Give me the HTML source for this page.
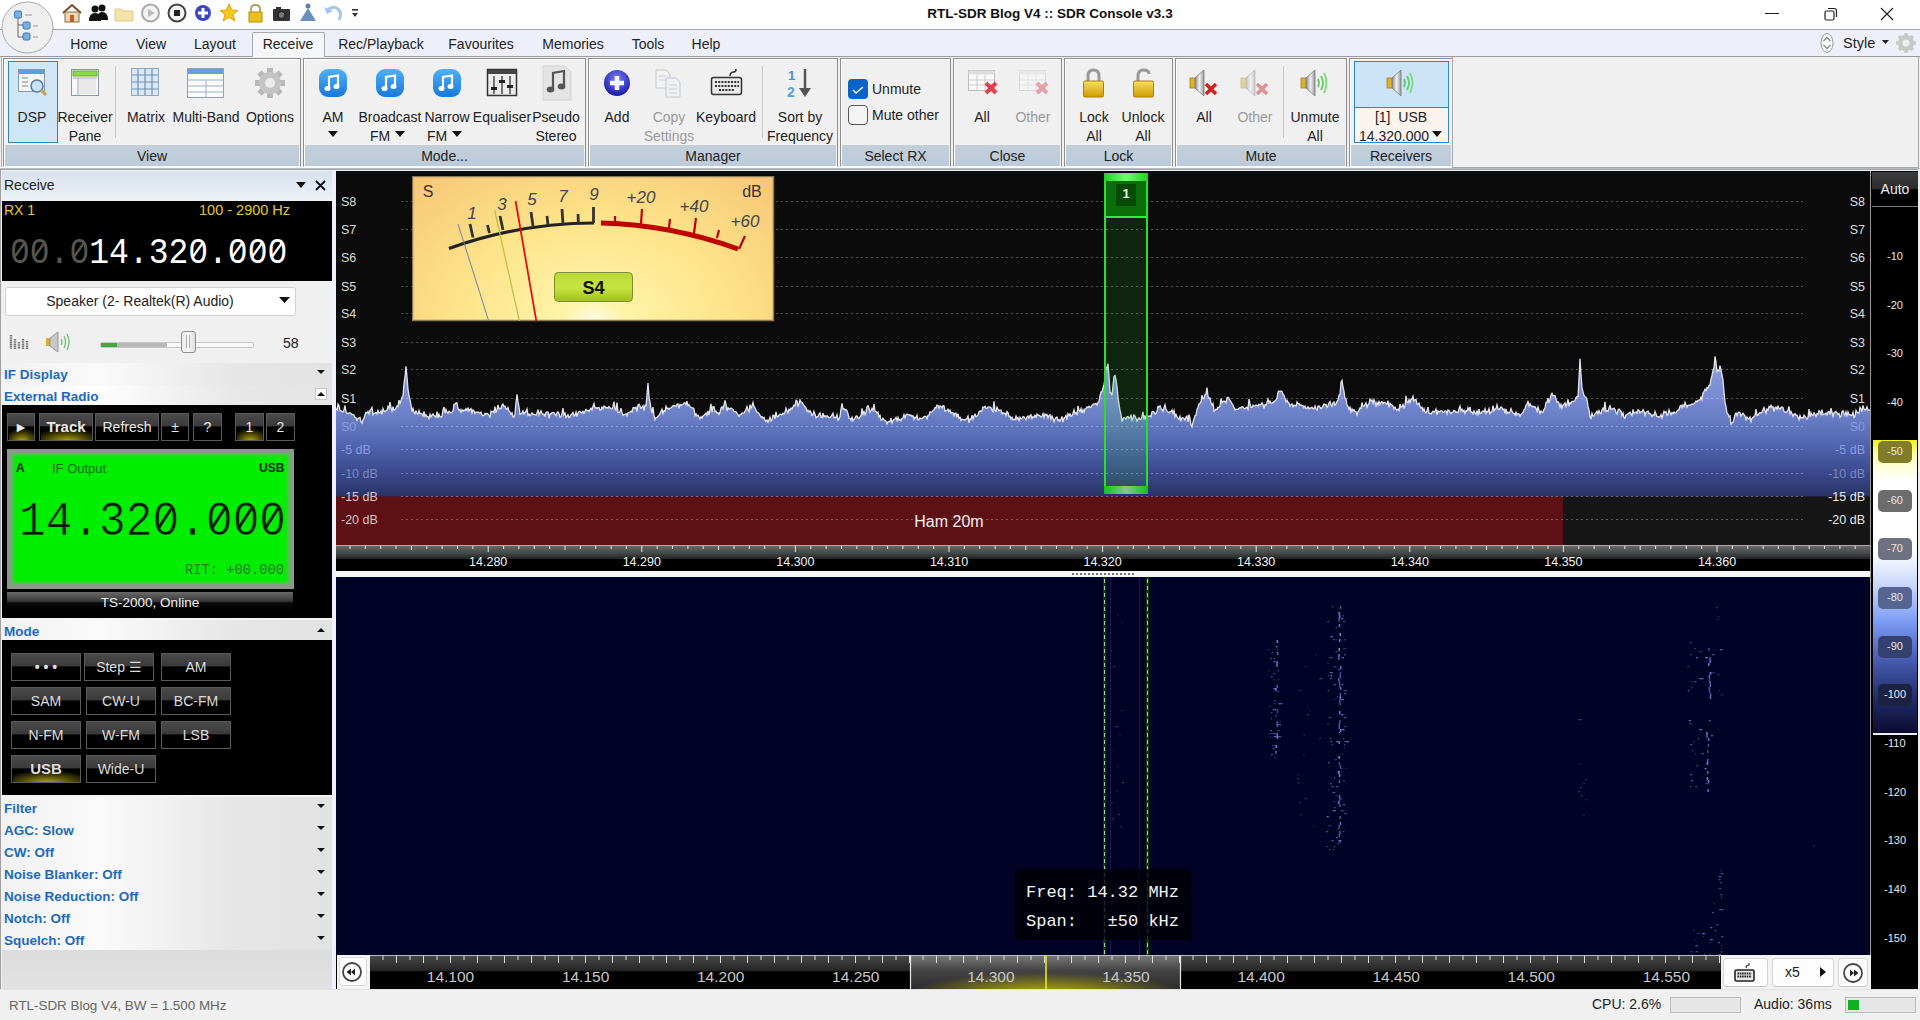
<!DOCTYPE html>
<html><head><meta charset="utf-8"><title>SDR Console</title><style>*{margin:0;padding:0}
html,body{width:1920px;height:1020px;overflow:hidden;background:#f0f0f0}
body{position:relative;font-family:"Liberation Sans",sans-serif}
.abs{position:absolute}
.t{white-space:nowrap;line-height:1.15}
.mono{font-family:"Liberation Mono",monospace;white-space:nowrap;line-height:1.15}
</style></head><body>
<div class="abs" style="left:0;top:0;width:1920px;height:29px;background:#fff"></div>
<div class="abs" style="left:0;top:29px;width:1920px;height:1px;background:#a9a9b0"></div>
<div class="abs" style="left:0;top:30px;width:1920px;height:26px;background:#edf0f9"></div>
<div class="abs" style="left:0;top:56px;width:1920px;height:1px;background:#9a9aa0"></div>
<svg class="abs" style="left:0;top:0" width="60" height="60" viewBox="0 0 60 60">
<circle cx="27.5" cy="27.5" r="25.5" fill="#efefef" stroke="#a8a8a8" stroke-width="1"/>
<path d="M18 14 V37 M18 25 H24 M18 37 H24" stroke="#666" stroke-width="1" fill="none"/>
<rect x="14.5" y="11" width="7" height="7" rx="1.5" fill="#7ab0e0" stroke="#3a78b5"/>
<rect x="23" y="22" width="7" height="7" rx="1.5" fill="#7ab0e0" stroke="#3a78b5"/>
<rect x="23" y="33" width="7" height="7" rx="1.5" fill="#7ab0e0" stroke="#3a78b5"/>
<path d="M25 15 H32 M33 26 H38 M33 37 H38" stroke="#999" stroke-width="1.2"/>
</svg>
<svg class="abs" style="left:60px;top:2px" width="310" height="24" viewBox="60 2 310 24">
<!-- home -->
<path d="M63 13 L72 5 L81 13" stroke="#7a4a20" stroke-width="2" fill="none"/>
<rect x="65" y="12" width="14" height="10" fill="#e8d8b8" stroke="#8a6a40"/>
<rect x="70" y="15" width="4" height="7" fill="#c06020"/>
<!-- people -->
<circle cx="95" cy="9" r="3.5" fill="#111"/><circle cx="102" cy="8" r="3.5" fill="#111"/>
<path d="M89 21 Q89 13 95 13 Q101 13 101 21 Z" fill="#111"/><path d="M97 20 Q97 12 102 12 Q108 12 108 20 Z" fill="#111"/>
<!-- folder -->
<path d="M115 9 H121 L123 11 H133 V21 H115 Z" fill="#f6e3a8" stroke="#e0c880" stroke-width="1"/>
<!-- play -->
<circle cx="150.5" cy="13" r="8.5" fill="#f4f4f4" stroke="#aaa" stroke-width="2"/>
<path d="M148 9 L155 13 L148 17 Z" fill="#bbb"/>
<!-- stop -->
<circle cx="177" cy="13" r="8.5" fill="#f4f4f4" stroke="#444" stroke-width="2"/>
<rect x="174" y="10" width="6" height="6" fill="#222"/>
<!-- plus -->
<circle cx="203" cy="13" r="8" fill="#3b45c8"/>
<path d="M203 8 V18 M198 13 H208" stroke="#fff" stroke-width="3"/>
<!-- star -->
<path d="M229 4 L231.6 10 L238 10.5 L233 14.5 L234.8 21 L229 17.3 L223.2 21 L225 14.5 L220 10.5 L226.4 10 Z" fill="#f8c820" stroke="#e0a000" stroke-width="1"/>
<!-- lock -->
<path d="M251 12 V9 Q251 5 255.5 5 Q260 5 260 9 V12" stroke="#b0a060" stroke-width="1.8" fill="none"/>
<rect x="249" y="12" width="13" height="10" fill="#e8c020" stroke="#c09000"/>
<!-- camera -->
<rect x="273" y="9" width="17" height="12" rx="1" fill="#333"/><rect x="276" y="7" width="5" height="3" fill="#333"/>
<circle cx="281.5" cy="15" r="3.5" fill="#777" stroke="#111"/>
<!-- pawn -->
<circle cx="308" cy="6" r="2.5" fill="#5a80b0"/>
<path d="M308 8 L300 21 H316 Z" fill="#6a90c0"/>
<!-- undo -->
<path d="M327 11 Q333 4 339 10 Q342 14 339 20" stroke="#a8c4ea" stroke-width="3" fill="none"/>
<path d="M324 7 L327 14 L333 11 Z" fill="#a8c4ea"/>
<!-- dropdown -->
<rect x="352" y="9" width="6" height="1.6" fill="#333"/><path d="M352 13 H358 L355 17 Z" fill="#333"/>
</svg>
<div class="abs t" style="left:0;top:5.5px;width:2100px;text-align:center;font-weight:bold;font-size:13.5px;color:#111">RTL-SDR Blog V4 :: SDR Console v3.3</div>
<svg class="abs" style="left:1750px;top:0" width="170" height="29">
<path d="M15 13.5 H29" stroke="#222" stroke-width="1"/>
<rect x="75" y="11" width="9" height="9" fill="none" stroke="#222" stroke-width="1.2" rx="1.5"/>
<path d="M78 8.5 H84 Q86.5 8.5 86.5 11 V17" fill="none" stroke="#222" stroke-width="1.2"/>
<path d="M131 8 L143 20 M143 8 L131 20" stroke="#222" stroke-width="1.2"/>
</svg>
<div class="abs" style="left:252px;top:32px;width:71px;height:25px;background:#f5f6fa;border:1px solid #a8a8b0;border-bottom:none;border-radius:2px 2px 0 0"></div>
<div class="abs t" style="left:29px;top:36px;width:120px;text-align:center;font-size:14px;color:#222">Home</div>
<div class="abs t" style="left:91px;top:36px;width:120px;text-align:center;font-size:14px;color:#222">View</div>
<div class="abs t" style="left:155px;top:36px;width:120px;text-align:center;font-size:14px;color:#222">Layout</div>
<div class="abs t" style="left:228px;top:36px;width:120px;text-align:center;font-size:14px;color:#222">Receive</div>
<div class="abs t" style="left:321px;top:36px;width:120px;text-align:center;font-size:14px;color:#222">Rec/Playback</div>
<div class="abs t" style="left:421px;top:36px;width:120px;text-align:center;font-size:14px;color:#222">Favourites</div>
<div class="abs t" style="left:513px;top:36px;width:120px;text-align:center;font-size:14px;color:#222">Memories</div>
<div class="abs t" style="left:588px;top:36px;width:120px;text-align:center;font-size:14px;color:#222">Tools</div>
<div class="abs t" style="left:646px;top:36px;width:120px;text-align:center;font-size:14px;color:#222">Help</div>
<svg class="abs" style="left:1815px;top:30px" width="105" height="26">
<ellipse cx="12" cy="13" rx="6" ry="9.5" fill="#fafafa" stroke="#999" stroke-width="1"/>
<path d="M8.5 11 L12 7.5 L15.5 11 M8.5 15 L12 18.5 L15.5 15" stroke="#888" stroke-width="1.3" fill="none"/>
<path d="M67 10 H74 L70.5 14 Z" fill="#222"/>
<g transform="translate(91,13)"><circle r="8" fill="#c8c8c8"/><circle r="3.5" fill="#eee"/>
<path d="M0 -10 V10 M-10 0 H10 M-7 -7 L7 7 M7 -7 L-7 7" stroke="#c8c8c8" stroke-width="3.5"/><circle r="3.5" fill="#eee"/></g>
</svg>
<div class="abs t" style="left:1843px;top:35px;font-size:14.5px;color:#222">Style</div>
<div class="abs" style="left:0;top:57px;width:1920px;height:112px;background:#f0f0f0"></div>
<div class="abs" style="left:1px;top:57px;width:1px;height:112px;background:#b0b0b0"></div>
<div class="abs" style="left:0;top:167px;width:1920px;height:1px;background:#fafbfc"></div><div class="abs" style="left:0;top:168px;width:1920px;height:1px;background:#b8bcc0"></div><div class="abs" style="left:0;top:169px;width:1920px;height:1px;background:#a0a4a8"></div>
<div class="abs" style="left:3px;top:58px;width:296px;height:107px;border:1px solid #8e8e8e;border-bottom-color:#fbfcff;box-shadow:inset 1px 1px 0 #fff"></div>
<div class="abs" style="left:5px;top:145px;width:294px;height:21px;background:linear-gradient(#c3ced8,#bccbdb)"></div>
<div class="abs t" style="left:3px;top:148px;width:298px;text-align:center;font-size:14px;color:#222">View</div>
<div class="abs" style="left:303px;top:58px;width:281px;height:107px;border:1px solid #8e8e8e;border-bottom-color:#fbfcff;box-shadow:inset 1px 1px 0 #fff"></div>
<div class="abs" style="left:305px;top:145px;width:279px;height:21px;background:linear-gradient(#c3ced8,#bccbdb)"></div>
<div class="abs t" style="left:303px;top:148px;width:283px;text-align:center;font-size:14px;color:#222">Mode...</div>
<div class="abs" style="left:588px;top:58px;width:248px;height:107px;border:1px solid #8e8e8e;border-bottom-color:#fbfcff;box-shadow:inset 1px 1px 0 #fff"></div>
<div class="abs" style="left:590px;top:145px;width:246px;height:21px;background:linear-gradient(#c3ced8,#bccbdb)"></div>
<div class="abs t" style="left:588px;top:148px;width:250px;text-align:center;font-size:14px;color:#222">Manager</div>
<div class="abs" style="left:840px;top:58px;width:109px;height:107px;border:1px solid #8e8e8e;border-bottom-color:#fbfcff;box-shadow:inset 1px 1px 0 #fff"></div>
<div class="abs" style="left:842px;top:145px;width:107px;height:21px;background:linear-gradient(#c3ced8,#bccbdb)"></div>
<div class="abs t" style="left:840px;top:148px;width:111px;text-align:center;font-size:14px;color:#222">Select RX</div>
<div class="abs" style="left:953px;top:58px;width:107px;height:107px;border:1px solid #8e8e8e;border-bottom-color:#fbfcff;box-shadow:inset 1px 1px 0 #fff"></div>
<div class="abs" style="left:955px;top:145px;width:105px;height:21px;background:linear-gradient(#c3ced8,#bccbdb)"></div>
<div class="abs t" style="left:953px;top:148px;width:109px;text-align:center;font-size:14px;color:#222">Close</div>
<div class="abs" style="left:1064px;top:58px;width:107px;height:107px;border:1px solid #8e8e8e;border-bottom-color:#fbfcff;box-shadow:inset 1px 1px 0 #fff"></div>
<div class="abs" style="left:1066px;top:145px;width:105px;height:21px;background:linear-gradient(#c3ced8,#bccbdb)"></div>
<div class="abs t" style="left:1064px;top:148px;width:109px;text-align:center;font-size:14px;color:#222">Lock</div>
<div class="abs" style="left:1175px;top:58px;width:170px;height:107px;border:1px solid #8e8e8e;border-bottom-color:#fbfcff;box-shadow:inset 1px 1px 0 #fff"></div>
<div class="abs" style="left:1177px;top:145px;width:168px;height:21px;background:linear-gradient(#c3ced8,#bccbdb)"></div>
<div class="abs t" style="left:1175px;top:148px;width:172px;text-align:center;font-size:14px;color:#222">Mute</div>
<div class="abs" style="left:1349px;top:58px;width:102px;height:107px;border:1px solid #8e8e8e;border-bottom-color:#fbfcff;box-shadow:inset 1px 1px 0 #fff"></div>
<div class="abs" style="left:1351px;top:145px;width:100px;height:21px;background:linear-gradient(#c3ced8,#bccbdb)"></div>
<div class="abs t" style="left:1349px;top:148px;width:104px;text-align:center;font-size:14px;color:#222">Receivers</div>
<div class="abs" style="left:1452px;top:57px;width:465px;height:110px;border:1px solid #a8a8a8;border-top:none"></div>
<div class="abs" style="left:8px;top:61px;width:48px;height:80px;background:#cfe6f8;border:1px solid #3c7fb1"></div>
<div class="abs" style="left:1354px;top:61px;width:93px;height:80px;background:#fbf3ee;border:1px solid #2f84d0"></div>
<div class="abs" style="left:1355px;top:62px;width:93px;height:45px;background:#cce4f7;border-bottom:1px solid #2f84d0"></div>
<div class="abs" style="left:115px;top:66px;width:1px;height:72px;background:#c8c8c8"></div>
<div class="abs" style="left:762px;top:66px;width:1px;height:72px;background:#c8c8c8"></div>
<div class="abs" style="left:1283px;top:66px;width:1px;height:72px;background:#c8c8c8"></div>
<div class="abs t" style="left:-18px;top:109px;width:100px;text-align:center;font-size:14px;color:#222">DSP</div>
<div class="abs t" style="left:35px;top:109px;width:100px;text-align:center;font-size:14px;color:#222">Receiver</div>
<div class="abs t" style="left:35px;top:128px;width:100px;text-align:center;font-size:14px;color:#222">Pane</div>
<div class="abs t" style="left:96px;top:109px;width:100px;text-align:center;font-size:14px;color:#222">Matrix</div>
<div class="abs t" style="left:156px;top:109px;width:100px;text-align:center;font-size:14px;color:#222">Multi-Band</div>
<div class="abs t" style="left:220px;top:109px;width:100px;text-align:center;font-size:14px;color:#222">Options</div>
<div class="abs t" style="left:283px;top:109px;width:100px;text-align:center;font-size:14px;color:#222">AM</div>
<div class="abs t" style="left:340px;top:109px;width:100px;text-align:center;font-size:14px;color:#222">Broadcast</div>
<div class="abs t" style="left:397px;top:109px;width:100px;text-align:center;font-size:14px;color:#222">Narrow</div>
<div class="abs t" style="left:452px;top:109px;width:100px;text-align:center;font-size:14px;color:#222">Equaliser</div>
<div class="abs t" style="left:506px;top:109px;width:100px;text-align:center;font-size:14px;color:#222">Pseudo</div>
<div class="abs t" style="left:506px;top:128px;width:100px;text-align:center;font-size:14px;color:#222">Stereo</div>
<div class="abs t" style="left:567px;top:109px;width:100px;text-align:center;font-size:14px;color:#222">Add</div>
<div class="abs t" style="left:619px;top:109px;width:100px;text-align:center;font-size:14px;color:#9a9a9a">Copy</div>
<div class="abs t" style="left:619px;top:128px;width:100px;text-align:center;font-size:14px;color:#9a9a9a">Settings</div>
<div class="abs t" style="left:676px;top:109px;width:100px;text-align:center;font-size:14px;color:#222">Keyboard</div>
<div class="abs t" style="left:750px;top:109px;width:100px;text-align:center;font-size:14px;color:#222">Sort by</div>
<div class="abs t" style="left:750px;top:128px;width:100px;text-align:center;font-size:14px;color:#222">Frequency</div>
<div class="abs t" style="left:932px;top:109px;width:100px;text-align:center;font-size:14px;color:#222">All</div>
<div class="abs t" style="left:983px;top:109px;width:100px;text-align:center;font-size:14px;color:#9a9a9a">Other</div>
<div class="abs t" style="left:1044px;top:109px;width:100px;text-align:center;font-size:14px;color:#222">Lock</div>
<div class="abs t" style="left:1044px;top:128px;width:100px;text-align:center;font-size:14px;color:#222">All</div>
<div class="abs t" style="left:1093px;top:109px;width:100px;text-align:center;font-size:14px;color:#222">Unlock</div>
<div class="abs t" style="left:1093px;top:128px;width:100px;text-align:center;font-size:14px;color:#222">All</div>
<div class="abs t" style="left:1154px;top:109px;width:100px;text-align:center;font-size:14px;color:#222">All</div>
<div class="abs t" style="left:1205px;top:109px;width:100px;text-align:center;font-size:14px;color:#9a9a9a">Other</div>
<div class="abs t" style="left:1265px;top:109px;width:100px;text-align:center;font-size:14px;color:#222">Unmute</div>
<div class="abs t" style="left:1265px;top:128px;width:100px;text-align:center;font-size:14px;color:#222">All</div>
<div class="abs t" style="left:1351px;top:109px;width:100px;text-align:center;font-size:14px;color:#222">[1]&nbsp;&nbsp;USB</div>
<div class="abs t" style="left:370px;top:128px;font-size:14px;color:#222">FM</div>
<svg class="abs" style="left:395px;top:131px" width="12" height="8"><path d="M0 0 H10 L5 6 Z" fill="#111"/></svg>
<div class="abs t" style="left:427px;top:128px;font-size:14px;color:#222">FM</div>
<svg class="abs" style="left:452px;top:131px" width="12" height="8"><path d="M0 0 H10 L5 6 Z" fill="#111"/></svg>
<svg class="abs" style="left:328px;top:131px" width="12" height="8"><path d="M0 0 H10 L5 6 Z" fill="#111"/></svg>
<div class="abs t" style="left:1359px;top:128px;font-size:14px;color:#222">14.320.000</div>
<svg class="abs" style="left:1432px;top:131px" width="12" height="8"><path d="M0 0 H10 L5 6 Z" fill="#111"/></svg>
<div class="abs" style="left:848px;top:79px;width:20px;height:20px;background:#0a64c8;border-radius:4px"></div>
<svg class="abs" style="left:848px;top:79px" width="20" height="20"><path d="M5 11 L8 14 L15 8" stroke="#e8f4ff" stroke-width="1.6" fill="none"/></svg>
<div class="abs" style="left:848px;top:105px;width:20px;height:20px;border:1px solid #555;border-radius:4px;box-sizing:border-box;background:#f4f4f4"></div>
<div class="abs t" style="left:872px;top:81px;font-size:14px;color:#222">Unmute</div>
<div class="abs t" style="left:872px;top:107px;font-size:14px;color:#222">Mute other</div>
<svg class="abs" style="left:16px;top:66px" width="34" height="34" viewBox="0 0 34 34">
<rect x="2.5" y="3.5" width="26" height="22" fill="#f4f4f4" stroke="#8898a8"/>
<rect x="3" y="4" width="25" height="4" fill="#5aa0e0"/>
<path d="M6 12 H12 M6 16 H12 M6 20 H12" stroke="#aaa" stroke-width="1.5"/>
<circle cx="21" cy="20" r="6" fill="#c8e4f8" stroke="#5878a0" stroke-width="1.5"/>
<path d="M25 24 L30 29" stroke="#d0a040" stroke-width="3"/>
</svg>
<svg class="abs" style="left:69px;top:67px" width="32" height="32" viewBox="0 0 32 32">
<rect x="2.5" y="2.5" width="27" height="26" fill="#f8f8f8" stroke="#8898a8"/>
<rect x="4" y="4" width="24" height="5" fill="#8ad848" stroke="#6ab030"/>
<path d="M4 11 H28 M9 11 V28" stroke="#aaa"/>
<rect x="10" y="12" width="17" height="15" fill="#e8e8e8"/>
</svg>
<svg class="abs" style="left:130px;top:67px" width="32" height="30" viewBox="0 0 32 30">
<rect x="1.5" y="1.5" width="27" height="27" fill="#d8e8f4" stroke="#90a8c0"/>
<path d="M8 2 V28 M15 2 V28 M22 2 V28 M2 8 H28 M2 15 H28 M2 22 H28" stroke="#7090b0" stroke-width="1.2"/>
</svg>
<svg class="abs" style="left:186px;top:66px" width="40" height="34" viewBox="0 0 40 34">
<rect x="1.5" y="2.5" width="36" height="29" fill="#fafafa" stroke="#90a0b8"/>
<rect x="2" y="3" width="35" height="5" fill="#6a9ee0"/>
<path d="M2 14 H37 M2 20 H37 M2 26 H37 M20 14 V31" stroke="#a0b0c8"/>
</svg>
<svg class="abs" style="left:253px;top:67px" width="34" height="34" viewBox="0 0 34 34">
<g transform="translate(17,16)"><path d="M0 -15 V15 M-15 0 H15 M-10.6 -10.6 L10.6 10.6 M10.6 -10.6 L-10.6 10.6" stroke="#b8b8b8" stroke-width="6"/>
<circle r="11" fill="#c4c4c4"/><circle r="5" fill="#ececec"/></g>
</svg>
<svg class="abs" style="left:318px;top:68px" width="30" height="30" viewBox="0 0 30 30">
<defs><linearGradient id="bg318" x1="0" y1="0" x2="0" y2="1"><stop offset="0" stop-color="#4fb0f8"/><stop offset="1" stop-color="#1a78d8"/></linearGradient></defs>
<rect x="1" y="1" width="28" height="28" rx="9" fill="url(#bg318)"/>
<path d="M11 20 V9 L20 7.5 V18" stroke="#fff" stroke-width="2.2" fill="none"/>
<ellipse cx="9.5" cy="20.5" rx="3" ry="2.5" fill="#fff"/><ellipse cx="18.5" cy="18.5" rx="3" ry="2.5" fill="#fff"/>
</svg>
<svg class="abs" style="left:375px;top:68px" width="30" height="30" viewBox="0 0 30 30">
<defs><linearGradient id="bg375" x1="0" y1="0" x2="0" y2="1"><stop offset="0" stop-color="#4fb0f8"/><stop offset="1" stop-color="#1a78d8"/></linearGradient></defs>
<rect x="1" y="1" width="28" height="28" rx="9" fill="url(#bg375)"/>
<path d="M11 20 V9 L20 7.5 V18" stroke="#fff" stroke-width="2.2" fill="none"/>
<ellipse cx="9.5" cy="20.5" rx="3" ry="2.5" fill="#fff"/><ellipse cx="18.5" cy="18.5" rx="3" ry="2.5" fill="#fff"/>
</svg>
<svg class="abs" style="left:432px;top:68px" width="30" height="30" viewBox="0 0 30 30">
<defs><linearGradient id="bg432" x1="0" y1="0" x2="0" y2="1"><stop offset="0" stop-color="#4fb0f8"/><stop offset="1" stop-color="#1a78d8"/></linearGradient></defs>
<rect x="1" y="1" width="28" height="28" rx="9" fill="url(#bg432)"/>
<path d="M11 20 V9 L20 7.5 V18" stroke="#fff" stroke-width="2.2" fill="none"/>
<ellipse cx="9.5" cy="20.5" rx="3" ry="2.5" fill="#fff"/><ellipse cx="18.5" cy="18.5" rx="3" ry="2.5" fill="#fff"/>
</svg>
<svg class="abs" style="left:486px;top:68px" width="32" height="30" viewBox="0 0 32 30">
<rect x="1.5" y="1.5" width="29" height="26" fill="#ececec" stroke="#333" stroke-width="1.5"/>
<rect x="2" y="2" width="28" height="4" fill="#444"/>
<path d="M8 8 V26 M16 8 V26 M24 8 V26" stroke="#333" stroke-width="1.3"/>
<rect x="5" y="19" width="6" height="3" fill="#222"/><rect x="13" y="12" width="6" height="3" fill="#222"/><rect x="21" y="17" width="6" height="3" fill="#222"/>
</svg>
<svg class="abs" style="left:541px;top:65px" width="32" height="36" viewBox="0 0 32 36">
<path d="M2 1 H24 L30 7 V35 H2 Z" fill="#e4e4e4" stroke="#d0d0d0"/>
<path d="M12 24 V8 L23 6 V21" stroke="#555" stroke-width="2.2" fill="none"/>
<ellipse cx="9.5" cy="24.5" rx="3.8" ry="3" fill="#555"/><ellipse cx="20.5" cy="21.5" rx="3.8" ry="3" fill="#555"/>
</svg>
<svg class="abs" style="left:603px;top:69px" width="30" height="30" viewBox="0 0 30 30">
<defs><radialGradient id="addg" cx="0.5" cy="0.35" r="0.6"><stop offset="0" stop-color="#8080ff"/><stop offset="1" stop-color="#2020a8"/></radialGradient></defs>
<circle cx="14" cy="14" r="13" fill="url(#addg)"/>
<path d="M14 7 V21 M7 14 H21" stroke="#f4f8ff" stroke-width="4.5"/>
</svg>
<svg class="abs" style="left:653px;top:68px" width="32" height="32" viewBox="0 0 32 32">
<path d="M3 2 H13 L17 6 V20 H3 Z" fill="#f2f2f2" stroke="#c8c8c8"/>
<path d="M13 10 H23 L27 14 V29 H13 Z" fill="#eef2f6" stroke="#c0c8d0"/>
<path d="M16 17 H24 M16 21 H24 M16 25 H24 M6 8 H13 M6 12 H13" stroke="#ccc"/>
</svg>
<svg class="abs" style="left:710px;top:68px" width="34" height="30" viewBox="0 0 34 30">
<path d="M20 8 Q20 4 24 4 Q26 4 26 1" stroke="#333" stroke-width="1.5" fill="none"/>
<rect x="1.5" y="9.5" width="30" height="17" rx="2" fill="#e8e8e8" stroke="#333" stroke-width="1.5"/>
<path d="M5 14 H29 M5 18 H29 M9 22 H25" stroke="#333" stroke-width="2" stroke-dasharray="2 1.2"/>
</svg>
<svg class="abs" style="left:784px;top:66px" width="34" height="34" viewBox="0 0 34 34">
<text x="4" y="14" font-family="Liberation Sans" font-weight="bold" font-size="13" fill="#4a90d0">1</text>
<text x="3" y="31" font-family="Liberation Sans" font-weight="bold" font-size="14" fill="#5aa0e0">2</text>
<path d="M21 3 V28" stroke="#555" stroke-width="2.5"/>
<path d="M15 22 L21 31 L27 22 Z" fill="#555"/>
</svg>
<svg class="abs" style="left:967px;top:68px;opacity:1" width="32" height="28" viewBox="0 0 32 28">
<rect x="1.5" y="2.5" width="26" height="20" fill="#fafafa" stroke="#bbb"/>
<rect x="1.5" y="2.5" width="26" height="4" fill="#ddd"/>
<path d="M2 12 H27 M2 17 H27 M10 7 V22 M18 7 V22" stroke="#ccc" stroke-width="1"/>
<path d="M19 15 L29 25 M29 15 L19 25" stroke="#e04050" stroke-width="4"/>
</svg>
<svg class="abs" style="left:1018px;top:68px;opacity:0.45" width="32" height="28" viewBox="0 0 32 28">
<rect x="1.5" y="2.5" width="26" height="20" fill="#fafafa" stroke="#bbb"/>
<rect x="1.5" y="2.5" width="26" height="4" fill="#ddd"/>
<path d="M2 12 H27 M2 17 H27 M10 7 V22 M18 7 V22" stroke="#ccc" stroke-width="1"/>
<path d="M19 15 L29 25 M29 15 L19 25" stroke="#e04050" stroke-width="4"/>
</svg>
<svg class="abs" style="left:1082px;top:67px" width="24" height="32" viewBox="0 0 24 32">
<defs><linearGradient id="lk1082" x1="0" y1="0" x2="0" y2="1"><stop offset="0" stop-color="#f8e060"/><stop offset="1" stop-color="#d09a00"/></linearGradient></defs>
<path d="M6 14 V9 Q6 3 11.5 3 Q17 3 17 9 V14" stroke="#999" stroke-width="3" fill="none"/>
<rect x="1.5" y="14" width="20" height="16" rx="1.5" fill="url(#lk1082)" stroke="#b08000"/>
</svg>
<svg class="abs" style="left:1132px;top:67px" width="24" height="32" viewBox="0 0 24 32">
<defs><linearGradient id="lk1132" x1="0" y1="0" x2="0" y2="1"><stop offset="0" stop-color="#f8e060"/><stop offset="1" stop-color="#d09a00"/></linearGradient></defs>
<path d="M6 14 V9 Q6 3 11.5 3 Q17 3 17 7" stroke="#999" stroke-width="3" fill="none"/>
<rect x="1.5" y="14" width="20" height="16" rx="1.5" fill="url(#lk1132)" stroke="#b08000"/>
</svg>
<svg class="abs" style="left:1187px;top:67px;opacity:1" width="34" height="32" viewBox="0 0 34 32">
<defs><linearGradient id="sp1187" x1="0" y1="0" x2="1" y2="0"><stop offset="0" stop-color="#888"/><stop offset="0.5" stop-color="#f0f0f0"/><stop offset="1" stop-color="#999"/></linearGradient></defs>
<rect x="3" y="11" width="6" height="10" fill="#e0b020" stroke="#a08020" stroke-width="0.8"/>
<path d="M8 11 L17 3 V29 L8 21 Z" fill="url(#sp1187)" stroke="#777" stroke-width="0.8"/><path d="M19 17 L29 27 M29 17 L19 27" stroke="#d02020" stroke-width="3.5"/></svg>
<svg class="abs" style="left:1238px;top:67px;opacity:0.45" width="34" height="32" viewBox="0 0 34 32">
<defs><linearGradient id="sp1238" x1="0" y1="0" x2="1" y2="0"><stop offset="0" stop-color="#888"/><stop offset="0.5" stop-color="#f0f0f0"/><stop offset="1" stop-color="#999"/></linearGradient></defs>
<rect x="3" y="11" width="6" height="10" fill="#e0b020" stroke="#a08020" stroke-width="0.8"/>
<path d="M8 11 L17 3 V29 L8 21 Z" fill="url(#sp1238)" stroke="#777" stroke-width="0.8"/><path d="M19 17 L29 27 M29 17 L19 27" stroke="#d02020" stroke-width="3.5"/></svg>
<svg class="abs" style="left:1298px;top:67px;opacity:1" width="34" height="32" viewBox="0 0 34 32">
<defs><linearGradient id="sp1298" x1="0" y1="0" x2="1" y2="0"><stop offset="0" stop-color="#888"/><stop offset="0.5" stop-color="#f0f0f0"/><stop offset="1" stop-color="#999"/></linearGradient></defs>
<rect x="3" y="11" width="6" height="10" fill="#e0b020" stroke="#a08020" stroke-width="0.8"/>
<path d="M8 11 L17 3 V29 L8 21 Z" fill="url(#sp1298)" stroke="#777" stroke-width="0.8"/><path d="M20 12 Q22 16 20 20" stroke="#6c6" stroke-width="1.8" fill="none"/>
<path d="M23 9 Q27 16 23 23" stroke="#6c6" stroke-width="1.8" fill="none"/>
<path d="M26 6 Q31 16 26 26" stroke="#7d7" stroke-width="1.8" fill="none"/></svg>
<svg class="abs" style="left:1384px;top:67px;opacity:1" width="34" height="32" viewBox="0 0 34 32">
<defs><linearGradient id="sp1384" x1="0" y1="0" x2="1" y2="0"><stop offset="0" stop-color="#888"/><stop offset="0.5" stop-color="#f0f0f0"/><stop offset="1" stop-color="#999"/></linearGradient></defs>
<rect x="3" y="11" width="6" height="10" fill="#e0b020" stroke="#a08020" stroke-width="0.8"/>
<path d="M8 11 L17 3 V29 L8 21 Z" fill="url(#sp1384)" stroke="#777" stroke-width="0.8"/><path d="M20 12 Q22 16 20 20" stroke="#6c6" stroke-width="1.8" fill="none"/>
<path d="M23 9 Q27 16 23 23" stroke="#6c6" stroke-width="1.8" fill="none"/>
<path d="M26 6 Q31 16 26 26" stroke="#7d7" stroke-width="1.8" fill="none"/></svg>
<div class="abs" style="left:0;top:170px;width:336px;height:820px;background:#f0f0f0"></div><div class="abs" style="left:0;top:170px;width:336px;height:1px;background:#eef0f8"></div>
<div class="abs" style="left:0;top:170px;width:1px;height:820px;background:#a0a0a0"></div>
<div class="abs" style="left:2px;top:171px;width:330px;height:30px;background:linear-gradient(#d8e2ec,#e4ebf3 60%,#eef2f7)"></div>
<div class="abs t" style="left:4px;top:177px;font-size:14px;color:#222">Receive</div>
<svg class="abs" style="left:294px;top:180px" width="40" height="12"><path d="M2 2 H12 L7 8 Z" fill="#111"/><path d="M22 1 L31 10 M31 1 L22 10" stroke="#111" stroke-width="1.8"/></svg>
<div class="abs" style="left:2px;top:201px;width:330px;height:80px;background:#000"></div>
<div class="abs t" style="left:4px;top:202px;font-size:14px;color:#e8c830">RX 1</div>
<div class="abs t" style="left:199px;top:202px;font-size:14.5px;color:#e8c830">100 - 2900 Hz</div>
<div class="abs mono" style="left:10px;top:232.5px;font-size:33px;color:#56564f;letter-spacing:0;transform:scaleY(1.12);transform-origin:0 0">00.0<span style="color:#fff">14.320.000</span></div>
<svg class="abs" style="left:0;top:200px" width="332" height="82" viewBox="0 200 332 82"><rect x="16.1" y="246.5" width="6.4" height="7.5" fill="#000"/><line x1="14.1" y1="257.5" x2="24.5" y2="243" stroke="#56564f" stroke-width="2.3"/><rect x="35.9" y="246.5" width="6.4" height="7.5" fill="#000"/><line x1="33.9" y1="257.5" x2="44.3" y2="243" stroke="#56564f" stroke-width="2.3"/><rect x="75.5" y="246.5" width="6.4" height="7.5" fill="#000"/><line x1="73.5" y1="257.5" x2="83.9" y2="243" stroke="#56564f" stroke-width="2.3"/><rect x="194.3" y="246.5" width="6.4" height="7.5" fill="#000"/><line x1="192.3" y1="257.5" x2="202.7" y2="243" stroke="#fff" stroke-width="2.3"/><rect x="233.9" y="246.5" width="6.4" height="7.5" fill="#000"/><line x1="231.9" y1="257.5" x2="242.3" y2="243" stroke="#fff" stroke-width="2.3"/><rect x="253.7" y="246.5" width="6.4" height="7.5" fill="#000"/><line x1="251.7" y1="257.5" x2="262.1" y2="243" stroke="#fff" stroke-width="2.3"/><rect x="273.5" y="246.5" width="6.4" height="7.5" fill="#000"/><line x1="271.5" y1="257.5" x2="281.9" y2="243" stroke="#fff" stroke-width="2.3"/></svg>
<div class="abs" style="left:5px;top:287px;width:291px;height:29px;box-sizing:border-box;background:#fff;border:1px solid #d0d0d0;border-radius:3px"></div>
<div class="abs t" style="left:5px;top:293px;width:270px;text-align:center;font-size:14px;color:#222">Speaker (2- Realtek(R) Audio)</div>
<svg class="abs" style="left:279px;top:297px" width="12" height="8"><path d="M0 0 H11 L5.5 6 Z" fill="#111"/></svg>
<svg class="abs" style="left:8px;top:330px" width="70" height="24">
<path d="M3 5 V19 M7 9 V19 M11 12 V19 M15 9 V19 M19 11 V19" stroke="#777" stroke-width="2.4" stroke-dasharray="1.6 0.6"/>
<rect x="38" y="8" width="5" height="8" fill="#d8b030"/>
<path d="M42 8 L50 2 V22 L42 16 Z" fill="#c8c8c8" stroke="#888" stroke-width="0.8"/>
<path d="M53 9 Q55 12 53 15 M56 6 Q59 12 56 18 M59 4 Q63 12 59 20" stroke="#70c070" stroke-width="1.3" fill="none"/>
</svg>
<div class="abs" style="left:100px;top:342px;width:152px;height:4px;background:#f8f8f8;border:1px solid #c8c8c8;border-radius:2px"></div>
<div class="abs" style="left:101px;top:343px;width:66px;height:4px;background:#b8b8b8"></div>
<div class="abs" style="left:101px;top:343px;width:16px;height:4px;background:#40a840"></div>
<div class="abs" style="left:181px;top:331px;width:15px;height:22px;box-sizing:border-box;border:1px solid #909090;border-radius:3px;background:linear-gradient(90deg,#e8e8e8,#f8f8f8,#dcdcdc)"></div>
<div class="abs" style="left:186px;top:335px;width:1px;height:13px;background:#aaa"></div><div class="abs" style="left:189px;top:335px;width:1px;height:13px;background:#aaa"></div>
<div class="abs t" style="left:283px;top:335px;font-size:14px;color:#222">58</div>
<div class="abs" style="left:2px;top:360px;width:330px;height:3px;background:#f0f0f0"></div>
<div class="abs" style="left:2px;top:363px;width:330px;height:22px;background:linear-gradient(90deg,#f2f2f2 0%,#fafafa 30%,#e6e6e6 70%,#e2e2e2 100%)"></div><div class="abs t" style="left:4px;top:367px;font-size:13.5px;font-weight:bold;color:#1c6ac0">IF Display</div><svg class="abs" style="left:316px;top:369px" width="10" height="8"><path d="M1 1 H9 L5 5 Z" fill="#111"/></svg>
<div class="abs" style="left:2px;top:385px;width:330px;height:20px;background:linear-gradient(90deg,#f4f4f4 0%,#fdfdfd 30%,#e8e8e8 70%,#e4e4e4 100%)"></div>
<div class="abs t" style="left:4px;top:389px;font-size:13.5px;font-weight:bold;color:#1c6ac0">External Radio</div>
<div class="abs" style="left:315px;top:388px;width:10px;height:10px;background:#fcfcfc;border:1px solid #c8c8c8"></div>
<svg class="abs" style="left:316px;top:390px" width="10" height="8"><path d="M1 6 H9 L5 2 Z" fill="#111"/></svg>
<div class="abs" style="left:2px;top:405px;width:330px;height:213px;background:#000"></div>
<div class="abs" style="left:7px;top:413px;width:28px;height:28px;box-sizing:border-box;border:1px solid #5a5a5a;background:linear-gradient(#4a4a4a,#3a3a3a 45%,#000 50%,#000);overflow:hidden"><div class="abs" style="left:1px;top:14px;width:26px;height:13px;background:radial-gradient(ellipse 70% 100% at 50% 100%, rgba(190,180,20,0.95), rgba(140,130,10,0.55) 55%, rgba(0,0,0,0) 100%)"></div>
<div class="abs t" style="left:0;top:0;width:26px;height:26px;line-height:26px;text-align:center;font-size:14px;font-weight:normal;color:#e8e8e8">&#9658;</div></div>
<div class="abs" style="left:39px;top:413px;width:54px;height:28px;box-sizing:border-box;border:1px solid #5a5a5a;background:linear-gradient(#4a4a4a,#3a3a3a 45%,#000 50%,#000);overflow:hidden"><div class="abs" style="left:1px;top:14px;width:52px;height:13px;background:radial-gradient(ellipse 70% 100% at 50% 100%, rgba(190,180,20,0.95), rgba(140,130,10,0.55) 55%, rgba(0,0,0,0) 100%)"></div>
<div class="abs t" style="left:0;top:0;width:52px;height:26px;line-height:26px;text-align:center;font-size:15px;font-weight:bold;color:#e8e8e8">Track</div></div>
<div class="abs" style="left:95px;top:413px;width:64px;height:28px;box-sizing:border-box;border:1px solid #5a5a5a;background:linear-gradient(#4a4a4a,#3a3a3a 45%,#000 50%,#000);overflow:hidden">
<div class="abs t" style="left:0;top:0;width:62px;height:26px;line-height:26px;text-align:center;font-size:14px;font-weight:normal;color:#e8e8e8">Refresh</div></div>
<div class="abs" style="left:161px;top:413px;width:28px;height:28px;box-sizing:border-box;border:1px solid #5a5a5a;background:linear-gradient(#4a4a4a,#3a3a3a 45%,#000 50%,#000);overflow:hidden">
<div class="abs t" style="left:0;top:0;width:26px;height:26px;line-height:26px;text-align:center;font-size:14px;font-weight:normal;color:#e8e8e8">&plusmn;</div></div>
<div class="abs" style="left:193px;top:413px;width:29px;height:28px;box-sizing:border-box;border:1px solid #5a5a5a;background:linear-gradient(#4a4a4a,#3a3a3a 45%,#000 50%,#000);overflow:hidden">
<div class="abs t" style="left:0;top:0;width:27px;height:26px;line-height:26px;text-align:center;font-size:14px;font-weight:normal;color:#e8e8e8">?</div></div>
<div class="abs" style="left:235px;top:413px;width:29px;height:28px;box-sizing:border-box;border:1px solid #5a5a5a;background:linear-gradient(#4a4a4a,#3a3a3a 45%,#000 50%,#000);overflow:hidden"><div class="abs" style="left:1px;top:14px;width:27px;height:13px;background:radial-gradient(ellipse 70% 100% at 50% 100%, rgba(190,180,20,0.95), rgba(140,130,10,0.55) 55%, rgba(0,0,0,0) 100%)"></div>
<div class="abs t" style="left:0;top:0;width:27px;height:26px;line-height:26px;text-align:center;font-size:14px;font-weight:normal;color:#e8e8e8">1</div></div>
<div class="abs" style="left:266px;top:413px;width:29px;height:28px;box-sizing:border-box;border:1px solid #5a5a5a;background:linear-gradient(#4a4a4a,#3a3a3a 45%,#000 50%,#000);overflow:hidden">
<div class="abs t" style="left:0;top:0;width:27px;height:26px;line-height:26px;text-align:center;font-size:14px;font-weight:normal;color:#e8e8e8">2</div></div>
<div class="abs" style="left:7px;top:449px;width:287px;height:140px;box-sizing:border-box;background:#00ee00;border:5px solid #8a9a8a;box-shadow:inset 0 0 3px 2px #4ac84a"></div>
<div class="abs t" style="left:16px;top:462px;font-size:12px;font-weight:bold;color:#0a2a0a">A</div>
<div class="abs t" style="left:52px;top:462px;font-size:13px;color:#1a6a1a">IF Output</div>
<div class="abs t" style="left:259px;top:462px;font-size:12px;font-weight:bold;color:#0a2a0a">USB</div>
<div class="abs mono" style="left:19px;top:494px;font-size:44.5px;color:#061806;transform:scaleY(1.1);transform-origin:0 0;-webkit-text-stroke:0.6px #00ee00">14.320.000</div>
<svg class="abs" style="left:12px;top:455px" width="276" height="128" viewBox="12 455 276 128"><rect x="160.5" y="513.5" width="9" height="10" fill="#00ee00"/><line x1="158.0" y1="529" x2="172.0" y2="507.5" stroke="#061806" stroke-width="2.8"/><rect x="213.9" y="513.5" width="9" height="10" fill="#00ee00"/><line x1="211.4" y1="529" x2="225.4" y2="507.5" stroke="#061806" stroke-width="2.8"/><rect x="240.6" y="513.5" width="9" height="10" fill="#00ee00"/><line x1="238.1" y1="529" x2="252.1" y2="507.5" stroke="#061806" stroke-width="2.8"/><rect x="267.3" y="513.5" width="9" height="10" fill="#00ee00"/><line x1="264.8" y1="529" x2="278.8" y2="507.5" stroke="#061806" stroke-width="2.8"/></svg>
<div class="abs mono" style="left:185px;top:563px;font-size:13.75px;color:#2a7a2a">RIT: +00.000</div>
<div class="abs" style="left:7px;top:592px;width:286px;height:20px;background:linear-gradient(#6a6a6a,#3a3a3a 45%,#0a0a0a 55%,#000)"></div>
<div class="abs t" style="left:7px;top:595px;width:286px;text-align:center;font-size:13.5px;color:#f0f0f0">TS-2000, Online</div>
<div class="abs" style="left:2px;top:618px;width:330px;height:2px;background:#f4f4f4"></div>
<div class="abs" style="left:2px;top:620px;width:330px;height:20px;background:linear-gradient(90deg,#f2f2f2 0%,#fafafa 30%,#e6e6e6 70%,#e2e2e2 100%)"></div><div class="abs t" style="left:4px;top:624px;font-size:13.5px;font-weight:bold;color:#1c6ac0">Mode</div><svg class="abs" style="left:316px;top:626px" width="10" height="8"><path d="M1 6 H9 L5 2 Z" fill="#111"/></svg>
<div class="abs" style="left:2px;top:640px;width:330px;height:155px;background:#000"></div>
<div class="abs" style="left:11px;top:653px;width:70px;height:28px;box-sizing:border-box;border:1px solid #5a5a5a;background:linear-gradient(#4a4a4a,#3a3a3a 45%,#000 50%,#000);overflow:hidden">
<div class="abs t" style="left:0;top:0;width:68px;height:26px;line-height:26px;text-align:center;font-size:14px;font-weight:bold;color:#ddd">&bull; &bull; &bull;</div></div>
<div class="abs" style="left:84px;top:653px;width:70px;height:28px;box-sizing:border-box;border:1px solid #5a5a5a;background:linear-gradient(#4a4a4a,#3a3a3a 45%,#000 50%,#000);overflow:hidden">
<div class="abs t" style="left:0;top:0;width:68px;height:26px;line-height:26px;text-align:center;font-size:14px;font-weight:normal;color:#ddd">Step &#9776;</div></div>
<div class="abs" style="left:161px;top:653px;width:70px;height:28px;box-sizing:border-box;border:1px solid #5a5a5a;background:linear-gradient(#4a4a4a,#3a3a3a 45%,#000 50%,#000);overflow:hidden">
<div class="abs t" style="left:0;top:0;width:68px;height:26px;line-height:26px;text-align:center;font-size:14px;font-weight:normal;color:#ddd">AM</div></div>
<div class="abs" style="left:11px;top:687px;width:70px;height:28px;box-sizing:border-box;border:1px solid #5a5a5a;background:linear-gradient(#4a4a4a,#3a3a3a 45%,#000 50%,#000);overflow:hidden">
<div class="abs t" style="left:0;top:0;width:68px;height:26px;line-height:26px;text-align:center;font-size:14px;font-weight:normal;color:#ddd">SAM</div></div>
<div class="abs" style="left:86px;top:687px;width:70px;height:28px;box-sizing:border-box;border:1px solid #5a5a5a;background:linear-gradient(#4a4a4a,#3a3a3a 45%,#000 50%,#000);overflow:hidden">
<div class="abs t" style="left:0;top:0;width:68px;height:26px;line-height:26px;text-align:center;font-size:14px;font-weight:normal;color:#ddd">CW-U</div></div>
<div class="abs" style="left:161px;top:687px;width:70px;height:28px;box-sizing:border-box;border:1px solid #5a5a5a;background:linear-gradient(#4a4a4a,#3a3a3a 45%,#000 50%,#000);overflow:hidden">
<div class="abs t" style="left:0;top:0;width:68px;height:26px;line-height:26px;text-align:center;font-size:14px;font-weight:normal;color:#ddd">BC-FM</div></div>
<div class="abs" style="left:11px;top:721px;width:70px;height:28px;box-sizing:border-box;border:1px solid #5a5a5a;background:linear-gradient(#4a4a4a,#3a3a3a 45%,#000 50%,#000);overflow:hidden">
<div class="abs t" style="left:0;top:0;width:68px;height:26px;line-height:26px;text-align:center;font-size:14px;font-weight:normal;color:#ddd">N-FM</div></div>
<div class="abs" style="left:86px;top:721px;width:70px;height:28px;box-sizing:border-box;border:1px solid #5a5a5a;background:linear-gradient(#4a4a4a,#3a3a3a 45%,#000 50%,#000);overflow:hidden">
<div class="abs t" style="left:0;top:0;width:68px;height:26px;line-height:26px;text-align:center;font-size:14px;font-weight:normal;color:#ddd">W-FM</div></div>
<div class="abs" style="left:161px;top:721px;width:70px;height:28px;box-sizing:border-box;border:1px solid #5a5a5a;background:linear-gradient(#4a4a4a,#3a3a3a 45%,#000 50%,#000);overflow:hidden">
<div class="abs t" style="left:0;top:0;width:68px;height:26px;line-height:26px;text-align:center;font-size:14px;font-weight:normal;color:#ddd">LSB</div></div>
<div class="abs" style="left:11px;top:755px;width:70px;height:28px;box-sizing:border-box;border:1px solid #5a5a5a;background:linear-gradient(#4a4a4a,#3a3a3a 45%,#000 50%,#000);overflow:hidden"><div class="abs" style="left:1px;top:14px;width:68px;height:13px;background:radial-gradient(ellipse 70% 100% at 50% 100%, rgba(190,180,20,0.95), rgba(140,130,10,0.55) 55%, rgba(0,0,0,0) 100%)"></div>
<div class="abs t" style="left:0;top:0;width:68px;height:26px;line-height:26px;text-align:center;font-size:15px;font-weight:bold;color:#ddd">USB</div></div>
<div class="abs" style="left:86px;top:755px;width:70px;height:28px;box-sizing:border-box;border:1px solid #5a5a5a;background:linear-gradient(#4a4a4a,#3a3a3a 45%,#000 50%,#000);overflow:hidden">
<div class="abs t" style="left:0;top:0;width:68px;height:26px;line-height:26px;text-align:center;font-size:14px;font-weight:normal;color:#ddd">Wide-U</div></div>
<div class="abs" style="left:2px;top:795px;width:330px;height:2px;background:#f4f4f4"></div>
<div class="abs" style="left:2px;top:797px;width:330px;height:22px;background:linear-gradient(90deg,#f2f2f2 0%,#fafafa 30%,#e6e6e6 70%,#e2e2e2 100%)"></div><div class="abs t" style="left:4px;top:801px;font-size:13.5px;font-weight:bold;color:#1c6ac0">Filter</div><svg class="abs" style="left:316px;top:803px" width="10" height="8"><path d="M1 1 H9 L5 5 Z" fill="#111"/></svg>
<div class="abs" style="left:2px;top:819px;width:330px;height:22px;background:linear-gradient(90deg,#f2f2f2 0%,#fafafa 30%,#e6e6e6 70%,#e2e2e2 100%)"></div><div class="abs t" style="left:4px;top:823px;font-size:13.5px;font-weight:bold;color:#1c6ac0">AGC: Slow</div><svg class="abs" style="left:316px;top:825px" width="10" height="8"><path d="M1 1 H9 L5 5 Z" fill="#111"/></svg>
<div class="abs" style="left:2px;top:841px;width:330px;height:22px;background:linear-gradient(90deg,#f2f2f2 0%,#fafafa 30%,#e6e6e6 70%,#e2e2e2 100%)"></div><div class="abs t" style="left:4px;top:845px;font-size:13.5px;font-weight:bold;color:#1c6ac0">CW: Off</div><svg class="abs" style="left:316px;top:847px" width="10" height="8"><path d="M1 1 H9 L5 5 Z" fill="#111"/></svg>
<div class="abs" style="left:2px;top:863px;width:330px;height:22px;background:linear-gradient(90deg,#f2f2f2 0%,#fafafa 30%,#e6e6e6 70%,#e2e2e2 100%)"></div><div class="abs t" style="left:4px;top:867px;font-size:13.5px;font-weight:bold;color:#1c6ac0">Noise Blanker: Off</div><svg class="abs" style="left:316px;top:869px" width="10" height="8"><path d="M1 1 H9 L5 5 Z" fill="#111"/></svg>
<div class="abs" style="left:2px;top:885px;width:330px;height:22px;background:linear-gradient(90deg,#f2f2f2 0%,#fafafa 30%,#e6e6e6 70%,#e2e2e2 100%)"></div><div class="abs t" style="left:4px;top:889px;font-size:13.5px;font-weight:bold;color:#1c6ac0">Noise Reduction: Off</div><svg class="abs" style="left:316px;top:891px" width="10" height="8"><path d="M1 1 H9 L5 5 Z" fill="#111"/></svg>
<div class="abs" style="left:2px;top:907px;width:330px;height:22px;background:linear-gradient(90deg,#f2f2f2 0%,#fafafa 30%,#e6e6e6 70%,#e2e2e2 100%)"></div><div class="abs t" style="left:4px;top:911px;font-size:13.5px;font-weight:bold;color:#1c6ac0">Notch: Off</div><svg class="abs" style="left:316px;top:913px" width="10" height="8"><path d="M1 1 H9 L5 5 Z" fill="#111"/></svg>
<div class="abs" style="left:2px;top:929px;width:330px;height:22px;background:linear-gradient(90deg,#f2f2f2 0%,#fafafa 30%,#e6e6e6 70%,#e2e2e2 100%)"></div><div class="abs t" style="left:4px;top:933px;font-size:13.5px;font-weight:bold;color:#1c6ac0">Squelch: Off</div><svg class="abs" style="left:316px;top:935px" width="10" height="8"><path d="M1 1 H9 L5 5 Z" fill="#111"/></svg>
<div class="abs" style="left:2px;top:950px;width:331px;height:40px;background:linear-gradient(#dcdcdc,#e2e2e2)"></div>
<div class="abs" style="left:332px;top:170px;width:4px;height:820px;background:#eef0fa"></div>
<div class="abs" style="left:336px;top:170px;width:1584px;height:1px;background:#eef0f8"></div>
<div class="abs" style="left:336px;top:171px;width:1535px;height:374px;background:#0b0b0b"></div>
<svg class="abs" style="left:336px;top:171px" width="1535" height="400" viewBox="336 171 1535 400">
<defs><linearGradient id="spg" x1="0" y1="360" x2="0" y2="548" gradientUnits="userSpaceOnUse">
<stop offset="0" stop-color="#909ee0"/><stop offset="0.29" stop-color="#6c80c8"/><stop offset="0.43" stop-color="#5468b4"/><stop offset="0.585" stop-color="#3c4c90"/><stop offset="0.72" stop-color="#2a3468"/><stop offset="0.73" stop-color="#5e1115"/><stop offset="1" stop-color="#5e1115"/></linearGradient>
<linearGradient id="spg2" x1="0" y1="360" x2="0" y2="548" gradientUnits="userSpaceOnUse">
<stop offset="0" stop-color="#909ee0"/><stop offset="0.29" stop-color="#6c80c8"/><stop offset="0.43" stop-color="#5468b4"/><stop offset="0.585" stop-color="#3c4c90"/><stop offset="0.72" stop-color="#2a3468"/><stop offset="0.73" stop-color="#161616"/><stop offset="1" stop-color="#161616"/></linearGradient>
<clipPath id="cl1"><rect x="336" y="171" width="1227" height="400"/></clipPath>
<clipPath id="cl2"><rect x="1563" y="171" width="308" height="400"/></clipPath></defs>
<path d="M336,548 L336,408.6 L337,410.1 L338,404.1 L339,405.8 L340,410.8 L341,410.8 L342,411.6 L343,411.9 L344,410.0 L345,405.5 L346,411.8 L347,413.4 L348,413.5 L349,412.8 L350,412.8 L351,413.4 L352,414.7 L353,414.4 L354,415.2 L355,417.5 L356,417.7 L357,420.3 L358,418.6 L359,418.0 L360,417.5 L361,421.8 L362,423.3 L363,419.8 L364,418.5 L365,414.8 L366,412.5 L367,413.0 L368,411.4 L369,414.0 L370,410.4 L371,409.3 L372,407.5 L373,414.6 L374,413.3 L375,413.1 L376,412.6 L377,414.0 L378,410.4 L379,412.8 L380,412.8 L381,410.8 L382,414.5 L383,408.6 L384,411.1 L385,411.9 L386,410.5 L387,410.4 L388,406.4 L389,408.1 L390,402.1 L391,407.6 L392,411.0 L393,406.7 L394,410.3 L395,409.6 L396,408.2 L397,405.9 L398,406.4 L399,400.1 L400,403.3 L401,400.4 L402,397.5 L403,395.6 L404,383.9 L405,376.7 L406,366.3 L407,377.4 L408,389.6 L409,395.6 L410,399.6 L411,404.9 L412,411.6 L413,408.5 L414,412.2 L415,413.6 L416,411.1 L417,413.1 L418,414.2 L419,410.6 L420,413.6 L421,413.5 L422,413.9 L423,415.8 L424,411.4 L425,416.5 L426,414.8 L427,416.6 L428,416.6 L429,418.4 L430,414.2 L431,417.0 L432,415.1 L433,413.8 L434,415.5 L435,416.3 L436,417.2 L437,411.6 L438,417.8 L439,414.2 L440,416.8 L441,417.3 L442,416.3 L443,410.0 L444,407.0 L445,413.1 L446,409.4 L447,412.2 L448,413.1 L449,411.3 L450,412.1 L451,413.0 L452,412.1 L453,411.1 L454,404.3 L455,404.4 L456,403.0 L457,403.0 L458,408.6 L459,410.4 L460,409.5 L461,412.2 L462,409.6 L463,411.2 L464,410.1 L465,410.6 L466,408.7 L467,410.5 L468,408.3 L469,411.0 L470,409.4 L471,408.6 L472,412.8 L473,409.9 L474,410.9 L475,413.3 L476,412.0 L477,412.4 L478,412.0 L479,412.9 L480,413.2 L481,412.2 L482,415.1 L483,415.8 L484,415.0 L485,413.3 L486,414.5 L487,413.4 L488,413.9 L489,415.6 L490,417.0 L491,411.1 L492,411.9 L493,411.1 L494,412.6 L495,406.6 L496,412.6 L497,409.7 L498,405.0 L499,408.9 L500,408.5 L501,408.5 L502,405.2 L503,404.2 L504,406.4 L505,406.2 L506,408.7 L507,409.1 L508,407.6 L509,410.9 L510,411.9 L511,414.3 L512,412.9 L513,417.1 L514,417.1 L515,413.9 L516,402.3 L517,394.4 L518,401.7 L519,407.0 L520,414.3 L521,413.9 L522,413.0 L523,410.9 L524,413.9 L525,412.3 L526,411.5 L527,409.0 L528,415.2 L529,414.0 L530,415.6 L531,414.6 L532,412.9 L533,414.4 L534,414.2 L535,414.8 L536,415.4 L537,413.1 L538,409.5 L539,415.0 L540,412.6 L541,410.7 L542,413.1 L543,414.7 L544,414.2 L545,416.1 L546,412.7 L547,412.0 L548,412.1 L549,418.4 L550,414.0 L551,414.0 L552,412.7 L553,412.7 L554,412.7 L555,414.4 L556,415.7 L557,412.9 L558,411.9 L559,413.8 L560,417.4 L561,416.9 L562,413.3 L563,408.1 L564,415.0 L565,413.1 L566,417.4 L567,416.1 L568,414.7 L569,417.6 L570,416.8 L571,414.7 L572,413.9 L573,412.5 L574,415.8 L575,415.4 L576,412.1 L577,416.5 L578,413.0 L579,411.5 L580,411.5 L581,412.6 L582,413.2 L583,411.3 L584,413.3 L585,411.3 L586,409.4 L587,410.6 L588,410.3 L589,411.4 L590,409.7 L591,408.2 L592,409.9 L593,406.3 L594,403.6 L595,407.9 L596,407.5 L597,408.6 L598,407.7 L599,407.5 L600,410.2 L601,410.0 L602,407.1 L603,408.9 L604,406.1 L605,406.5 L606,407.9 L607,407.4 L608,408.2 L609,406.6 L610,407.6 L611,408.9 L612,408.9 L613,406.4 L614,401.6 L615,408.7 L616,410.0 L617,402.5 L618,412.3 L619,412.8 L620,411.7 L621,408.1 L622,412.4 L623,415.4 L624,414.6 L625,414.4 L626,413.7 L627,415.9 L628,412.7 L629,412.3 L630,412.0 L631,411.1 L632,412.0 L633,407.8 L634,407.5 L635,408.3 L636,407.3 L637,411.6 L638,404.8 L639,404.2 L640,406.0 L641,408.4 L642,407.4 L643,405.8 L644,410.6 L645,405.3 L646,405.7 L647,394.7 L648,383.0 L649,396.8 L650,402.4 L651,408.5 L652,413.2 L653,407.1 L654,415.4 L655,419.6 L656,417.8 L657,417.2 L658,416.2 L659,415.5 L660,413.6 L661,411.3 L662,409.2 L663,413.5 L664,410.7 L665,411.4 L666,406.2 L667,408.6 L668,408.2 L669,409.2 L670,408.1 L671,408.0 L672,406.8 L673,405.9 L674,405.4 L675,406.1 L676,406.2 L677,404.3 L678,403.9 L679,408.4 L680,404.5 L681,405.5 L682,404.5 L683,404.4 L684,403.1 L685,402.8 L686,404.7 L687,401.2 L688,405.6 L689,404.8 L690,406.6 L691,407.3 L692,407.8 L693,407.9 L694,408.8 L695,415.5 L696,413.8 L697,416.0 L698,415.3 L699,417.1 L700,418.9 L701,416.7 L702,418.0 L703,415.9 L704,415.2 L705,414.1 L706,413.1 L707,415.1 L708,411.0 L709,414.8 L710,409.7 L711,403.8 L712,412.4 L713,406.5 L714,406.8 L715,411.6 L716,411.2 L717,413.1 L718,412.8 L719,414.4 L720,412.3 L721,408.1 L722,406.7 L723,408.9 L724,405.0 L725,400.3 L726,404.3 L727,411.0 L728,407.7 L729,409.1 L730,408.7 L731,408.1 L732,408.8 L733,409.5 L734,411.5 L735,411.9 L736,411.8 L737,413.3 L738,414.6 L739,416.5 L740,414.7 L741,414.4 L742,413.0 L743,413.2 L744,413.1 L745,411.4 L746,409.2 L747,406.6 L748,410.3 L749,411.7 L750,404.6 L751,408.2 L752,405.7 L753,402.4 L754,406.6 L755,407.9 L756,410.2 L757,412.2 L758,412.4 L759,413.7 L760,415.3 L761,417.2 L762,416.6 L763,418.2 L764,417.4 L765,420.1 L766,421.4 L767,420.0 L768,422.3 L769,420.1 L770,417.2 L771,421.1 L772,419.8 L773,415.3 L774,415.4 L775,418.9 L776,411.9 L777,416.7 L778,416.6 L779,415.1 L780,414.1 L781,414.5 L782,414.7 L783,413.2 L784,414.0 L785,412.3 L786,408.1 L787,411.2 L788,412.8 L789,409.2 L790,410.3 L791,408.1 L792,408.9 L793,406.7 L794,405.2 L795,405.8 L796,400.4 L797,401.0 L798,406.6 L799,403.5 L800,399.9 L801,402.2 L802,402.4 L803,404.0 L804,405.4 L805,406.8 L806,407.9 L807,411.3 L808,410.3 L809,412.1 L810,410.7 L811,412.6 L812,415.5 L813,414.8 L814,411.4 L815,414.2 L816,417.8 L817,416.7 L818,416.6 L819,414.0 L820,412.8 L821,417.0 L822,417.6 L823,413.1 L824,416.7 L825,415.7 L826,416.9 L827,415.7 L828,416.8 L829,417.7 L830,417.4 L831,416.6 L832,414.9 L833,413.2 L834,417.7 L835,417.5 L836,417.6 L837,414.7 L838,420.1 L839,419.1 L840,416.4 L841,409.3 L842,403.3 L843,409.0 L844,408.7 L845,410.1 L846,409.5 L847,410.8 L848,413.6 L849,418.2 L850,418.3 L851,420.3 L852,417.3 L853,420.8 L854,419.2 L855,418.4 L856,416.1 L857,415.9 L858,418.5 L859,418.3 L860,416.9 L861,415.8 L862,408.4 L863,414.2 L864,411.6 L865,414.6 L866,412.3 L867,406.9 L868,405.8 L869,408.1 L870,412.2 L871,410.8 L872,408.5 L873,410.4 L874,404.2 L875,411.3 L876,411.5 L877,413.0 L878,412.1 L879,416.9 L880,415.4 L881,420.1 L882,420.0 L883,418.2 L884,419.6 L885,420.7 L886,421.2 L887,423.8 L888,421.8 L889,421.5 L890,421.7 L891,418.1 L892,423.0 L893,420.6 L894,419.5 L895,419.0 L896,417.4 L897,420.6 L898,417.3 L899,420.3 L900,419.4 L901,420.7 L902,418.3 L903,418.0 L904,414.7 L905,417.7 L906,414.9 L907,414.3 L908,414.5 L909,414.6 L910,415.5 L911,415.0 L912,416.4 L913,415.7 L914,419.4 L915,417.3 L916,418.0 L917,415.3 L918,419.9 L919,419.6 L920,418.0 L921,418.8 L922,418.7 L923,417.8 L924,416.5 L925,416.3 L926,416.3 L927,418.8 L928,415.5 L929,415.1 L930,411.8 L931,412.2 L932,412.1 L933,410.7 L934,409.9 L935,407.5 L936,407.9 L937,405.1 L938,405.5 L939,408.0 L940,405.8 L941,406.3 L942,407.9 L943,405.8 L944,405.9 L945,411.2 L946,410.8 L947,410.5 L948,409.3 L949,411.5 L950,410.2 L951,413.2 L952,412.4 L953,412.7 L954,415.8 L955,413.1 L956,413.1 L957,417.3 L958,413.6 L959,418.2 L960,417.2 L961,420.6 L962,419.1 L963,419.6 L964,419.6 L965,420.2 L966,419.1 L967,418.7 L968,416.2 L969,422.9 L970,419.0 L971,419.6 L972,415.2 L973,419.1 L974,416.1 L975,414.2 L976,416.5 L977,416.0 L978,414.9 L979,411.8 L980,410.9 L981,411.6 L982,410.6 L983,407.0 L984,407.5 L985,406.4 L986,408.4 L987,408.3 L988,406.9 L989,407.2 L990,407.2 L991,407.7 L992,410.1 L993,411.6 L994,401.4 L995,410.5 L996,411.3 L997,407.2 L998,409.5 L999,410.7 L1000,410.1 L1001,410.1 L1002,413.8 L1003,412.8 L1004,413.6 L1005,413.1 L1006,415.5 L1007,411.5 L1008,412.9 L1009,416.7 L1010,416.3 L1011,418.9 L1012,417.2 L1013,419.9 L1014,419.3 L1015,419.8 L1016,416.2 L1017,419.0 L1018,417.6 L1019,420.6 L1020,417.2 L1021,418.6 L1022,418.8 L1023,416.6 L1024,416.8 L1025,418.3 L1026,419.7 L1027,417.0 L1028,416.1 L1029,418.2 L1030,415.5 L1031,414.8 L1032,418.6 L1033,416.6 L1034,417.3 L1035,415.4 L1036,417.1 L1037,414.0 L1038,415.2 L1039,415.1 L1040,416.0 L1041,417.2 L1042,416.4 L1043,413.6 L1044,417.5 L1045,413.9 L1046,415.3 L1047,414.5 L1048,418.2 L1049,415.6 L1050,414.7 L1051,419.1 L1052,416.1 L1053,418.4 L1054,421.7 L1055,419.1 L1056,417.8 L1057,417.0 L1058,420.6 L1059,419.5 L1060,421.4 L1061,419.3 L1062,416.4 L1063,422.2 L1064,418.2 L1065,417.2 L1066,415.5 L1067,419.5 L1068,413.7 L1069,415.6 L1070,413.9 L1071,416.3 L1072,415.8 L1073,413.2 L1074,409.9 L1075,413.7 L1076,412.8 L1077,414.3 L1078,405.9 L1079,410.2 L1080,411.4 L1081,408.6 L1082,413.1 L1083,409.7 L1084,412.2 L1085,408.8 L1086,408.7 L1087,406.9 L1088,407.5 L1089,406.3 L1090,407.5 L1091,407.2 L1092,405.4 L1093,404.4 L1094,404.0 L1095,404.1 L1096,403.4 L1097,405.1 L1098,402.5 L1099,401.7 L1100,395.8 L1101,391.8 L1102,391.8 L1103,387.9 L1104,384.4 L1105,378.9 L1106,367.4 L1107,367.7 L1108,363.7 L1109,376.4 L1110,392.5 L1111,392.8 L1112,395.2 L1113,385.5 L1114,376.6 L1115,375.5 L1116,379.5 L1117,386.6 L1118,397.1 L1119,404.4 L1120,410.3 L1121,414.4 L1122,421.6 L1123,418.9 L1124,417.7 L1125,418.1 L1126,418.9 L1127,416.7 L1128,416.4 L1129,418.2 L1130,417.4 L1131,415.4 L1132,420.2 L1133,417.7 L1134,415.0 L1135,416.2 L1136,418.6 L1137,421.2 L1138,419.1 L1139,417.8 L1140,419.5 L1141,419.3 L1142,416.5 L1143,411.9 L1144,419.7 L1145,415.3 L1146,419.7 L1147,414.9 L1148,416.1 L1149,416.3 L1150,415.8 L1151,416.8 L1152,411.7 L1153,411.4 L1154,412.1 L1155,414.2 L1156,413.3 L1157,411.6 L1158,406.4 L1159,407.1 L1160,405.9 L1161,408.6 L1162,409.7 L1163,411.3 L1164,407.8 L1165,404.8 L1166,409.5 L1167,410.9 L1168,411.9 L1169,412.8 L1170,411.7 L1171,411.7 L1172,409.9 L1173,413.2 L1174,410.5 L1175,416.7 L1176,414.4 L1177,416.7 L1178,418.4 L1179,419.3 L1180,416.3 L1181,420.6 L1182,417.9 L1183,417.9 L1184,418.4 L1185,420.2 L1186,417.0 L1187,416.0 L1188,421.8 L1189,414.7 L1190,418.4 L1191,425.0 L1192,426.7 L1193,422.1 L1194,419.0 L1195,415.7 L1196,415.2 L1197,409.4 L1198,407.5 L1199,404.0 L1200,403.3 L1201,401.6 L1202,395.2 L1203,398.7 L1204,398.7 L1205,394.3 L1206,394.0 L1207,387.5 L1208,396.2 L1209,398.4 L1210,398.0 L1211,403.0 L1212,405.1 L1213,403.4 L1214,411.2 L1215,410.6 L1216,409.1 L1217,409.3 L1218,407.2 L1219,407.5 L1220,406.2 L1221,398.5 L1222,402.9 L1223,401.4 L1224,401.2 L1225,401.3 L1226,402.8 L1227,398.0 L1228,397.4 L1229,398.3 L1230,400.5 L1231,401.8 L1232,403.6 L1233,405.2 L1234,407.4 L1235,409.9 L1236,409.2 L1237,409.4 L1238,409.3 L1239,408.3 L1240,407.7 L1241,407.8 L1242,406.8 L1243,406.9 L1244,408.5 L1245,408.7 L1246,407.8 L1247,407.2 L1248,409.2 L1249,399.0 L1250,403.9 L1251,407.4 L1252,407.4 L1253,405.1 L1254,406.1 L1255,406.0 L1256,405.0 L1257,405.5 L1258,406.4 L1259,404.2 L1260,405.0 L1261,404.3 L1262,402.8 L1263,404.6 L1264,408.6 L1265,404.8 L1266,405.1 L1267,402.3 L1268,399.1 L1269,402.7 L1270,401.1 L1271,403.1 L1272,403.2 L1273,402.7 L1274,401.7 L1275,400.8 L1276,400.1 L1277,398.1 L1278,392.0 L1279,391.0 L1280,391.5 L1281,390.9 L1282,391.4 L1283,394.2 L1284,395.4 L1285,398.5 L1286,401.9 L1287,400.2 L1288,402.3 L1289,403.1 L1290,406.1 L1291,404.6 L1292,403.9 L1293,406.8 L1294,405.1 L1295,405.5 L1296,406.2 L1297,402.0 L1298,403.7 L1299,403.7 L1300,405.4 L1301,405.0 L1302,405.4 L1303,405.5 L1304,407.8 L1305,406.2 L1306,408.3 L1307,408.3 L1308,406.8 L1309,408.9 L1310,407.9 L1311,408.0 L1312,407.2 L1313,408.8 L1314,408.9 L1315,406.0 L1316,408.8 L1317,410.1 L1318,406.1 L1319,406.0 L1320,407.2 L1321,408.5 L1322,407.8 L1323,406.1 L1324,404.0 L1325,404.8 L1326,404.4 L1327,407.5 L1328,405.8 L1329,403.0 L1330,401.6 L1331,404.8 L1332,406.3 L1333,402.9 L1334,402.0 L1335,405.2 L1336,404.0 L1337,401.3 L1338,400.1 L1339,395.2 L1340,394.7 L1341,382.5 L1342,380.4 L1343,387.0 L1344,391.6 L1345,398.6 L1346,399.2 L1347,405.0 L1348,406.6 L1349,409.3 L1350,407.3 L1351,411.8 L1352,409.0 L1353,411.1 L1354,409.6 L1355,411.3 L1356,411.6 L1357,415.0 L1358,411.9 L1359,410.1 L1360,408.1 L1361,408.3 L1362,402.7 L1363,406.1 L1364,406.1 L1365,404.5 L1366,402.8 L1367,407.5 L1368,404.8 L1369,403.7 L1370,399.1 L1371,400.6 L1372,400.2 L1373,403.2 L1374,399.6 L1375,402.1 L1376,405.7 L1377,402.5 L1378,404.9 L1379,401.6 L1380,404.5 L1381,402.3 L1382,401.6 L1383,403.5 L1384,402.3 L1385,402.3 L1386,403.7 L1387,404.0 L1388,400.6 L1389,407.4 L1390,403.4 L1391,404.6 L1392,405.0 L1393,406.1 L1394,408.9 L1395,407.2 L1396,409.1 L1397,410.2 L1398,409.2 L1399,410.4 L1400,404.1 L1401,407.5 L1402,406.7 L1403,404.5 L1404,407.8 L1405,406.0 L1406,395.9 L1407,402.5 L1408,402.7 L1409,399.6 L1410,402.6 L1411,399.0 L1412,399.4 L1413,396.3 L1414,401.0 L1415,399.7 L1416,399.3 L1417,404.0 L1418,404.7 L1419,403.2 L1420,406.3 L1421,408.0 L1422,407.2 L1423,410.8 L1424,408.6 L1425,412.0 L1426,412.7 L1427,410.7 L1428,407.1 L1429,413.2 L1430,413.4 L1431,414.1 L1432,412.4 L1433,411.3 L1434,412.3 L1435,411.1 L1436,409.1 L1437,414.8 L1438,410.9 L1439,412.0 L1440,411.7 L1441,410.7 L1442,411.0 L1443,412.6 L1444,412.2 L1445,410.9 L1446,411.0 L1447,414.0 L1448,409.9 L1449,410.5 L1450,412.4 L1451,413.7 L1452,412.4 L1453,412.0 L1454,410.4 L1455,411.1 L1456,412.2 L1457,412.1 L1458,412.5 L1459,408.6 L1460,406.1 L1461,411.0 L1462,409.2 L1463,411.5 L1464,410.3 L1465,413.5 L1466,410.8 L1467,411.2 L1468,407.8 L1469,410.2 L1470,407.0 L1471,412.3 L1472,412.2 L1473,413.7 L1474,410.9 L1475,412.8 L1476,414.2 L1477,411.2 L1478,414.3 L1479,409.2 L1480,413.6 L1481,413.3 L1482,411.6 L1483,411.0 L1484,411.7 L1485,408.8 L1486,413.4 L1487,411.4 L1488,411.8 L1489,408.7 L1490,413.8 L1491,412.1 L1492,411.8 L1493,405.6 L1494,410.9 L1495,409.1 L1496,408.7 L1497,404.8 L1498,408.6 L1499,409.8 L1500,408.4 L1501,407.0 L1502,407.8 L1503,409.6 L1504,409.0 L1505,413.4 L1506,409.0 L1507,413.3 L1508,412.2 L1509,413.3 L1510,411.8 L1511,408.7 L1512,411.3 L1513,413.1 L1514,413.3 L1515,415.1 L1516,412.2 L1517,414.9 L1518,413.7 L1519,413.9 L1520,416.2 L1521,414.3 L1522,413.4 L1523,412.2 L1524,409.8 L1525,408.9 L1526,405.4 L1527,404.3 L1528,400.9 L1529,405.9 L1530,403.7 L1531,405.8 L1532,406.5 L1533,406.1 L1534,407.3 L1535,406.7 L1536,408.3 L1537,411.2 L1538,407.0 L1539,410.5 L1540,413.4 L1541,410.9 L1542,412.1 L1543,412.2 L1544,409.6 L1545,408.0 L1546,402.4 L1547,402.2 L1548,398.2 L1549,403.1 L1550,399.2 L1551,395.3 L1552,393.3 L1553,395.9 L1554,395.7 L1555,395.7 L1556,398.9 L1557,402.2 L1558,401.8 L1559,403.3 L1560,407.2 L1561,404.3 L1562,408.2 L1563,405.1 L1564,404.4 L1565,403.0 L1566,406.4 L1567,403.8 L1568,399.4 L1569,406.4 L1570,402.7 L1571,403.2 L1572,401.2 L1573,401.5 L1574,401.4 L1575,400.7 L1576,397.8 L1577,396.5 L1578,396.6 L1579,378.6 L1580,358.9 L1581,374.6 L1582,387.9 L1583,391.8 L1584,395.5 L1585,396.8 L1586,397.4 L1587,399.6 L1588,406.4 L1589,410.0 L1590,416.9 L1591,418.3 L1592,413.2 L1593,416.1 L1594,415.9 L1595,413.6 L1596,412.6 L1597,411.1 L1598,413.9 L1599,410.7 L1600,413.1 L1601,413.8 L1602,409.9 L1603,408.2 L1604,410.2 L1605,401.9 L1606,411.5 L1607,410.8 L1608,411.4 L1609,407.9 L1610,405.8 L1611,409.3 L1612,408.8 L1613,408.8 L1614,408.1 L1615,409.6 L1616,412.7 L1617,413.9 L1618,410.0 L1619,409.0 L1620,410.1 L1621,411.2 L1622,415.7 L1623,413.1 L1624,417.7 L1625,418.3 L1626,414.9 L1627,414.7 L1628,413.7 L1629,413.1 L1630,412.1 L1631,414.2 L1632,415.6 L1633,409.4 L1634,413.4 L1635,412.5 L1636,412.1 L1637,413.2 L1638,409.8 L1639,410.5 L1640,413.0 L1641,411.7 L1642,411.9 L1643,409.7 L1644,411.6 L1645,415.3 L1646,412.2 L1647,411.9 L1648,411.1 L1649,413.6 L1650,413.5 L1651,414.6 L1652,416.4 L1653,414.8 L1654,415.3 L1655,411.5 L1656,414.1 L1657,416.6 L1658,416.7 L1659,417.2 L1660,416.7 L1661,414.6 L1662,418.0 L1663,414.7 L1664,411.2 L1665,412.6 L1666,411.6 L1667,415.4 L1668,414.7 L1669,409.8 L1670,412.5 L1671,414.8 L1672,412.6 L1673,413.6 L1674,411.9 L1675,413.1 L1676,412.8 L1677,411.2 L1678,410.1 L1679,409.7 L1680,406.2 L1681,405.3 L1682,407.7 L1683,405.0 L1684,406.6 L1685,402.4 L1686,405.1 L1687,407.3 L1688,405.1 L1689,405.2 L1690,405.3 L1691,404.5 L1692,403.9 L1693,404.5 L1694,403.7 L1695,402.6 L1696,400.9 L1697,401.8 L1698,400.5 L1699,400.1 L1700,399.7 L1701,397.0 L1702,399.6 L1703,392.9 L1704,391.7 L1705,389.3 L1706,390.5 L1707,387.5 L1708,387.9 L1709,385.4 L1710,384.8 L1711,379.2 L1712,375.4 L1713,370.4 L1714,367.7 L1715,356.3 L1716,362.2 L1717,371.5 L1718,370.4 L1719,370.9 L1720,365.6 L1721,370.1 L1722,375.0 L1723,380.0 L1724,392.0 L1725,402.6 L1726,406.5 L1727,413.2 L1728,413.9 L1729,416.7 L1730,415.9 L1731,424.1 L1732,422.8 L1733,422.5 L1734,418.8 L1735,414.6 L1736,413.1 L1737,415.7 L1738,412.8 L1739,412.1 L1740,412.8 L1741,415.9 L1742,414.1 L1743,413.3 L1744,414.7 L1745,415.8 L1746,419.7 L1747,417.1 L1748,418.4 L1749,418.9 L1750,417.1 L1751,421.5 L1752,418.3 L1753,417.3 L1754,416.6 L1755,415.8 L1756,409.0 L1757,415.4 L1758,415.1 L1759,413.4 L1760,412.5 L1761,413.2 L1762,412.1 L1763,409.8 L1764,407.5 L1765,410.6 L1766,413.2 L1767,409.1 L1768,410.1 L1769,406.4 L1770,407.4 L1771,405.3 L1772,407.6 L1773,406.9 L1774,411.5 L1775,407.7 L1776,407.2 L1777,409.2 L1778,406.2 L1779,408.3 L1780,409.2 L1781,407.6 L1782,406.9 L1783,407.7 L1784,411.5 L1785,411.8 L1786,412.6 L1787,411.6 L1788,410.1 L1789,406.5 L1790,413.7 L1791,411.5 L1792,413.8 L1793,416.4 L1794,414.3 L1795,413.7 L1796,415.2 L1797,415.1 L1798,417.3 L1799,419.6 L1800,415.5 L1801,418.2 L1802,417.7 L1803,418.1 L1804,415.1 L1805,416.5 L1806,417.9 L1807,418.9 L1808,417.6 L1809,409.2 L1810,417.0 L1811,412.7 L1812,415.0 L1813,415.5 L1814,412.8 L1815,414.0 L1816,416.5 L1817,413.7 L1818,414.3 L1819,410.7 L1820,411.7 L1821,414.5 L1822,409.6 L1823,414.6 L1824,414.3 L1825,413.9 L1826,413.1 L1827,414.8 L1828,411.7 L1829,411.5 L1830,414.6 L1831,408.2 L1832,412.5 L1833,416.2 L1834,412.7 L1835,412.2 L1836,411.4 L1837,413.0 L1838,414.4 L1839,413.4 L1840,417.4 L1841,416.2 L1842,411.6 L1843,410.7 L1844,413.3 L1845,415.4 L1846,411.7 L1847,415.6 L1848,412.0 L1849,414.8 L1850,414.6 L1851,415.3 L1852,415.3 L1853,412.3 L1854,417.6 L1855,416.4 L1856,410.3 L1857,412.2 L1858,413.1 L1859,413.0 L1860,407.3 L1861,408.6 L1862,411.7 L1863,405.3 L1864,409.2 L1865,409.9 L1866,409.3 L1867,406.9 L1868,410.3 L1869,409.9 L1870,410.8 L1870,548 Z" fill="url(#spg)" clip-path="url(#cl1)"/>
<path d="M336,548 L336,408.6 L337,410.1 L338,404.1 L339,405.8 L340,410.8 L341,410.8 L342,411.6 L343,411.9 L344,410.0 L345,405.5 L346,411.8 L347,413.4 L348,413.5 L349,412.8 L350,412.8 L351,413.4 L352,414.7 L353,414.4 L354,415.2 L355,417.5 L356,417.7 L357,420.3 L358,418.6 L359,418.0 L360,417.5 L361,421.8 L362,423.3 L363,419.8 L364,418.5 L365,414.8 L366,412.5 L367,413.0 L368,411.4 L369,414.0 L370,410.4 L371,409.3 L372,407.5 L373,414.6 L374,413.3 L375,413.1 L376,412.6 L377,414.0 L378,410.4 L379,412.8 L380,412.8 L381,410.8 L382,414.5 L383,408.6 L384,411.1 L385,411.9 L386,410.5 L387,410.4 L388,406.4 L389,408.1 L390,402.1 L391,407.6 L392,411.0 L393,406.7 L394,410.3 L395,409.6 L396,408.2 L397,405.9 L398,406.4 L399,400.1 L400,403.3 L401,400.4 L402,397.5 L403,395.6 L404,383.9 L405,376.7 L406,366.3 L407,377.4 L408,389.6 L409,395.6 L410,399.6 L411,404.9 L412,411.6 L413,408.5 L414,412.2 L415,413.6 L416,411.1 L417,413.1 L418,414.2 L419,410.6 L420,413.6 L421,413.5 L422,413.9 L423,415.8 L424,411.4 L425,416.5 L426,414.8 L427,416.6 L428,416.6 L429,418.4 L430,414.2 L431,417.0 L432,415.1 L433,413.8 L434,415.5 L435,416.3 L436,417.2 L437,411.6 L438,417.8 L439,414.2 L440,416.8 L441,417.3 L442,416.3 L443,410.0 L444,407.0 L445,413.1 L446,409.4 L447,412.2 L448,413.1 L449,411.3 L450,412.1 L451,413.0 L452,412.1 L453,411.1 L454,404.3 L455,404.4 L456,403.0 L457,403.0 L458,408.6 L459,410.4 L460,409.5 L461,412.2 L462,409.6 L463,411.2 L464,410.1 L465,410.6 L466,408.7 L467,410.5 L468,408.3 L469,411.0 L470,409.4 L471,408.6 L472,412.8 L473,409.9 L474,410.9 L475,413.3 L476,412.0 L477,412.4 L478,412.0 L479,412.9 L480,413.2 L481,412.2 L482,415.1 L483,415.8 L484,415.0 L485,413.3 L486,414.5 L487,413.4 L488,413.9 L489,415.6 L490,417.0 L491,411.1 L492,411.9 L493,411.1 L494,412.6 L495,406.6 L496,412.6 L497,409.7 L498,405.0 L499,408.9 L500,408.5 L501,408.5 L502,405.2 L503,404.2 L504,406.4 L505,406.2 L506,408.7 L507,409.1 L508,407.6 L509,410.9 L510,411.9 L511,414.3 L512,412.9 L513,417.1 L514,417.1 L515,413.9 L516,402.3 L517,394.4 L518,401.7 L519,407.0 L520,414.3 L521,413.9 L522,413.0 L523,410.9 L524,413.9 L525,412.3 L526,411.5 L527,409.0 L528,415.2 L529,414.0 L530,415.6 L531,414.6 L532,412.9 L533,414.4 L534,414.2 L535,414.8 L536,415.4 L537,413.1 L538,409.5 L539,415.0 L540,412.6 L541,410.7 L542,413.1 L543,414.7 L544,414.2 L545,416.1 L546,412.7 L547,412.0 L548,412.1 L549,418.4 L550,414.0 L551,414.0 L552,412.7 L553,412.7 L554,412.7 L555,414.4 L556,415.7 L557,412.9 L558,411.9 L559,413.8 L560,417.4 L561,416.9 L562,413.3 L563,408.1 L564,415.0 L565,413.1 L566,417.4 L567,416.1 L568,414.7 L569,417.6 L570,416.8 L571,414.7 L572,413.9 L573,412.5 L574,415.8 L575,415.4 L576,412.1 L577,416.5 L578,413.0 L579,411.5 L580,411.5 L581,412.6 L582,413.2 L583,411.3 L584,413.3 L585,411.3 L586,409.4 L587,410.6 L588,410.3 L589,411.4 L590,409.7 L591,408.2 L592,409.9 L593,406.3 L594,403.6 L595,407.9 L596,407.5 L597,408.6 L598,407.7 L599,407.5 L600,410.2 L601,410.0 L602,407.1 L603,408.9 L604,406.1 L605,406.5 L606,407.9 L607,407.4 L608,408.2 L609,406.6 L610,407.6 L611,408.9 L612,408.9 L613,406.4 L614,401.6 L615,408.7 L616,410.0 L617,402.5 L618,412.3 L619,412.8 L620,411.7 L621,408.1 L622,412.4 L623,415.4 L624,414.6 L625,414.4 L626,413.7 L627,415.9 L628,412.7 L629,412.3 L630,412.0 L631,411.1 L632,412.0 L633,407.8 L634,407.5 L635,408.3 L636,407.3 L637,411.6 L638,404.8 L639,404.2 L640,406.0 L641,408.4 L642,407.4 L643,405.8 L644,410.6 L645,405.3 L646,405.7 L647,394.7 L648,383.0 L649,396.8 L650,402.4 L651,408.5 L652,413.2 L653,407.1 L654,415.4 L655,419.6 L656,417.8 L657,417.2 L658,416.2 L659,415.5 L660,413.6 L661,411.3 L662,409.2 L663,413.5 L664,410.7 L665,411.4 L666,406.2 L667,408.6 L668,408.2 L669,409.2 L670,408.1 L671,408.0 L672,406.8 L673,405.9 L674,405.4 L675,406.1 L676,406.2 L677,404.3 L678,403.9 L679,408.4 L680,404.5 L681,405.5 L682,404.5 L683,404.4 L684,403.1 L685,402.8 L686,404.7 L687,401.2 L688,405.6 L689,404.8 L690,406.6 L691,407.3 L692,407.8 L693,407.9 L694,408.8 L695,415.5 L696,413.8 L697,416.0 L698,415.3 L699,417.1 L700,418.9 L701,416.7 L702,418.0 L703,415.9 L704,415.2 L705,414.1 L706,413.1 L707,415.1 L708,411.0 L709,414.8 L710,409.7 L711,403.8 L712,412.4 L713,406.5 L714,406.8 L715,411.6 L716,411.2 L717,413.1 L718,412.8 L719,414.4 L720,412.3 L721,408.1 L722,406.7 L723,408.9 L724,405.0 L725,400.3 L726,404.3 L727,411.0 L728,407.7 L729,409.1 L730,408.7 L731,408.1 L732,408.8 L733,409.5 L734,411.5 L735,411.9 L736,411.8 L737,413.3 L738,414.6 L739,416.5 L740,414.7 L741,414.4 L742,413.0 L743,413.2 L744,413.1 L745,411.4 L746,409.2 L747,406.6 L748,410.3 L749,411.7 L750,404.6 L751,408.2 L752,405.7 L753,402.4 L754,406.6 L755,407.9 L756,410.2 L757,412.2 L758,412.4 L759,413.7 L760,415.3 L761,417.2 L762,416.6 L763,418.2 L764,417.4 L765,420.1 L766,421.4 L767,420.0 L768,422.3 L769,420.1 L770,417.2 L771,421.1 L772,419.8 L773,415.3 L774,415.4 L775,418.9 L776,411.9 L777,416.7 L778,416.6 L779,415.1 L780,414.1 L781,414.5 L782,414.7 L783,413.2 L784,414.0 L785,412.3 L786,408.1 L787,411.2 L788,412.8 L789,409.2 L790,410.3 L791,408.1 L792,408.9 L793,406.7 L794,405.2 L795,405.8 L796,400.4 L797,401.0 L798,406.6 L799,403.5 L800,399.9 L801,402.2 L802,402.4 L803,404.0 L804,405.4 L805,406.8 L806,407.9 L807,411.3 L808,410.3 L809,412.1 L810,410.7 L811,412.6 L812,415.5 L813,414.8 L814,411.4 L815,414.2 L816,417.8 L817,416.7 L818,416.6 L819,414.0 L820,412.8 L821,417.0 L822,417.6 L823,413.1 L824,416.7 L825,415.7 L826,416.9 L827,415.7 L828,416.8 L829,417.7 L830,417.4 L831,416.6 L832,414.9 L833,413.2 L834,417.7 L835,417.5 L836,417.6 L837,414.7 L838,420.1 L839,419.1 L840,416.4 L841,409.3 L842,403.3 L843,409.0 L844,408.7 L845,410.1 L846,409.5 L847,410.8 L848,413.6 L849,418.2 L850,418.3 L851,420.3 L852,417.3 L853,420.8 L854,419.2 L855,418.4 L856,416.1 L857,415.9 L858,418.5 L859,418.3 L860,416.9 L861,415.8 L862,408.4 L863,414.2 L864,411.6 L865,414.6 L866,412.3 L867,406.9 L868,405.8 L869,408.1 L870,412.2 L871,410.8 L872,408.5 L873,410.4 L874,404.2 L875,411.3 L876,411.5 L877,413.0 L878,412.1 L879,416.9 L880,415.4 L881,420.1 L882,420.0 L883,418.2 L884,419.6 L885,420.7 L886,421.2 L887,423.8 L888,421.8 L889,421.5 L890,421.7 L891,418.1 L892,423.0 L893,420.6 L894,419.5 L895,419.0 L896,417.4 L897,420.6 L898,417.3 L899,420.3 L900,419.4 L901,420.7 L902,418.3 L903,418.0 L904,414.7 L905,417.7 L906,414.9 L907,414.3 L908,414.5 L909,414.6 L910,415.5 L911,415.0 L912,416.4 L913,415.7 L914,419.4 L915,417.3 L916,418.0 L917,415.3 L918,419.9 L919,419.6 L920,418.0 L921,418.8 L922,418.7 L923,417.8 L924,416.5 L925,416.3 L926,416.3 L927,418.8 L928,415.5 L929,415.1 L930,411.8 L931,412.2 L932,412.1 L933,410.7 L934,409.9 L935,407.5 L936,407.9 L937,405.1 L938,405.5 L939,408.0 L940,405.8 L941,406.3 L942,407.9 L943,405.8 L944,405.9 L945,411.2 L946,410.8 L947,410.5 L948,409.3 L949,411.5 L950,410.2 L951,413.2 L952,412.4 L953,412.7 L954,415.8 L955,413.1 L956,413.1 L957,417.3 L958,413.6 L959,418.2 L960,417.2 L961,420.6 L962,419.1 L963,419.6 L964,419.6 L965,420.2 L966,419.1 L967,418.7 L968,416.2 L969,422.9 L970,419.0 L971,419.6 L972,415.2 L973,419.1 L974,416.1 L975,414.2 L976,416.5 L977,416.0 L978,414.9 L979,411.8 L980,410.9 L981,411.6 L982,410.6 L983,407.0 L984,407.5 L985,406.4 L986,408.4 L987,408.3 L988,406.9 L989,407.2 L990,407.2 L991,407.7 L992,410.1 L993,411.6 L994,401.4 L995,410.5 L996,411.3 L997,407.2 L998,409.5 L999,410.7 L1000,410.1 L1001,410.1 L1002,413.8 L1003,412.8 L1004,413.6 L1005,413.1 L1006,415.5 L1007,411.5 L1008,412.9 L1009,416.7 L1010,416.3 L1011,418.9 L1012,417.2 L1013,419.9 L1014,419.3 L1015,419.8 L1016,416.2 L1017,419.0 L1018,417.6 L1019,420.6 L1020,417.2 L1021,418.6 L1022,418.8 L1023,416.6 L1024,416.8 L1025,418.3 L1026,419.7 L1027,417.0 L1028,416.1 L1029,418.2 L1030,415.5 L1031,414.8 L1032,418.6 L1033,416.6 L1034,417.3 L1035,415.4 L1036,417.1 L1037,414.0 L1038,415.2 L1039,415.1 L1040,416.0 L1041,417.2 L1042,416.4 L1043,413.6 L1044,417.5 L1045,413.9 L1046,415.3 L1047,414.5 L1048,418.2 L1049,415.6 L1050,414.7 L1051,419.1 L1052,416.1 L1053,418.4 L1054,421.7 L1055,419.1 L1056,417.8 L1057,417.0 L1058,420.6 L1059,419.5 L1060,421.4 L1061,419.3 L1062,416.4 L1063,422.2 L1064,418.2 L1065,417.2 L1066,415.5 L1067,419.5 L1068,413.7 L1069,415.6 L1070,413.9 L1071,416.3 L1072,415.8 L1073,413.2 L1074,409.9 L1075,413.7 L1076,412.8 L1077,414.3 L1078,405.9 L1079,410.2 L1080,411.4 L1081,408.6 L1082,413.1 L1083,409.7 L1084,412.2 L1085,408.8 L1086,408.7 L1087,406.9 L1088,407.5 L1089,406.3 L1090,407.5 L1091,407.2 L1092,405.4 L1093,404.4 L1094,404.0 L1095,404.1 L1096,403.4 L1097,405.1 L1098,402.5 L1099,401.7 L1100,395.8 L1101,391.8 L1102,391.8 L1103,387.9 L1104,384.4 L1105,378.9 L1106,367.4 L1107,367.7 L1108,363.7 L1109,376.4 L1110,392.5 L1111,392.8 L1112,395.2 L1113,385.5 L1114,376.6 L1115,375.5 L1116,379.5 L1117,386.6 L1118,397.1 L1119,404.4 L1120,410.3 L1121,414.4 L1122,421.6 L1123,418.9 L1124,417.7 L1125,418.1 L1126,418.9 L1127,416.7 L1128,416.4 L1129,418.2 L1130,417.4 L1131,415.4 L1132,420.2 L1133,417.7 L1134,415.0 L1135,416.2 L1136,418.6 L1137,421.2 L1138,419.1 L1139,417.8 L1140,419.5 L1141,419.3 L1142,416.5 L1143,411.9 L1144,419.7 L1145,415.3 L1146,419.7 L1147,414.9 L1148,416.1 L1149,416.3 L1150,415.8 L1151,416.8 L1152,411.7 L1153,411.4 L1154,412.1 L1155,414.2 L1156,413.3 L1157,411.6 L1158,406.4 L1159,407.1 L1160,405.9 L1161,408.6 L1162,409.7 L1163,411.3 L1164,407.8 L1165,404.8 L1166,409.5 L1167,410.9 L1168,411.9 L1169,412.8 L1170,411.7 L1171,411.7 L1172,409.9 L1173,413.2 L1174,410.5 L1175,416.7 L1176,414.4 L1177,416.7 L1178,418.4 L1179,419.3 L1180,416.3 L1181,420.6 L1182,417.9 L1183,417.9 L1184,418.4 L1185,420.2 L1186,417.0 L1187,416.0 L1188,421.8 L1189,414.7 L1190,418.4 L1191,425.0 L1192,426.7 L1193,422.1 L1194,419.0 L1195,415.7 L1196,415.2 L1197,409.4 L1198,407.5 L1199,404.0 L1200,403.3 L1201,401.6 L1202,395.2 L1203,398.7 L1204,398.7 L1205,394.3 L1206,394.0 L1207,387.5 L1208,396.2 L1209,398.4 L1210,398.0 L1211,403.0 L1212,405.1 L1213,403.4 L1214,411.2 L1215,410.6 L1216,409.1 L1217,409.3 L1218,407.2 L1219,407.5 L1220,406.2 L1221,398.5 L1222,402.9 L1223,401.4 L1224,401.2 L1225,401.3 L1226,402.8 L1227,398.0 L1228,397.4 L1229,398.3 L1230,400.5 L1231,401.8 L1232,403.6 L1233,405.2 L1234,407.4 L1235,409.9 L1236,409.2 L1237,409.4 L1238,409.3 L1239,408.3 L1240,407.7 L1241,407.8 L1242,406.8 L1243,406.9 L1244,408.5 L1245,408.7 L1246,407.8 L1247,407.2 L1248,409.2 L1249,399.0 L1250,403.9 L1251,407.4 L1252,407.4 L1253,405.1 L1254,406.1 L1255,406.0 L1256,405.0 L1257,405.5 L1258,406.4 L1259,404.2 L1260,405.0 L1261,404.3 L1262,402.8 L1263,404.6 L1264,408.6 L1265,404.8 L1266,405.1 L1267,402.3 L1268,399.1 L1269,402.7 L1270,401.1 L1271,403.1 L1272,403.2 L1273,402.7 L1274,401.7 L1275,400.8 L1276,400.1 L1277,398.1 L1278,392.0 L1279,391.0 L1280,391.5 L1281,390.9 L1282,391.4 L1283,394.2 L1284,395.4 L1285,398.5 L1286,401.9 L1287,400.2 L1288,402.3 L1289,403.1 L1290,406.1 L1291,404.6 L1292,403.9 L1293,406.8 L1294,405.1 L1295,405.5 L1296,406.2 L1297,402.0 L1298,403.7 L1299,403.7 L1300,405.4 L1301,405.0 L1302,405.4 L1303,405.5 L1304,407.8 L1305,406.2 L1306,408.3 L1307,408.3 L1308,406.8 L1309,408.9 L1310,407.9 L1311,408.0 L1312,407.2 L1313,408.8 L1314,408.9 L1315,406.0 L1316,408.8 L1317,410.1 L1318,406.1 L1319,406.0 L1320,407.2 L1321,408.5 L1322,407.8 L1323,406.1 L1324,404.0 L1325,404.8 L1326,404.4 L1327,407.5 L1328,405.8 L1329,403.0 L1330,401.6 L1331,404.8 L1332,406.3 L1333,402.9 L1334,402.0 L1335,405.2 L1336,404.0 L1337,401.3 L1338,400.1 L1339,395.2 L1340,394.7 L1341,382.5 L1342,380.4 L1343,387.0 L1344,391.6 L1345,398.6 L1346,399.2 L1347,405.0 L1348,406.6 L1349,409.3 L1350,407.3 L1351,411.8 L1352,409.0 L1353,411.1 L1354,409.6 L1355,411.3 L1356,411.6 L1357,415.0 L1358,411.9 L1359,410.1 L1360,408.1 L1361,408.3 L1362,402.7 L1363,406.1 L1364,406.1 L1365,404.5 L1366,402.8 L1367,407.5 L1368,404.8 L1369,403.7 L1370,399.1 L1371,400.6 L1372,400.2 L1373,403.2 L1374,399.6 L1375,402.1 L1376,405.7 L1377,402.5 L1378,404.9 L1379,401.6 L1380,404.5 L1381,402.3 L1382,401.6 L1383,403.5 L1384,402.3 L1385,402.3 L1386,403.7 L1387,404.0 L1388,400.6 L1389,407.4 L1390,403.4 L1391,404.6 L1392,405.0 L1393,406.1 L1394,408.9 L1395,407.2 L1396,409.1 L1397,410.2 L1398,409.2 L1399,410.4 L1400,404.1 L1401,407.5 L1402,406.7 L1403,404.5 L1404,407.8 L1405,406.0 L1406,395.9 L1407,402.5 L1408,402.7 L1409,399.6 L1410,402.6 L1411,399.0 L1412,399.4 L1413,396.3 L1414,401.0 L1415,399.7 L1416,399.3 L1417,404.0 L1418,404.7 L1419,403.2 L1420,406.3 L1421,408.0 L1422,407.2 L1423,410.8 L1424,408.6 L1425,412.0 L1426,412.7 L1427,410.7 L1428,407.1 L1429,413.2 L1430,413.4 L1431,414.1 L1432,412.4 L1433,411.3 L1434,412.3 L1435,411.1 L1436,409.1 L1437,414.8 L1438,410.9 L1439,412.0 L1440,411.7 L1441,410.7 L1442,411.0 L1443,412.6 L1444,412.2 L1445,410.9 L1446,411.0 L1447,414.0 L1448,409.9 L1449,410.5 L1450,412.4 L1451,413.7 L1452,412.4 L1453,412.0 L1454,410.4 L1455,411.1 L1456,412.2 L1457,412.1 L1458,412.5 L1459,408.6 L1460,406.1 L1461,411.0 L1462,409.2 L1463,411.5 L1464,410.3 L1465,413.5 L1466,410.8 L1467,411.2 L1468,407.8 L1469,410.2 L1470,407.0 L1471,412.3 L1472,412.2 L1473,413.7 L1474,410.9 L1475,412.8 L1476,414.2 L1477,411.2 L1478,414.3 L1479,409.2 L1480,413.6 L1481,413.3 L1482,411.6 L1483,411.0 L1484,411.7 L1485,408.8 L1486,413.4 L1487,411.4 L1488,411.8 L1489,408.7 L1490,413.8 L1491,412.1 L1492,411.8 L1493,405.6 L1494,410.9 L1495,409.1 L1496,408.7 L1497,404.8 L1498,408.6 L1499,409.8 L1500,408.4 L1501,407.0 L1502,407.8 L1503,409.6 L1504,409.0 L1505,413.4 L1506,409.0 L1507,413.3 L1508,412.2 L1509,413.3 L1510,411.8 L1511,408.7 L1512,411.3 L1513,413.1 L1514,413.3 L1515,415.1 L1516,412.2 L1517,414.9 L1518,413.7 L1519,413.9 L1520,416.2 L1521,414.3 L1522,413.4 L1523,412.2 L1524,409.8 L1525,408.9 L1526,405.4 L1527,404.3 L1528,400.9 L1529,405.9 L1530,403.7 L1531,405.8 L1532,406.5 L1533,406.1 L1534,407.3 L1535,406.7 L1536,408.3 L1537,411.2 L1538,407.0 L1539,410.5 L1540,413.4 L1541,410.9 L1542,412.1 L1543,412.2 L1544,409.6 L1545,408.0 L1546,402.4 L1547,402.2 L1548,398.2 L1549,403.1 L1550,399.2 L1551,395.3 L1552,393.3 L1553,395.9 L1554,395.7 L1555,395.7 L1556,398.9 L1557,402.2 L1558,401.8 L1559,403.3 L1560,407.2 L1561,404.3 L1562,408.2 L1563,405.1 L1564,404.4 L1565,403.0 L1566,406.4 L1567,403.8 L1568,399.4 L1569,406.4 L1570,402.7 L1571,403.2 L1572,401.2 L1573,401.5 L1574,401.4 L1575,400.7 L1576,397.8 L1577,396.5 L1578,396.6 L1579,378.6 L1580,358.9 L1581,374.6 L1582,387.9 L1583,391.8 L1584,395.5 L1585,396.8 L1586,397.4 L1587,399.6 L1588,406.4 L1589,410.0 L1590,416.9 L1591,418.3 L1592,413.2 L1593,416.1 L1594,415.9 L1595,413.6 L1596,412.6 L1597,411.1 L1598,413.9 L1599,410.7 L1600,413.1 L1601,413.8 L1602,409.9 L1603,408.2 L1604,410.2 L1605,401.9 L1606,411.5 L1607,410.8 L1608,411.4 L1609,407.9 L1610,405.8 L1611,409.3 L1612,408.8 L1613,408.8 L1614,408.1 L1615,409.6 L1616,412.7 L1617,413.9 L1618,410.0 L1619,409.0 L1620,410.1 L1621,411.2 L1622,415.7 L1623,413.1 L1624,417.7 L1625,418.3 L1626,414.9 L1627,414.7 L1628,413.7 L1629,413.1 L1630,412.1 L1631,414.2 L1632,415.6 L1633,409.4 L1634,413.4 L1635,412.5 L1636,412.1 L1637,413.2 L1638,409.8 L1639,410.5 L1640,413.0 L1641,411.7 L1642,411.9 L1643,409.7 L1644,411.6 L1645,415.3 L1646,412.2 L1647,411.9 L1648,411.1 L1649,413.6 L1650,413.5 L1651,414.6 L1652,416.4 L1653,414.8 L1654,415.3 L1655,411.5 L1656,414.1 L1657,416.6 L1658,416.7 L1659,417.2 L1660,416.7 L1661,414.6 L1662,418.0 L1663,414.7 L1664,411.2 L1665,412.6 L1666,411.6 L1667,415.4 L1668,414.7 L1669,409.8 L1670,412.5 L1671,414.8 L1672,412.6 L1673,413.6 L1674,411.9 L1675,413.1 L1676,412.8 L1677,411.2 L1678,410.1 L1679,409.7 L1680,406.2 L1681,405.3 L1682,407.7 L1683,405.0 L1684,406.6 L1685,402.4 L1686,405.1 L1687,407.3 L1688,405.1 L1689,405.2 L1690,405.3 L1691,404.5 L1692,403.9 L1693,404.5 L1694,403.7 L1695,402.6 L1696,400.9 L1697,401.8 L1698,400.5 L1699,400.1 L1700,399.7 L1701,397.0 L1702,399.6 L1703,392.9 L1704,391.7 L1705,389.3 L1706,390.5 L1707,387.5 L1708,387.9 L1709,385.4 L1710,384.8 L1711,379.2 L1712,375.4 L1713,370.4 L1714,367.7 L1715,356.3 L1716,362.2 L1717,371.5 L1718,370.4 L1719,370.9 L1720,365.6 L1721,370.1 L1722,375.0 L1723,380.0 L1724,392.0 L1725,402.6 L1726,406.5 L1727,413.2 L1728,413.9 L1729,416.7 L1730,415.9 L1731,424.1 L1732,422.8 L1733,422.5 L1734,418.8 L1735,414.6 L1736,413.1 L1737,415.7 L1738,412.8 L1739,412.1 L1740,412.8 L1741,415.9 L1742,414.1 L1743,413.3 L1744,414.7 L1745,415.8 L1746,419.7 L1747,417.1 L1748,418.4 L1749,418.9 L1750,417.1 L1751,421.5 L1752,418.3 L1753,417.3 L1754,416.6 L1755,415.8 L1756,409.0 L1757,415.4 L1758,415.1 L1759,413.4 L1760,412.5 L1761,413.2 L1762,412.1 L1763,409.8 L1764,407.5 L1765,410.6 L1766,413.2 L1767,409.1 L1768,410.1 L1769,406.4 L1770,407.4 L1771,405.3 L1772,407.6 L1773,406.9 L1774,411.5 L1775,407.7 L1776,407.2 L1777,409.2 L1778,406.2 L1779,408.3 L1780,409.2 L1781,407.6 L1782,406.9 L1783,407.7 L1784,411.5 L1785,411.8 L1786,412.6 L1787,411.6 L1788,410.1 L1789,406.5 L1790,413.7 L1791,411.5 L1792,413.8 L1793,416.4 L1794,414.3 L1795,413.7 L1796,415.2 L1797,415.1 L1798,417.3 L1799,419.6 L1800,415.5 L1801,418.2 L1802,417.7 L1803,418.1 L1804,415.1 L1805,416.5 L1806,417.9 L1807,418.9 L1808,417.6 L1809,409.2 L1810,417.0 L1811,412.7 L1812,415.0 L1813,415.5 L1814,412.8 L1815,414.0 L1816,416.5 L1817,413.7 L1818,414.3 L1819,410.7 L1820,411.7 L1821,414.5 L1822,409.6 L1823,414.6 L1824,414.3 L1825,413.9 L1826,413.1 L1827,414.8 L1828,411.7 L1829,411.5 L1830,414.6 L1831,408.2 L1832,412.5 L1833,416.2 L1834,412.7 L1835,412.2 L1836,411.4 L1837,413.0 L1838,414.4 L1839,413.4 L1840,417.4 L1841,416.2 L1842,411.6 L1843,410.7 L1844,413.3 L1845,415.4 L1846,411.7 L1847,415.6 L1848,412.0 L1849,414.8 L1850,414.6 L1851,415.3 L1852,415.3 L1853,412.3 L1854,417.6 L1855,416.4 L1856,410.3 L1857,412.2 L1858,413.1 L1859,413.0 L1860,407.3 L1861,408.6 L1862,411.7 L1863,405.3 L1864,409.2 L1865,409.9 L1866,409.3 L1867,406.9 L1868,410.3 L1869,409.9 L1870,410.8 L1870,548 Z" fill="url(#spg2)" clip-path="url(#cl2)"/>
<line x1="401" y1="201.5" x2="1806" y2="201.5" stroke="#ffffff" stroke-opacity="0.3" stroke-width="1" stroke-dasharray="2 3"/>
<line x1="401" y1="229.5" x2="1806" y2="229.5" stroke="#ffffff" stroke-opacity="0.3" stroke-width="1" stroke-dasharray="2 3"/>
<line x1="401" y1="257.5" x2="1806" y2="257.5" stroke="#ffffff" stroke-opacity="0.3" stroke-width="1" stroke-dasharray="2 3"/>
<line x1="401" y1="286.5" x2="1806" y2="286.5" stroke="#ffffff" stroke-opacity="0.3" stroke-width="1" stroke-dasharray="2 3"/>
<line x1="401" y1="313.5" x2="1806" y2="313.5" stroke="#ffffff" stroke-opacity="0.3" stroke-width="1" stroke-dasharray="2 3"/>
<line x1="401" y1="342.5" x2="1806" y2="342.5" stroke="#ffffff" stroke-opacity="0.3" stroke-width="1" stroke-dasharray="2 3"/>
<line x1="401" y1="369.5" x2="1806" y2="369.5" stroke="#ffffff" stroke-opacity="0.3" stroke-width="1" stroke-dasharray="2 3"/>
<line x1="401" y1="398.5" x2="1806" y2="398.5" stroke="#ffffff" stroke-opacity="0.3" stroke-width="1" stroke-dasharray="2 3"/>
<line x1="401" y1="426.5" x2="1806" y2="426.5" stroke="#ffffff" stroke-opacity="0.3" stroke-width="1" stroke-dasharray="2 3"/>
<line x1="401" y1="449.5" x2="1806" y2="449.5" stroke="#ffffff" stroke-opacity="0.3" stroke-width="1" stroke-dasharray="2 3"/>
<line x1="401" y1="473.5" x2="1806" y2="473.5" stroke="#ffffff" stroke-opacity="0.3" stroke-width="1" stroke-dasharray="2 3"/>
<line x1="401" y1="496.5" x2="1806" y2="496.5" stroke="#ffffff" stroke-opacity="0.3" stroke-width="1" stroke-dasharray="2 3"/>
<line x1="401" y1="519.5" x2="1806" y2="519.5" stroke="#ffffff" stroke-opacity="0.3" stroke-width="1" stroke-dasharray="2 3"/>
<path d="M336,408.6 L337,410.1 L338,404.1 L339,405.8 L340,410.8 L341,410.8 L342,411.6 L343,411.9 L344,410.0 L345,405.5 L346,411.8 L347,413.4 L348,413.5 L349,412.8 L350,412.8 L351,413.4 L352,414.7 L353,414.4 L354,415.2 L355,417.5 L356,417.7 L357,420.3 L358,418.6 L359,418.0 L360,417.5 L361,421.8 L362,423.3 L363,419.8 L364,418.5 L365,414.8 L366,412.5 L367,413.0 L368,411.4 L369,414.0 L370,410.4 L371,409.3 L372,407.5 L373,414.6 L374,413.3 L375,413.1 L376,412.6 L377,414.0 L378,410.4 L379,412.8 L380,412.8 L381,410.8 L382,414.5 L383,408.6 L384,411.1 L385,411.9 L386,410.5 L387,410.4 L388,406.4 L389,408.1 L390,402.1 L391,407.6 L392,411.0 L393,406.7 L394,410.3 L395,409.6 L396,408.2 L397,405.9 L398,406.4 L399,400.1 L400,403.3 L401,400.4 L402,397.5 L403,395.6 L404,383.9 L405,376.7 L406,366.3 L407,377.4 L408,389.6 L409,395.6 L410,399.6 L411,404.9 L412,411.6 L413,408.5 L414,412.2 L415,413.6 L416,411.1 L417,413.1 L418,414.2 L419,410.6 L420,413.6 L421,413.5 L422,413.9 L423,415.8 L424,411.4 L425,416.5 L426,414.8 L427,416.6 L428,416.6 L429,418.4 L430,414.2 L431,417.0 L432,415.1 L433,413.8 L434,415.5 L435,416.3 L436,417.2 L437,411.6 L438,417.8 L439,414.2 L440,416.8 L441,417.3 L442,416.3 L443,410.0 L444,407.0 L445,413.1 L446,409.4 L447,412.2 L448,413.1 L449,411.3 L450,412.1 L451,413.0 L452,412.1 L453,411.1 L454,404.3 L455,404.4 L456,403.0 L457,403.0 L458,408.6 L459,410.4 L460,409.5 L461,412.2 L462,409.6 L463,411.2 L464,410.1 L465,410.6 L466,408.7 L467,410.5 L468,408.3 L469,411.0 L470,409.4 L471,408.6 L472,412.8 L473,409.9 L474,410.9 L475,413.3 L476,412.0 L477,412.4 L478,412.0 L479,412.9 L480,413.2 L481,412.2 L482,415.1 L483,415.8 L484,415.0 L485,413.3 L486,414.5 L487,413.4 L488,413.9 L489,415.6 L490,417.0 L491,411.1 L492,411.9 L493,411.1 L494,412.6 L495,406.6 L496,412.6 L497,409.7 L498,405.0 L499,408.9 L500,408.5 L501,408.5 L502,405.2 L503,404.2 L504,406.4 L505,406.2 L506,408.7 L507,409.1 L508,407.6 L509,410.9 L510,411.9 L511,414.3 L512,412.9 L513,417.1 L514,417.1 L515,413.9 L516,402.3 L517,394.4 L518,401.7 L519,407.0 L520,414.3 L521,413.9 L522,413.0 L523,410.9 L524,413.9 L525,412.3 L526,411.5 L527,409.0 L528,415.2 L529,414.0 L530,415.6 L531,414.6 L532,412.9 L533,414.4 L534,414.2 L535,414.8 L536,415.4 L537,413.1 L538,409.5 L539,415.0 L540,412.6 L541,410.7 L542,413.1 L543,414.7 L544,414.2 L545,416.1 L546,412.7 L547,412.0 L548,412.1 L549,418.4 L550,414.0 L551,414.0 L552,412.7 L553,412.7 L554,412.7 L555,414.4 L556,415.7 L557,412.9 L558,411.9 L559,413.8 L560,417.4 L561,416.9 L562,413.3 L563,408.1 L564,415.0 L565,413.1 L566,417.4 L567,416.1 L568,414.7 L569,417.6 L570,416.8 L571,414.7 L572,413.9 L573,412.5 L574,415.8 L575,415.4 L576,412.1 L577,416.5 L578,413.0 L579,411.5 L580,411.5 L581,412.6 L582,413.2 L583,411.3 L584,413.3 L585,411.3 L586,409.4 L587,410.6 L588,410.3 L589,411.4 L590,409.7 L591,408.2 L592,409.9 L593,406.3 L594,403.6 L595,407.9 L596,407.5 L597,408.6 L598,407.7 L599,407.5 L600,410.2 L601,410.0 L602,407.1 L603,408.9 L604,406.1 L605,406.5 L606,407.9 L607,407.4 L608,408.2 L609,406.6 L610,407.6 L611,408.9 L612,408.9 L613,406.4 L614,401.6 L615,408.7 L616,410.0 L617,402.5 L618,412.3 L619,412.8 L620,411.7 L621,408.1 L622,412.4 L623,415.4 L624,414.6 L625,414.4 L626,413.7 L627,415.9 L628,412.7 L629,412.3 L630,412.0 L631,411.1 L632,412.0 L633,407.8 L634,407.5 L635,408.3 L636,407.3 L637,411.6 L638,404.8 L639,404.2 L640,406.0 L641,408.4 L642,407.4 L643,405.8 L644,410.6 L645,405.3 L646,405.7 L647,394.7 L648,383.0 L649,396.8 L650,402.4 L651,408.5 L652,413.2 L653,407.1 L654,415.4 L655,419.6 L656,417.8 L657,417.2 L658,416.2 L659,415.5 L660,413.6 L661,411.3 L662,409.2 L663,413.5 L664,410.7 L665,411.4 L666,406.2 L667,408.6 L668,408.2 L669,409.2 L670,408.1 L671,408.0 L672,406.8 L673,405.9 L674,405.4 L675,406.1 L676,406.2 L677,404.3 L678,403.9 L679,408.4 L680,404.5 L681,405.5 L682,404.5 L683,404.4 L684,403.1 L685,402.8 L686,404.7 L687,401.2 L688,405.6 L689,404.8 L690,406.6 L691,407.3 L692,407.8 L693,407.9 L694,408.8 L695,415.5 L696,413.8 L697,416.0 L698,415.3 L699,417.1 L700,418.9 L701,416.7 L702,418.0 L703,415.9 L704,415.2 L705,414.1 L706,413.1 L707,415.1 L708,411.0 L709,414.8 L710,409.7 L711,403.8 L712,412.4 L713,406.5 L714,406.8 L715,411.6 L716,411.2 L717,413.1 L718,412.8 L719,414.4 L720,412.3 L721,408.1 L722,406.7 L723,408.9 L724,405.0 L725,400.3 L726,404.3 L727,411.0 L728,407.7 L729,409.1 L730,408.7 L731,408.1 L732,408.8 L733,409.5 L734,411.5 L735,411.9 L736,411.8 L737,413.3 L738,414.6 L739,416.5 L740,414.7 L741,414.4 L742,413.0 L743,413.2 L744,413.1 L745,411.4 L746,409.2 L747,406.6 L748,410.3 L749,411.7 L750,404.6 L751,408.2 L752,405.7 L753,402.4 L754,406.6 L755,407.9 L756,410.2 L757,412.2 L758,412.4 L759,413.7 L760,415.3 L761,417.2 L762,416.6 L763,418.2 L764,417.4 L765,420.1 L766,421.4 L767,420.0 L768,422.3 L769,420.1 L770,417.2 L771,421.1 L772,419.8 L773,415.3 L774,415.4 L775,418.9 L776,411.9 L777,416.7 L778,416.6 L779,415.1 L780,414.1 L781,414.5 L782,414.7 L783,413.2 L784,414.0 L785,412.3 L786,408.1 L787,411.2 L788,412.8 L789,409.2 L790,410.3 L791,408.1 L792,408.9 L793,406.7 L794,405.2 L795,405.8 L796,400.4 L797,401.0 L798,406.6 L799,403.5 L800,399.9 L801,402.2 L802,402.4 L803,404.0 L804,405.4 L805,406.8 L806,407.9 L807,411.3 L808,410.3 L809,412.1 L810,410.7 L811,412.6 L812,415.5 L813,414.8 L814,411.4 L815,414.2 L816,417.8 L817,416.7 L818,416.6 L819,414.0 L820,412.8 L821,417.0 L822,417.6 L823,413.1 L824,416.7 L825,415.7 L826,416.9 L827,415.7 L828,416.8 L829,417.7 L830,417.4 L831,416.6 L832,414.9 L833,413.2 L834,417.7 L835,417.5 L836,417.6 L837,414.7 L838,420.1 L839,419.1 L840,416.4 L841,409.3 L842,403.3 L843,409.0 L844,408.7 L845,410.1 L846,409.5 L847,410.8 L848,413.6 L849,418.2 L850,418.3 L851,420.3 L852,417.3 L853,420.8 L854,419.2 L855,418.4 L856,416.1 L857,415.9 L858,418.5 L859,418.3 L860,416.9 L861,415.8 L862,408.4 L863,414.2 L864,411.6 L865,414.6 L866,412.3 L867,406.9 L868,405.8 L869,408.1 L870,412.2 L871,410.8 L872,408.5 L873,410.4 L874,404.2 L875,411.3 L876,411.5 L877,413.0 L878,412.1 L879,416.9 L880,415.4 L881,420.1 L882,420.0 L883,418.2 L884,419.6 L885,420.7 L886,421.2 L887,423.8 L888,421.8 L889,421.5 L890,421.7 L891,418.1 L892,423.0 L893,420.6 L894,419.5 L895,419.0 L896,417.4 L897,420.6 L898,417.3 L899,420.3 L900,419.4 L901,420.7 L902,418.3 L903,418.0 L904,414.7 L905,417.7 L906,414.9 L907,414.3 L908,414.5 L909,414.6 L910,415.5 L911,415.0 L912,416.4 L913,415.7 L914,419.4 L915,417.3 L916,418.0 L917,415.3 L918,419.9 L919,419.6 L920,418.0 L921,418.8 L922,418.7 L923,417.8 L924,416.5 L925,416.3 L926,416.3 L927,418.8 L928,415.5 L929,415.1 L930,411.8 L931,412.2 L932,412.1 L933,410.7 L934,409.9 L935,407.5 L936,407.9 L937,405.1 L938,405.5 L939,408.0 L940,405.8 L941,406.3 L942,407.9 L943,405.8 L944,405.9 L945,411.2 L946,410.8 L947,410.5 L948,409.3 L949,411.5 L950,410.2 L951,413.2 L952,412.4 L953,412.7 L954,415.8 L955,413.1 L956,413.1 L957,417.3 L958,413.6 L959,418.2 L960,417.2 L961,420.6 L962,419.1 L963,419.6 L964,419.6 L965,420.2 L966,419.1 L967,418.7 L968,416.2 L969,422.9 L970,419.0 L971,419.6 L972,415.2 L973,419.1 L974,416.1 L975,414.2 L976,416.5 L977,416.0 L978,414.9 L979,411.8 L980,410.9 L981,411.6 L982,410.6 L983,407.0 L984,407.5 L985,406.4 L986,408.4 L987,408.3 L988,406.9 L989,407.2 L990,407.2 L991,407.7 L992,410.1 L993,411.6 L994,401.4 L995,410.5 L996,411.3 L997,407.2 L998,409.5 L999,410.7 L1000,410.1 L1001,410.1 L1002,413.8 L1003,412.8 L1004,413.6 L1005,413.1 L1006,415.5 L1007,411.5 L1008,412.9 L1009,416.7 L1010,416.3 L1011,418.9 L1012,417.2 L1013,419.9 L1014,419.3 L1015,419.8 L1016,416.2 L1017,419.0 L1018,417.6 L1019,420.6 L1020,417.2 L1021,418.6 L1022,418.8 L1023,416.6 L1024,416.8 L1025,418.3 L1026,419.7 L1027,417.0 L1028,416.1 L1029,418.2 L1030,415.5 L1031,414.8 L1032,418.6 L1033,416.6 L1034,417.3 L1035,415.4 L1036,417.1 L1037,414.0 L1038,415.2 L1039,415.1 L1040,416.0 L1041,417.2 L1042,416.4 L1043,413.6 L1044,417.5 L1045,413.9 L1046,415.3 L1047,414.5 L1048,418.2 L1049,415.6 L1050,414.7 L1051,419.1 L1052,416.1 L1053,418.4 L1054,421.7 L1055,419.1 L1056,417.8 L1057,417.0 L1058,420.6 L1059,419.5 L1060,421.4 L1061,419.3 L1062,416.4 L1063,422.2 L1064,418.2 L1065,417.2 L1066,415.5 L1067,419.5 L1068,413.7 L1069,415.6 L1070,413.9 L1071,416.3 L1072,415.8 L1073,413.2 L1074,409.9 L1075,413.7 L1076,412.8 L1077,414.3 L1078,405.9 L1079,410.2 L1080,411.4 L1081,408.6 L1082,413.1 L1083,409.7 L1084,412.2 L1085,408.8 L1086,408.7 L1087,406.9 L1088,407.5 L1089,406.3 L1090,407.5 L1091,407.2 L1092,405.4 L1093,404.4 L1094,404.0 L1095,404.1 L1096,403.4 L1097,405.1 L1098,402.5 L1099,401.7 L1100,395.8 L1101,391.8 L1102,391.8 L1103,387.9 L1104,384.4 L1105,378.9 L1106,367.4 L1107,367.7 L1108,363.7 L1109,376.4 L1110,392.5 L1111,392.8 L1112,395.2 L1113,385.5 L1114,376.6 L1115,375.5 L1116,379.5 L1117,386.6 L1118,397.1 L1119,404.4 L1120,410.3 L1121,414.4 L1122,421.6 L1123,418.9 L1124,417.7 L1125,418.1 L1126,418.9 L1127,416.7 L1128,416.4 L1129,418.2 L1130,417.4 L1131,415.4 L1132,420.2 L1133,417.7 L1134,415.0 L1135,416.2 L1136,418.6 L1137,421.2 L1138,419.1 L1139,417.8 L1140,419.5 L1141,419.3 L1142,416.5 L1143,411.9 L1144,419.7 L1145,415.3 L1146,419.7 L1147,414.9 L1148,416.1 L1149,416.3 L1150,415.8 L1151,416.8 L1152,411.7 L1153,411.4 L1154,412.1 L1155,414.2 L1156,413.3 L1157,411.6 L1158,406.4 L1159,407.1 L1160,405.9 L1161,408.6 L1162,409.7 L1163,411.3 L1164,407.8 L1165,404.8 L1166,409.5 L1167,410.9 L1168,411.9 L1169,412.8 L1170,411.7 L1171,411.7 L1172,409.9 L1173,413.2 L1174,410.5 L1175,416.7 L1176,414.4 L1177,416.7 L1178,418.4 L1179,419.3 L1180,416.3 L1181,420.6 L1182,417.9 L1183,417.9 L1184,418.4 L1185,420.2 L1186,417.0 L1187,416.0 L1188,421.8 L1189,414.7 L1190,418.4 L1191,425.0 L1192,426.7 L1193,422.1 L1194,419.0 L1195,415.7 L1196,415.2 L1197,409.4 L1198,407.5 L1199,404.0 L1200,403.3 L1201,401.6 L1202,395.2 L1203,398.7 L1204,398.7 L1205,394.3 L1206,394.0 L1207,387.5 L1208,396.2 L1209,398.4 L1210,398.0 L1211,403.0 L1212,405.1 L1213,403.4 L1214,411.2 L1215,410.6 L1216,409.1 L1217,409.3 L1218,407.2 L1219,407.5 L1220,406.2 L1221,398.5 L1222,402.9 L1223,401.4 L1224,401.2 L1225,401.3 L1226,402.8 L1227,398.0 L1228,397.4 L1229,398.3 L1230,400.5 L1231,401.8 L1232,403.6 L1233,405.2 L1234,407.4 L1235,409.9 L1236,409.2 L1237,409.4 L1238,409.3 L1239,408.3 L1240,407.7 L1241,407.8 L1242,406.8 L1243,406.9 L1244,408.5 L1245,408.7 L1246,407.8 L1247,407.2 L1248,409.2 L1249,399.0 L1250,403.9 L1251,407.4 L1252,407.4 L1253,405.1 L1254,406.1 L1255,406.0 L1256,405.0 L1257,405.5 L1258,406.4 L1259,404.2 L1260,405.0 L1261,404.3 L1262,402.8 L1263,404.6 L1264,408.6 L1265,404.8 L1266,405.1 L1267,402.3 L1268,399.1 L1269,402.7 L1270,401.1 L1271,403.1 L1272,403.2 L1273,402.7 L1274,401.7 L1275,400.8 L1276,400.1 L1277,398.1 L1278,392.0 L1279,391.0 L1280,391.5 L1281,390.9 L1282,391.4 L1283,394.2 L1284,395.4 L1285,398.5 L1286,401.9 L1287,400.2 L1288,402.3 L1289,403.1 L1290,406.1 L1291,404.6 L1292,403.9 L1293,406.8 L1294,405.1 L1295,405.5 L1296,406.2 L1297,402.0 L1298,403.7 L1299,403.7 L1300,405.4 L1301,405.0 L1302,405.4 L1303,405.5 L1304,407.8 L1305,406.2 L1306,408.3 L1307,408.3 L1308,406.8 L1309,408.9 L1310,407.9 L1311,408.0 L1312,407.2 L1313,408.8 L1314,408.9 L1315,406.0 L1316,408.8 L1317,410.1 L1318,406.1 L1319,406.0 L1320,407.2 L1321,408.5 L1322,407.8 L1323,406.1 L1324,404.0 L1325,404.8 L1326,404.4 L1327,407.5 L1328,405.8 L1329,403.0 L1330,401.6 L1331,404.8 L1332,406.3 L1333,402.9 L1334,402.0 L1335,405.2 L1336,404.0 L1337,401.3 L1338,400.1 L1339,395.2 L1340,394.7 L1341,382.5 L1342,380.4 L1343,387.0 L1344,391.6 L1345,398.6 L1346,399.2 L1347,405.0 L1348,406.6 L1349,409.3 L1350,407.3 L1351,411.8 L1352,409.0 L1353,411.1 L1354,409.6 L1355,411.3 L1356,411.6 L1357,415.0 L1358,411.9 L1359,410.1 L1360,408.1 L1361,408.3 L1362,402.7 L1363,406.1 L1364,406.1 L1365,404.5 L1366,402.8 L1367,407.5 L1368,404.8 L1369,403.7 L1370,399.1 L1371,400.6 L1372,400.2 L1373,403.2 L1374,399.6 L1375,402.1 L1376,405.7 L1377,402.5 L1378,404.9 L1379,401.6 L1380,404.5 L1381,402.3 L1382,401.6 L1383,403.5 L1384,402.3 L1385,402.3 L1386,403.7 L1387,404.0 L1388,400.6 L1389,407.4 L1390,403.4 L1391,404.6 L1392,405.0 L1393,406.1 L1394,408.9 L1395,407.2 L1396,409.1 L1397,410.2 L1398,409.2 L1399,410.4 L1400,404.1 L1401,407.5 L1402,406.7 L1403,404.5 L1404,407.8 L1405,406.0 L1406,395.9 L1407,402.5 L1408,402.7 L1409,399.6 L1410,402.6 L1411,399.0 L1412,399.4 L1413,396.3 L1414,401.0 L1415,399.7 L1416,399.3 L1417,404.0 L1418,404.7 L1419,403.2 L1420,406.3 L1421,408.0 L1422,407.2 L1423,410.8 L1424,408.6 L1425,412.0 L1426,412.7 L1427,410.7 L1428,407.1 L1429,413.2 L1430,413.4 L1431,414.1 L1432,412.4 L1433,411.3 L1434,412.3 L1435,411.1 L1436,409.1 L1437,414.8 L1438,410.9 L1439,412.0 L1440,411.7 L1441,410.7 L1442,411.0 L1443,412.6 L1444,412.2 L1445,410.9 L1446,411.0 L1447,414.0 L1448,409.9 L1449,410.5 L1450,412.4 L1451,413.7 L1452,412.4 L1453,412.0 L1454,410.4 L1455,411.1 L1456,412.2 L1457,412.1 L1458,412.5 L1459,408.6 L1460,406.1 L1461,411.0 L1462,409.2 L1463,411.5 L1464,410.3 L1465,413.5 L1466,410.8 L1467,411.2 L1468,407.8 L1469,410.2 L1470,407.0 L1471,412.3 L1472,412.2 L1473,413.7 L1474,410.9 L1475,412.8 L1476,414.2 L1477,411.2 L1478,414.3 L1479,409.2 L1480,413.6 L1481,413.3 L1482,411.6 L1483,411.0 L1484,411.7 L1485,408.8 L1486,413.4 L1487,411.4 L1488,411.8 L1489,408.7 L1490,413.8 L1491,412.1 L1492,411.8 L1493,405.6 L1494,410.9 L1495,409.1 L1496,408.7 L1497,404.8 L1498,408.6 L1499,409.8 L1500,408.4 L1501,407.0 L1502,407.8 L1503,409.6 L1504,409.0 L1505,413.4 L1506,409.0 L1507,413.3 L1508,412.2 L1509,413.3 L1510,411.8 L1511,408.7 L1512,411.3 L1513,413.1 L1514,413.3 L1515,415.1 L1516,412.2 L1517,414.9 L1518,413.7 L1519,413.9 L1520,416.2 L1521,414.3 L1522,413.4 L1523,412.2 L1524,409.8 L1525,408.9 L1526,405.4 L1527,404.3 L1528,400.9 L1529,405.9 L1530,403.7 L1531,405.8 L1532,406.5 L1533,406.1 L1534,407.3 L1535,406.7 L1536,408.3 L1537,411.2 L1538,407.0 L1539,410.5 L1540,413.4 L1541,410.9 L1542,412.1 L1543,412.2 L1544,409.6 L1545,408.0 L1546,402.4 L1547,402.2 L1548,398.2 L1549,403.1 L1550,399.2 L1551,395.3 L1552,393.3 L1553,395.9 L1554,395.7 L1555,395.7 L1556,398.9 L1557,402.2 L1558,401.8 L1559,403.3 L1560,407.2 L1561,404.3 L1562,408.2 L1563,405.1 L1564,404.4 L1565,403.0 L1566,406.4 L1567,403.8 L1568,399.4 L1569,406.4 L1570,402.7 L1571,403.2 L1572,401.2 L1573,401.5 L1574,401.4 L1575,400.7 L1576,397.8 L1577,396.5 L1578,396.6 L1579,378.6 L1580,358.9 L1581,374.6 L1582,387.9 L1583,391.8 L1584,395.5 L1585,396.8 L1586,397.4 L1587,399.6 L1588,406.4 L1589,410.0 L1590,416.9 L1591,418.3 L1592,413.2 L1593,416.1 L1594,415.9 L1595,413.6 L1596,412.6 L1597,411.1 L1598,413.9 L1599,410.7 L1600,413.1 L1601,413.8 L1602,409.9 L1603,408.2 L1604,410.2 L1605,401.9 L1606,411.5 L1607,410.8 L1608,411.4 L1609,407.9 L1610,405.8 L1611,409.3 L1612,408.8 L1613,408.8 L1614,408.1 L1615,409.6 L1616,412.7 L1617,413.9 L1618,410.0 L1619,409.0 L1620,410.1 L1621,411.2 L1622,415.7 L1623,413.1 L1624,417.7 L1625,418.3 L1626,414.9 L1627,414.7 L1628,413.7 L1629,413.1 L1630,412.1 L1631,414.2 L1632,415.6 L1633,409.4 L1634,413.4 L1635,412.5 L1636,412.1 L1637,413.2 L1638,409.8 L1639,410.5 L1640,413.0 L1641,411.7 L1642,411.9 L1643,409.7 L1644,411.6 L1645,415.3 L1646,412.2 L1647,411.9 L1648,411.1 L1649,413.6 L1650,413.5 L1651,414.6 L1652,416.4 L1653,414.8 L1654,415.3 L1655,411.5 L1656,414.1 L1657,416.6 L1658,416.7 L1659,417.2 L1660,416.7 L1661,414.6 L1662,418.0 L1663,414.7 L1664,411.2 L1665,412.6 L1666,411.6 L1667,415.4 L1668,414.7 L1669,409.8 L1670,412.5 L1671,414.8 L1672,412.6 L1673,413.6 L1674,411.9 L1675,413.1 L1676,412.8 L1677,411.2 L1678,410.1 L1679,409.7 L1680,406.2 L1681,405.3 L1682,407.7 L1683,405.0 L1684,406.6 L1685,402.4 L1686,405.1 L1687,407.3 L1688,405.1 L1689,405.2 L1690,405.3 L1691,404.5 L1692,403.9 L1693,404.5 L1694,403.7 L1695,402.6 L1696,400.9 L1697,401.8 L1698,400.5 L1699,400.1 L1700,399.7 L1701,397.0 L1702,399.6 L1703,392.9 L1704,391.7 L1705,389.3 L1706,390.5 L1707,387.5 L1708,387.9 L1709,385.4 L1710,384.8 L1711,379.2 L1712,375.4 L1713,370.4 L1714,367.7 L1715,356.3 L1716,362.2 L1717,371.5 L1718,370.4 L1719,370.9 L1720,365.6 L1721,370.1 L1722,375.0 L1723,380.0 L1724,392.0 L1725,402.6 L1726,406.5 L1727,413.2 L1728,413.9 L1729,416.7 L1730,415.9 L1731,424.1 L1732,422.8 L1733,422.5 L1734,418.8 L1735,414.6 L1736,413.1 L1737,415.7 L1738,412.8 L1739,412.1 L1740,412.8 L1741,415.9 L1742,414.1 L1743,413.3 L1744,414.7 L1745,415.8 L1746,419.7 L1747,417.1 L1748,418.4 L1749,418.9 L1750,417.1 L1751,421.5 L1752,418.3 L1753,417.3 L1754,416.6 L1755,415.8 L1756,409.0 L1757,415.4 L1758,415.1 L1759,413.4 L1760,412.5 L1761,413.2 L1762,412.1 L1763,409.8 L1764,407.5 L1765,410.6 L1766,413.2 L1767,409.1 L1768,410.1 L1769,406.4 L1770,407.4 L1771,405.3 L1772,407.6 L1773,406.9 L1774,411.5 L1775,407.7 L1776,407.2 L1777,409.2 L1778,406.2 L1779,408.3 L1780,409.2 L1781,407.6 L1782,406.9 L1783,407.7 L1784,411.5 L1785,411.8 L1786,412.6 L1787,411.6 L1788,410.1 L1789,406.5 L1790,413.7 L1791,411.5 L1792,413.8 L1793,416.4 L1794,414.3 L1795,413.7 L1796,415.2 L1797,415.1 L1798,417.3 L1799,419.6 L1800,415.5 L1801,418.2 L1802,417.7 L1803,418.1 L1804,415.1 L1805,416.5 L1806,417.9 L1807,418.9 L1808,417.6 L1809,409.2 L1810,417.0 L1811,412.7 L1812,415.0 L1813,415.5 L1814,412.8 L1815,414.0 L1816,416.5 L1817,413.7 L1818,414.3 L1819,410.7 L1820,411.7 L1821,414.5 L1822,409.6 L1823,414.6 L1824,414.3 L1825,413.9 L1826,413.1 L1827,414.8 L1828,411.7 L1829,411.5 L1830,414.6 L1831,408.2 L1832,412.5 L1833,416.2 L1834,412.7 L1835,412.2 L1836,411.4 L1837,413.0 L1838,414.4 L1839,413.4 L1840,417.4 L1841,416.2 L1842,411.6 L1843,410.7 L1844,413.3 L1845,415.4 L1846,411.7 L1847,415.6 L1848,412.0 L1849,414.8 L1850,414.6 L1851,415.3 L1852,415.3 L1853,412.3 L1854,417.6 L1855,416.4 L1856,410.3 L1857,412.2 L1858,413.1 L1859,413.0 L1860,407.3 L1861,408.6 L1862,411.7 L1863,405.3 L1864,409.2 L1865,409.9 L1866,409.3 L1867,406.9 L1868,410.3 L1869,409.9 L1870,410.8" fill="none" stroke="#e4e4ec" stroke-width="1.3"/>
</svg>
<div class="abs t" style="left:341px;top:195px;font-size:12.5px;color:#ddd">S8</div>
<div class="abs t" style="left:1765px;top:195px;width:100px;text-align:right;font-size:12.5px;color:#ddd">S8</div>
<div class="abs t" style="left:341px;top:223px;font-size:12.5px;color:#ddd">S7</div>
<div class="abs t" style="left:1765px;top:223px;width:100px;text-align:right;font-size:12.5px;color:#ddd">S7</div>
<div class="abs t" style="left:341px;top:251px;font-size:12.5px;color:#ddd">S6</div>
<div class="abs t" style="left:1765px;top:251px;width:100px;text-align:right;font-size:12.5px;color:#ddd">S6</div>
<div class="abs t" style="left:341px;top:280px;font-size:12.5px;color:#ddd">S5</div>
<div class="abs t" style="left:1765px;top:280px;width:100px;text-align:right;font-size:12.5px;color:#ddd">S5</div>
<div class="abs t" style="left:341px;top:307px;font-size:12.5px;color:#ddd">S4</div>
<div class="abs t" style="left:1765px;top:307px;width:100px;text-align:right;font-size:12.5px;color:#ddd">S4</div>
<div class="abs t" style="left:341px;top:336px;font-size:12.5px;color:#ddd">S3</div>
<div class="abs t" style="left:1765px;top:336px;width:100px;text-align:right;font-size:12.5px;color:#ddd">S3</div>
<div class="abs t" style="left:341px;top:363px;font-size:12.5px;color:#ddd">S2</div>
<div class="abs t" style="left:1765px;top:363px;width:100px;text-align:right;font-size:12.5px;color:#ddd">S2</div>
<div class="abs t" style="left:341px;top:392px;font-size:12.5px;color:#ddd">S1</div>
<div class="abs t" style="left:1765px;top:392px;width:100px;text-align:right;font-size:12.5px;color:#ddd">S1</div>
<div class="abs t" style="left:341px;top:420px;font-size:12.5px;color:#8c9ce0">S0</div>
<div class="abs t" style="left:1765px;top:420px;width:100px;text-align:right;font-size:12.5px;color:#8c9ce0">S0</div>
<div class="abs t" style="left:341px;top:443px;font-size:12.5px;color:#8c9ce0">-5 dB</div>
<div class="abs t" style="left:1765px;top:443px;width:100px;text-align:right;font-size:12.5px;color:#8c9ce0">-5 dB</div>
<div class="abs t" style="left:341px;top:467px;font-size:12.5px;color:#7c88c0">-10 dB</div>
<div class="abs t" style="left:1765px;top:467px;width:100px;text-align:right;font-size:12.5px;color:#7c88c0">-10 dB</div>
<div class="abs t" style="left:341px;top:490px;font-size:12.5px;color:#d8c0c0">-15 dB</div>
<div class="abs t" style="left:1765px;top:490px;width:100px;text-align:right;font-size:12.5px;color:#e8e8e8">-15 dB</div>
<div class="abs t" style="left:341px;top:513px;font-size:12.5px;color:#d8c0c0">-20 dB</div>
<div class="abs t" style="left:1765px;top:513px;width:100px;text-align:right;font-size:12.5px;color:#e8e8e8">-20 dB</div>
<div class="abs t" style="left:849px;top:513px;width:200px;text-align:center;font-size:16px;color:#f0f0f0">Ham 20m</div>
<div class="abs" style="left:1104px;top:173px;width:44px;height:321px;box-sizing:border-box;border-left:2px solid #28e028;border-right:2px solid #28e028;background:rgba(40,200,40,0.14)"></div>
<div class="abs" style="left:1104px;top:173px;width:44px;height:8px;background:linear-gradient(90deg,#20d020,#70ff70 50%,#20d020)"></div>
<div class="abs" style="left:1104px;top:181px;width:44px;height:37px;box-sizing:border-box;border-left:2px solid #28e028;border-right:2px solid #28e028;border-bottom:2px solid #30f030;background:#0a6e0a"></div>
<div class="abs" style="left:1116px;top:184px;width:20px;height:22px;background:#054a05"></div>
<div class="abs t" style="left:1104px;top:187px;width:44px;text-align:center;font-size:13px;font-weight:bold;color:#e8f8e8">1</div>
<div class="abs" style="left:1104px;top:486px;width:44px;height:8px;background:linear-gradient(90deg,#18c018,#88c888 50%,#18c018)"></div>
<svg class="abs" style="left:336px;top:545px" width="1535" height="26" viewBox="336 545 1535 26"><defs><linearGradient id="axg" x1="0" y1="0" x2="0" y2="1"><stop offset="0" stop-color="#6c6c6c"/><stop offset="0.55" stop-color="#464a4a"/><stop offset="1" stop-color="#202222"/></linearGradient></defs><rect x="336" y="545" width="1535" height="14" fill="url(#axg)"/><rect x="336" y="559" width="1535" height="12" fill="#000"/><line x1="336" y1="545.5" x2="1871" y2="545.5" stroke="#b8a8a8" stroke-width="1"/><line x1="350.0" y1="546" x2="350.0" y2="549" stroke="#e8e8e8" stroke-width="1"/><line x1="365.3" y1="546" x2="365.3" y2="549" stroke="#e8e8e8" stroke-width="1"/><line x1="380.7" y1="546" x2="380.7" y2="549" stroke="#e8e8e8" stroke-width="1"/><line x1="396.0" y1="546" x2="396.0" y2="549" stroke="#e8e8e8" stroke-width="1"/><line x1="411.4" y1="546" x2="411.4" y2="550" stroke="#e8e8e8" stroke-width="1"/><line x1="426.8" y1="546" x2="426.8" y2="549" stroke="#e8e8e8" stroke-width="1"/><line x1="442.1" y1="546" x2="442.1" y2="549" stroke="#e8e8e8" stroke-width="1"/><line x1="457.5" y1="546" x2="457.5" y2="549" stroke="#e8e8e8" stroke-width="1"/><line x1="472.8" y1="546" x2="472.8" y2="549" stroke="#e8e8e8" stroke-width="1"/><line x1="488.2" y1="546" x2="488.2" y2="552" stroke="#e8e8e8" stroke-width="1"/><line x1="503.6" y1="546" x2="503.6" y2="549" stroke="#e8e8e8" stroke-width="1"/><line x1="518.9" y1="546" x2="518.9" y2="549" stroke="#e8e8e8" stroke-width="1"/><line x1="534.3" y1="546" x2="534.3" y2="549" stroke="#e8e8e8" stroke-width="1"/><line x1="549.6" y1="546" x2="549.6" y2="549" stroke="#e8e8e8" stroke-width="1"/><line x1="565.0" y1="546" x2="565.0" y2="550" stroke="#e8e8e8" stroke-width="1"/><line x1="580.4" y1="546" x2="580.4" y2="549" stroke="#e8e8e8" stroke-width="1"/><line x1="595.7" y1="546" x2="595.7" y2="549" stroke="#e8e8e8" stroke-width="1"/><line x1="611.1" y1="546" x2="611.1" y2="549" stroke="#e8e8e8" stroke-width="1"/><line x1="626.4" y1="546" x2="626.4" y2="549" stroke="#e8e8e8" stroke-width="1"/><line x1="641.8" y1="546" x2="641.8" y2="552" stroke="#e8e8e8" stroke-width="1"/><line x1="657.2" y1="546" x2="657.2" y2="549" stroke="#e8e8e8" stroke-width="1"/><line x1="672.5" y1="546" x2="672.5" y2="549" stroke="#e8e8e8" stroke-width="1"/><line x1="687.9" y1="546" x2="687.9" y2="549" stroke="#e8e8e8" stroke-width="1"/><line x1="703.2" y1="546" x2="703.2" y2="549" stroke="#e8e8e8" stroke-width="1"/><line x1="718.6" y1="546" x2="718.6" y2="550" stroke="#e8e8e8" stroke-width="1"/><line x1="734.0" y1="546" x2="734.0" y2="549" stroke="#e8e8e8" stroke-width="1"/><line x1="749.3" y1="546" x2="749.3" y2="549" stroke="#e8e8e8" stroke-width="1"/><line x1="764.7" y1="546" x2="764.7" y2="549" stroke="#e8e8e8" stroke-width="1"/><line x1="780.0" y1="546" x2="780.0" y2="549" stroke="#e8e8e8" stroke-width="1"/><line x1="795.4" y1="546" x2="795.4" y2="552" stroke="#e8e8e8" stroke-width="1"/><line x1="810.8" y1="546" x2="810.8" y2="549" stroke="#e8e8e8" stroke-width="1"/><line x1="826.1" y1="546" x2="826.1" y2="549" stroke="#e8e8e8" stroke-width="1"/><line x1="841.5" y1="546" x2="841.5" y2="549" stroke="#e8e8e8" stroke-width="1"/><line x1="856.8" y1="546" x2="856.8" y2="549" stroke="#e8e8e8" stroke-width="1"/><line x1="872.2" y1="546" x2="872.2" y2="550" stroke="#e8e8e8" stroke-width="1"/><line x1="887.6" y1="546" x2="887.6" y2="549" stroke="#e8e8e8" stroke-width="1"/><line x1="902.9" y1="546" x2="902.9" y2="549" stroke="#e8e8e8" stroke-width="1"/><line x1="918.3" y1="546" x2="918.3" y2="549" stroke="#e8e8e8" stroke-width="1"/><line x1="933.6" y1="546" x2="933.6" y2="549" stroke="#e8e8e8" stroke-width="1"/><line x1="949.0" y1="546" x2="949.0" y2="552" stroke="#e8e8e8" stroke-width="1"/><line x1="964.4" y1="546" x2="964.4" y2="549" stroke="#e8e8e8" stroke-width="1"/><line x1="979.7" y1="546" x2="979.7" y2="549" stroke="#e8e8e8" stroke-width="1"/><line x1="995.1" y1="546" x2="995.1" y2="549" stroke="#e8e8e8" stroke-width="1"/><line x1="1010.4" y1="546" x2="1010.4" y2="549" stroke="#e8e8e8" stroke-width="1"/><line x1="1025.8" y1="546" x2="1025.8" y2="550" stroke="#e8e8e8" stroke-width="1"/><line x1="1041.2" y1="546" x2="1041.2" y2="549" stroke="#e8e8e8" stroke-width="1"/><line x1="1056.5" y1="546" x2="1056.5" y2="549" stroke="#e8e8e8" stroke-width="1"/><line x1="1071.9" y1="546" x2="1071.9" y2="549" stroke="#e8e8e8" stroke-width="1"/><line x1="1087.2" y1="546" x2="1087.2" y2="549" stroke="#e8e8e8" stroke-width="1"/><line x1="1102.6" y1="546" x2="1102.6" y2="552" stroke="#e8e8e8" stroke-width="1"/><line x1="1118.0" y1="546" x2="1118.0" y2="549" stroke="#e8e8e8" stroke-width="1"/><line x1="1133.3" y1="546" x2="1133.3" y2="549" stroke="#e8e8e8" stroke-width="1"/><line x1="1148.7" y1="546" x2="1148.7" y2="549" stroke="#e8e8e8" stroke-width="1"/><line x1="1164.0" y1="546" x2="1164.0" y2="549" stroke="#e8e8e8" stroke-width="1"/><line x1="1179.4" y1="546" x2="1179.4" y2="550" stroke="#e8e8e8" stroke-width="1"/><line x1="1194.8" y1="546" x2="1194.8" y2="549" stroke="#e8e8e8" stroke-width="1"/><line x1="1210.1" y1="546" x2="1210.1" y2="549" stroke="#e8e8e8" stroke-width="1"/><line x1="1225.5" y1="546" x2="1225.5" y2="549" stroke="#e8e8e8" stroke-width="1"/><line x1="1240.8" y1="546" x2="1240.8" y2="549" stroke="#e8e8e8" stroke-width="1"/><line x1="1256.2" y1="546" x2="1256.2" y2="552" stroke="#e8e8e8" stroke-width="1"/><line x1="1271.6" y1="546" x2="1271.6" y2="549" stroke="#e8e8e8" stroke-width="1"/><line x1="1286.9" y1="546" x2="1286.9" y2="549" stroke="#e8e8e8" stroke-width="1"/><line x1="1302.3" y1="546" x2="1302.3" y2="549" stroke="#e8e8e8" stroke-width="1"/><line x1="1317.6" y1="546" x2="1317.6" y2="549" stroke="#e8e8e8" stroke-width="1"/><line x1="1333.0" y1="546" x2="1333.0" y2="550" stroke="#e8e8e8" stroke-width="1"/><line x1="1348.4" y1="546" x2="1348.4" y2="549" stroke="#e8e8e8" stroke-width="1"/><line x1="1363.7" y1="546" x2="1363.7" y2="549" stroke="#e8e8e8" stroke-width="1"/><line x1="1379.1" y1="546" x2="1379.1" y2="549" stroke="#e8e8e8" stroke-width="1"/><line x1="1394.4" y1="546" x2="1394.4" y2="549" stroke="#e8e8e8" stroke-width="1"/><line x1="1409.8" y1="546" x2="1409.8" y2="552" stroke="#e8e8e8" stroke-width="1"/><line x1="1425.2" y1="546" x2="1425.2" y2="549" stroke="#e8e8e8" stroke-width="1"/><line x1="1440.5" y1="546" x2="1440.5" y2="549" stroke="#e8e8e8" stroke-width="1"/><line x1="1455.9" y1="546" x2="1455.9" y2="549" stroke="#e8e8e8" stroke-width="1"/><line x1="1471.2" y1="546" x2="1471.2" y2="549" stroke="#e8e8e8" stroke-width="1"/><line x1="1486.6" y1="546" x2="1486.6" y2="550" stroke="#e8e8e8" stroke-width="1"/><line x1="1502.0" y1="546" x2="1502.0" y2="549" stroke="#e8e8e8" stroke-width="1"/><line x1="1517.3" y1="546" x2="1517.3" y2="549" stroke="#e8e8e8" stroke-width="1"/><line x1="1532.7" y1="546" x2="1532.7" y2="549" stroke="#e8e8e8" stroke-width="1"/><line x1="1548.0" y1="546" x2="1548.0" y2="549" stroke="#e8e8e8" stroke-width="1"/><line x1="1563.4" y1="546" x2="1563.4" y2="552" stroke="#e8e8e8" stroke-width="1"/><line x1="1578.8" y1="546" x2="1578.8" y2="549" stroke="#e8e8e8" stroke-width="1"/><line x1="1594.1" y1="546" x2="1594.1" y2="549" stroke="#e8e8e8" stroke-width="1"/><line x1="1609.5" y1="546" x2="1609.5" y2="549" stroke="#e8e8e8" stroke-width="1"/><line x1="1624.8" y1="546" x2="1624.8" y2="549" stroke="#e8e8e8" stroke-width="1"/><line x1="1640.2" y1="546" x2="1640.2" y2="550" stroke="#e8e8e8" stroke-width="1"/><line x1="1655.6" y1="546" x2="1655.6" y2="549" stroke="#e8e8e8" stroke-width="1"/><line x1="1670.9" y1="546" x2="1670.9" y2="549" stroke="#e8e8e8" stroke-width="1"/><line x1="1686.3" y1="546" x2="1686.3" y2="549" stroke="#e8e8e8" stroke-width="1"/><line x1="1701.6" y1="546" x2="1701.6" y2="549" stroke="#e8e8e8" stroke-width="1"/><line x1="1717.0" y1="546" x2="1717.0" y2="552" stroke="#e8e8e8" stroke-width="1"/><line x1="1732.4" y1="546" x2="1732.4" y2="549" stroke="#e8e8e8" stroke-width="1"/><line x1="1747.7" y1="546" x2="1747.7" y2="549" stroke="#e8e8e8" stroke-width="1"/><line x1="1763.1" y1="546" x2="1763.1" y2="549" stroke="#e8e8e8" stroke-width="1"/><line x1="1778.4" y1="546" x2="1778.4" y2="549" stroke="#e8e8e8" stroke-width="1"/><line x1="1793.8" y1="546" x2="1793.8" y2="550" stroke="#e8e8e8" stroke-width="1"/><line x1="1809.2" y1="546" x2="1809.2" y2="549" stroke="#e8e8e8" stroke-width="1"/><line x1="1824.5" y1="546" x2="1824.5" y2="549" stroke="#e8e8e8" stroke-width="1"/><line x1="1839.9" y1="546" x2="1839.9" y2="549" stroke="#e8e8e8" stroke-width="1"/><line x1="1855.2" y1="546" x2="1855.2" y2="549" stroke="#e8e8e8" stroke-width="1"/><line x1="1870.6" y1="546" x2="1870.6" y2="552" stroke="#e8e8e8" stroke-width="1"/></svg>
<div class="abs t" style="left:448.2px;top:555px;width:80px;text-align:center;font-size:12.5px;color:#f4f4f4">14.280</div>
<div class="abs t" style="left:601.8px;top:555px;width:80px;text-align:center;font-size:12.5px;color:#f4f4f4">14.290</div>
<div class="abs t" style="left:755.4px;top:555px;width:80px;text-align:center;font-size:12.5px;color:#f4f4f4">14.300</div>
<div class="abs t" style="left:909.0px;top:555px;width:80px;text-align:center;font-size:12.5px;color:#f4f4f4">14.310</div>
<div class="abs t" style="left:1062.6px;top:555px;width:80px;text-align:center;font-size:12.5px;color:#f4f4f4">14.320</div>
<div class="abs t" style="left:1216.2px;top:555px;width:80px;text-align:center;font-size:12.5px;color:#f4f4f4">14.330</div>
<div class="abs t" style="left:1369.8px;top:555px;width:80px;text-align:center;font-size:12.5px;color:#f4f4f4">14.340</div>
<div class="abs t" style="left:1523.4px;top:555px;width:80px;text-align:center;font-size:12.5px;color:#f4f4f4">14.350</div>
<div class="abs t" style="left:1677.0px;top:555px;width:80px;text-align:center;font-size:12.5px;color:#f4f4f4">14.360</div>
<div class="abs" style="left:336px;top:571px;width:1535px;height:6px;background:#f6f6f6"></div>
<div class="abs" style="left:1072px;top:573px;width:64px;height:2px;background:repeating-linear-gradient(90deg,#777 0 2px,transparent 2px 4px)"></div>
<svg class="abs" style="left:412px;top:176px" width="363" height="146" viewBox="412 176 363 146">
<defs><radialGradient id="mg" cx="593" cy="322" r="210" gradientUnits="userSpaceOnUse" gradientTransform="translate(593 322) scale(1.2 0.9) translate(-593 -322)">
<stop offset="0" stop-color="#fffce8"/><stop offset="0.12" stop-color="#fff4a8"/><stop offset="0.55" stop-color="#fde38a"/><stop offset="1" stop-color="#f8c878"/></radialGradient>
<linearGradient id="s4g" x1="0" y1="0" x2="0" y2="1"><stop offset="0" stop-color="#b8d838"/><stop offset="0.5" stop-color="#c8e440"/><stop offset="1" stop-color="#a0c020"/></linearGradient>
<clipPath id="mclip"><rect x="413" y="177" width="361" height="144"/></clipPath></defs>
<rect x="412.5" y="176.5" width="361" height="144" fill="url(#mg)" stroke="#8a7a58" stroke-width="1.5"/>
<g clip-path="url(#mclip)">
<path d="M449 248.5 A433 433 0 0 1 594 223" stroke="#222" stroke-width="3.2" fill="none"/>
<path d="M601 223 A433 433 0 0 1 738 249" stroke="#c00000" stroke-width="5" fill="none"/>
<path d="M473 237.5 L470 224 M489.4 233 L487.5 225 M503 230 L500 216 M533 226 L531 212 M548 225 L547 216 M563 224 L562 209 M578.4 223 L578 214 M593.5 223 L593.5 207" stroke="#333" stroke-width="2.8"/>
<path d="M615 223 L615 216 M641 224 L642 209 M669 228 L670 219 M694 233 L696 218 M717 238 L719 230 M739 249 L745 236" stroke="#c00000" stroke-width="2.2"/>
<line x1="458" y1="224" x2="489" y2="322" stroke="#7080a0" stroke-width="1"/>
<line x1="494.6" y1="210" x2="519.6" y2="322" stroke="#b8c040" stroke-width="1.2"/>
<line x1="515.6" y1="201" x2="536.5" y2="322" stroke="#e01010" stroke-width="1.8"/>
</g>
<rect x="554.5" y="272.5" width="78" height="29" rx="4" fill="url(#s4g)" stroke="#7a9030" stroke-width="1"/>
<text x="593.5" y="294" text-anchor="middle" font-family="Liberation Sans" font-weight="bold" font-size="18" fill="#111">S4</text>
<g font-family="Liberation Sans" font-style="italic" font-size="17" fill="#444" text-anchor="middle">
<text x="472" y="219">1</text><text x="502" y="210">3</text><text x="532" y="205">5</text><text x="563" y="202">7</text><text x="594" y="200">9</text>
<text x="641" y="203">+20</text><text x="694" y="212">+40</text><text x="745" y="227">+60</text></g>
<text x="428" y="197" text-anchor="middle" font-family="Liberation Sans" font-size="16" fill="#333">S</text>
<text x="752" y="197" text-anchor="middle" font-family="Liberation Sans" font-size="16" fill="#333">dB</text>
</svg>
<div class="abs" style="left:336px;top:577px;width:1535px;height:378px;background:#020226"></div>
<svg class="abs" style="left:336px;top:577px" width="1535" height="378" viewBox="336 577 1535 378"><rect x="1117.2" y="614" width="1.5" height="1.3" fill="#4a50a0" opacity="0.35"/><rect x="1121.3" y="622" width="1" height="1.3" fill="#4a50a0" opacity="0.60"/><rect x="1110.5" y="650" width="1.5" height="1.3" fill="#4a50a0" opacity="0.60"/><rect x="1113.3" y="666" width="2" height="1.3" fill="#4a50a0" opacity="0.55"/><rect x="1120.7" y="710" width="3" height="1.3" fill="#4a50a0" opacity="0.35"/><rect x="1110.2" y="718" width="1" height="1.3" fill="#4a50a0" opacity="0.41"/><rect x="1115.3" y="726" width="3" height="1.3" fill="#4a50a0" opacity="0.51"/><rect x="1119.4" y="734" width="2" height="1.3" fill="#4a50a0" opacity="0.34"/><rect x="1113.4" y="750" width="1" height="1.3" fill="#4a50a0" opacity="0.31"/><rect x="1117.1" y="766" width="1.5" height="1.3" fill="#4a50a0" opacity="0.51"/><rect x="1122.1" y="782" width="2" height="1.3" fill="#4a50a0" opacity="0.80"/><rect x="1112.6" y="786" width="1" height="1.3" fill="#4a50a0" opacity="0.32"/><rect x="1116.2" y="790" width="1" height="1.3" fill="#4a50a0" opacity="0.69"/><rect x="1111.3" y="802" width="1.5" height="1.3" fill="#4a50a0" opacity="0.31"/><rect x="1118.2" y="814" width="1.5" height="1.3" fill="#4a50a0" opacity="0.73"/><rect x="1112.2" y="818" width="1.5" height="1.3" fill="#4a50a0" opacity="0.71"/><rect x="1120.4" y="826" width="1.5" height="1.3" fill="#4a50a0" opacity="0.64"/><rect x="1110.7" y="838" width="1" height="1.3" fill="#4a50a0" opacity="0.32"/><rect x="1120.1" y="870" width="1" height="1.3" fill="#4a50a0" opacity="0.36"/><rect x="1113.0" y="886" width="1.5" height="1.3" fill="#4a50a0" opacity="0.67"/><rect x="1115.8" y="890" width="1.5" height="1.3" fill="#4a50a0" opacity="0.33"/><rect x="1115.2" y="894" width="1.5" height="1.3" fill="#4a50a0" opacity="0.35"/><rect x="1116.3" y="898" width="2" height="1.3" fill="#4a50a0" opacity="0.63"/><rect x="1110.5" y="910" width="1" height="1.3" fill="#4a50a0" opacity="0.54"/><rect x="1118.4" y="922" width="1" height="1.3" fill="#4a50a0" opacity="0.54"/><rect x="1117.6" y="938" width="1" height="1.3" fill="#4a50a0" opacity="0.75"/><rect x="1276.6" y="640" width="1.5" height="3" fill="#7c86e8" opacity="0.89"/><rect x="1275.7" y="646" width="2" height="1.3" fill="#8088e0" opacity="0.74"/><rect x="1277.0" y="649" width="1" height="1.3" fill="#8088e0" opacity="0.46"/><rect x="1268.3" y="649" width="1" height="1.3" fill="#8088e0" opacity="0.55"/><rect x="1271.6" y="652" width="1.5" height="1.3" fill="#8088e0" opacity="0.56"/><rect x="1276.9" y="652" width="1.5" height="3" fill="#7c86e8" opacity="0.72"/><rect x="1270.6" y="658" width="1.5" height="1.3" fill="#8088e0" opacity="0.59"/><rect x="1274.0" y="658" width="1" height="1.3" fill="#8088e0" opacity="0.66"/><rect x="1273.4" y="661" width="2" height="1.3" fill="#8088e0" opacity="0.76"/><rect x="1276.3" y="661" width="1.5" height="3" fill="#7c86e8" opacity="0.82"/><rect x="1276.2" y="664" width="1.5" height="3" fill="#7c86e8" opacity="0.81"/><rect x="1277.2" y="670" width="2" height="1.3" fill="#8088e0" opacity="0.42"/><rect x="1268.6" y="670" width="1" height="1.3" fill="#8088e0" opacity="0.52"/><rect x="1273.7" y="673" width="1.5" height="1.3" fill="#8088e0" opacity="0.66"/><rect x="1270.7" y="676" width="2" height="1.3" fill="#8088e0" opacity="0.57"/><rect x="1278.2" y="679" width="1.5" height="1.3" fill="#8088e0" opacity="0.34"/><rect x="1273.4" y="679" width="1" height="1.3" fill="#8088e0" opacity="0.49"/><rect x="1276.7" y="685" width="1" height="1.3" fill="#8088e0" opacity="0.41"/><rect x="1276.6" y="685" width="1.5" height="3" fill="#7c86e8" opacity="0.64"/><rect x="1273.3" y="688" width="3" height="1.3" fill="#8088e0" opacity="0.68"/><rect x="1275.1" y="688" width="1.5" height="3" fill="#7c86e8" opacity="0.86"/><rect x="1277.6" y="691" width="1.5" height="1.3" fill="#8088e0" opacity="0.57"/><rect x="1274.2" y="700" width="2" height="1.3" fill="#8088e0" opacity="0.46"/><rect x="1278.2" y="703" width="2" height="1.3" fill="#8088e0" opacity="0.59"/><rect x="1274.4" y="703" width="1" height="1.3" fill="#8088e0" opacity="0.60"/><rect x="1279.6" y="703" width="3" height="1.3" fill="#8088e0" opacity="0.57"/><rect x="1269.1" y="706" width="1.5" height="1.3" fill="#8088e0" opacity="0.33"/><rect x="1273.2" y="709" width="3" height="1.3" fill="#8088e0" opacity="0.56"/><rect x="1273.0" y="709" width="1" height="1.3" fill="#8088e0" opacity="0.76"/><rect x="1276.6" y="709" width="1.5" height="3" fill="#7c86e8" opacity="0.51"/><rect x="1270.7" y="712" width="2" height="1.3" fill="#8088e0" opacity="0.46"/><rect x="1276.8" y="712" width="1" height="1.3" fill="#8088e0" opacity="0.73"/><rect x="1275.6" y="715" width="1.5" height="1.3" fill="#8088e0" opacity="0.57"/><rect x="1270.6" y="718" width="1.5" height="1.3" fill="#8088e0" opacity="0.42"/><rect x="1280.0" y="721" width="1" height="1.3" fill="#8088e0" opacity="0.37"/><rect x="1276.5" y="721" width="1.5" height="3" fill="#7c86e8" opacity="0.62"/><rect x="1278.0" y="724" width="3" height="1.3" fill="#8088e0" opacity="0.57"/><rect x="1275.5" y="724" width="1" height="1.3" fill="#8088e0" opacity="0.35"/><rect x="1276.6" y="724" width="1.5" height="3" fill="#7c86e8" opacity="0.66"/><rect x="1277.1" y="730" width="3" height="1.3" fill="#8088e0" opacity="0.37"/><rect x="1270.4" y="730" width="1.5" height="1.3" fill="#8088e0" opacity="0.80"/><rect x="1268.7" y="733" width="3" height="1.3" fill="#8088e0" opacity="0.34"/><rect x="1272.7" y="733" width="3" height="1.3" fill="#8088e0" opacity="0.56"/><rect x="1276.4" y="733" width="1.5" height="3" fill="#7c86e8" opacity="0.88"/><rect x="1273.4" y="736" width="2" height="1.3" fill="#8088e0" opacity="0.50"/><rect x="1270.0" y="736" width="1" height="1.3" fill="#8088e0" opacity="0.46"/><rect x="1278.1" y="736" width="3" height="1.3" fill="#8088e0" opacity="0.58"/><rect x="1275.0" y="736" width="2" height="1.3" fill="#8088e0" opacity="0.70"/><rect x="1276.8" y="736" width="1.5" height="3" fill="#7c86e8" opacity="0.83"/><rect x="1272.1" y="745" width="3" height="1.3" fill="#8088e0" opacity="0.35"/><rect x="1275.5" y="745" width="1.5" height="3" fill="#7c86e8" opacity="0.93"/><rect x="1272.9" y="748" width="1.5" height="1.3" fill="#8088e0" opacity="0.57"/><rect x="1275.4" y="751" width="1.5" height="1.3" fill="#8088e0" opacity="0.43"/><rect x="1275.1" y="751" width="1.5" height="3" fill="#7c86e8" opacity="0.59"/><rect x="1271.0" y="754" width="2" height="1.3" fill="#8088e0" opacity="0.58"/><rect x="1275.2" y="757" width="1" height="1.3" fill="#8088e0" opacity="0.49"/><rect x="1316.1" y="654" width="1" height="1.3" fill="#5058b0" opacity="0.62"/><rect x="1304.2" y="666" width="3" height="1.3" fill="#5058b0" opacity="0.33"/><rect x="1319.5" y="678" width="3" height="1.3" fill="#5058b0" opacity="0.66"/><rect x="1298.6" y="690" width="3" height="1.3" fill="#5058b0" opacity="0.37"/><rect x="1306.8" y="706" width="1" height="1.3" fill="#5058b0" opacity="0.40"/><rect x="1309.7" y="710" width="1" height="1.3" fill="#5058b0" opacity="0.48"/><rect x="1306.8" y="714" width="2" height="1.3" fill="#5058b0" opacity="0.62"/><rect x="1303.5" y="734" width="1.5" height="1.3" fill="#5058b0" opacity="0.42"/><rect x="1319.2" y="738" width="2" height="1.3" fill="#5058b0" opacity="0.44"/><rect x="1303.2" y="754" width="1.5" height="1.3" fill="#5058b0" opacity="0.39"/><rect x="1297.6" y="774" width="2" height="1.3" fill="#5058b0" opacity="0.43"/><rect x="1297.0" y="778" width="1.5" height="1.3" fill="#5058b0" opacity="0.57"/><rect x="1298.2" y="782" width="1.5" height="1.3" fill="#5058b0" opacity="0.58"/><rect x="1304.9" y="798" width="1.5" height="1.3" fill="#5058b0" opacity="0.72"/><rect x="1299.1" y="802" width="1.5" height="1.3" fill="#5058b0" opacity="0.52"/><rect x="1300.0" y="814" width="2" height="1.3" fill="#5058b0" opacity="0.45"/><rect x="1313.0" y="826" width="1" height="1.3" fill="#5058b0" opacity="0.53"/><rect x="1332.2" y="606" width="1" height="1.3" fill="#8890f0" opacity="0.65"/><rect x="1339.8" y="606" width="1.5" height="3" fill="#7c86e8" opacity="0.60"/><rect x="1338.4" y="612" width="1.5" height="3" fill="#7c86e8" opacity="0.94"/><rect x="1342.6" y="615" width="1" height="1.3" fill="#8890f0" opacity="0.48"/><rect x="1339.1" y="615" width="1.5" height="3" fill="#7c86e8" opacity="0.86"/><rect x="1341.2" y="618" width="2" height="1.3" fill="#8890f0" opacity="0.71"/><rect x="1338.3" y="618" width="1.5" height="3" fill="#7c86e8" opacity="0.63"/><rect x="1342.8" y="621" width="3" height="1.3" fill="#8890f0" opacity="0.33"/><rect x="1327.6" y="621" width="1" height="1.3" fill="#8890f0" opacity="0.75"/><rect x="1338.7" y="621" width="1.5" height="1.3" fill="#8890f0" opacity="0.35"/><rect x="1338.7" y="624" width="1.5" height="3" fill="#7c86e8" opacity="0.86"/><rect x="1335.8" y="627" width="1" height="1.3" fill="#8890f0" opacity="0.65"/><rect x="1339.5" y="633" width="1.5" height="3" fill="#7c86e8" opacity="0.95"/><rect x="1330.1" y="636" width="3" height="1.3" fill="#8890f0" opacity="0.56"/><rect x="1344.4" y="639" width="1" height="1.3" fill="#8890f0" opacity="0.68"/><rect x="1335.6" y="639" width="1" height="1.3" fill="#8890f0" opacity="0.46"/><rect x="1333.2" y="639" width="1.5" height="1.3" fill="#8890f0" opacity="0.60"/><rect x="1338.9" y="639" width="1.5" height="3" fill="#7c86e8" opacity="0.90"/><rect x="1343.3" y="648" width="3" height="1.3" fill="#8890f0" opacity="0.32"/><rect x="1338.5" y="648" width="1.5" height="3" fill="#7c86e8" opacity="0.95"/><rect x="1335.5" y="651" width="2" height="1.3" fill="#8890f0" opacity="0.53"/><rect x="1344.2" y="654" width="1.5" height="1.3" fill="#8890f0" opacity="0.62"/><rect x="1338.3" y="654" width="1.5" height="3" fill="#7c86e8" opacity="0.85"/><rect x="1342.4" y="657" width="1.5" height="1.3" fill="#8890f0" opacity="0.71"/><rect x="1331.4" y="657" width="1" height="1.3" fill="#8890f0" opacity="0.74"/><rect x="1341.0" y="657" width="2" height="1.3" fill="#8890f0" opacity="0.31"/><rect x="1329.9" y="657" width="1" height="1.3" fill="#8890f0" opacity="0.69"/><rect x="1338.1" y="657" width="1.5" height="3" fill="#7c86e8" opacity="0.69"/><rect x="1327.5" y="663" width="1.5" height="1.3" fill="#8890f0" opacity="0.35"/><rect x="1333.5" y="666" width="3" height="1.3" fill="#8890f0" opacity="0.42"/><rect x="1340.0" y="666" width="1.5" height="3" fill="#7c86e8" opacity="0.86"/><rect x="1338.3" y="669" width="2" height="1.3" fill="#8890f0" opacity="0.61"/><rect x="1329.8" y="672" width="3" height="1.3" fill="#8890f0" opacity="0.67"/><rect x="1339.7" y="672" width="1.5" height="3" fill="#7c86e8" opacity="0.54"/><rect x="1327.9" y="675" width="1.5" height="1.3" fill="#8890f0" opacity="0.39"/><rect x="1330.5" y="675" width="1.5" height="1.3" fill="#8890f0" opacity="0.79"/><rect x="1339.5" y="675" width="1.5" height="3" fill="#7c86e8" opacity="0.65"/><rect x="1330.1" y="678" width="1.5" height="1.3" fill="#8890f0" opacity="0.71"/><rect x="1338.0" y="678" width="1.5" height="3" fill="#7c86e8" opacity="0.68"/><rect x="1338.7" y="681" width="1.5" height="3" fill="#7c86e8" opacity="0.65"/><rect x="1333.6" y="684" width="2" height="1.3" fill="#8890f0" opacity="0.69"/><rect x="1341.3" y="684" width="2" height="1.3" fill="#8890f0" opacity="0.57"/><rect x="1339.0" y="684" width="1.5" height="3" fill="#7c86e8" opacity="0.56"/><rect x="1339.9" y="687" width="1.5" height="3" fill="#7c86e8" opacity="0.78"/><rect x="1327.7" y="690" width="1.5" height="1.3" fill="#8890f0" opacity="0.54"/><rect x="1343.5" y="690" width="2" height="1.3" fill="#8890f0" opacity="0.53"/><rect x="1345.5" y="690" width="1.5" height="1.3" fill="#8890f0" opacity="0.42"/><rect x="1344.3" y="693" width="1.5" height="1.3" fill="#8890f0" opacity="0.75"/><rect x="1339.6" y="693" width="1.5" height="3" fill="#7c86e8" opacity="0.63"/><rect x="1337.0" y="696" width="1" height="1.3" fill="#8890f0" opacity="0.53"/><rect x="1339.6" y="696" width="1.5" height="3" fill="#7c86e8" opacity="0.92"/><rect x="1341.1" y="699" width="3" height="1.3" fill="#8890f0" opacity="0.61"/><rect x="1334.2" y="699" width="1" height="1.3" fill="#8890f0" opacity="0.37"/><rect x="1339.1" y="699" width="1.5" height="3" fill="#7c86e8" opacity="0.58"/><rect x="1339.3" y="702" width="1.5" height="3" fill="#7c86e8" opacity="0.57"/><rect x="1338.9" y="711" width="1.5" height="3" fill="#7c86e8" opacity="0.91"/><rect x="1340.5" y="714" width="3" height="1.3" fill="#8890f0" opacity="0.67"/><rect x="1328.5" y="717" width="3" height="1.3" fill="#8890f0" opacity="0.42"/><rect x="1344.2" y="717" width="2" height="1.3" fill="#8890f0" opacity="0.63"/><rect x="1339.1" y="720" width="1.5" height="3" fill="#7c86e8" opacity="0.57"/><rect x="1327.4" y="723" width="1.5" height="1.3" fill="#8890f0" opacity="0.36"/><rect x="1338.5" y="723" width="1.5" height="3" fill="#7c86e8" opacity="0.63"/><rect x="1343.9" y="726" width="3" height="1.3" fill="#8890f0" opacity="0.37"/><rect x="1338.6" y="726" width="1.5" height="3" fill="#7c86e8" opacity="0.65"/><rect x="1341.5" y="729" width="3" height="1.3" fill="#8890f0" opacity="0.74"/><rect x="1343.2" y="729" width="1" height="1.3" fill="#8890f0" opacity="0.40"/><rect x="1339.8" y="729" width="1.5" height="3" fill="#7c86e8" opacity="0.95"/><rect x="1338.6" y="732" width="1.5" height="1.3" fill="#8890f0" opacity="0.77"/><rect x="1343.2" y="738" width="1" height="1.3" fill="#8890f0" opacity="0.66"/><rect x="1329.6" y="738" width="1.5" height="1.3" fill="#8890f0" opacity="0.55"/><rect x="1336.3" y="741" width="2" height="1.3" fill="#8890f0" opacity="0.75"/><rect x="1330.5" y="741" width="1.5" height="1.3" fill="#8890f0" opacity="0.62"/><rect x="1345.7" y="741" width="3" height="1.3" fill="#8890f0" opacity="0.76"/><rect x="1344.1" y="741" width="1" height="1.3" fill="#8890f0" opacity="0.60"/><rect x="1338.5" y="741" width="1.5" height="3" fill="#7c86e8" opacity="0.86"/><rect x="1331.7" y="744" width="1.5" height="1.3" fill="#8890f0" opacity="0.42"/><rect x="1343.9" y="744" width="1" height="1.3" fill="#8890f0" opacity="0.61"/><rect x="1343.8" y="747" width="1" height="1.3" fill="#8890f0" opacity="0.39"/><rect x="1341.6" y="753" width="1.5" height="1.3" fill="#8890f0" opacity="0.36"/><rect x="1338.4" y="756" width="1.5" height="3" fill="#7c86e8" opacity="0.94"/><rect x="1335.0" y="759" width="1.5" height="1.3" fill="#8890f0" opacity="0.46"/><rect x="1328.3" y="762" width="1.5" height="1.3" fill="#8890f0" opacity="0.58"/><rect x="1338.6" y="762" width="1.5" height="3" fill="#7c86e8" opacity="0.52"/><rect x="1339.6" y="765" width="1.5" height="3" fill="#7c86e8" opacity="0.58"/><rect x="1339.8" y="768" width="3" height="1.3" fill="#8890f0" opacity="0.33"/><rect x="1345.4" y="768" width="1" height="1.3" fill="#8890f0" opacity="0.36"/><rect x="1340.9" y="771" width="1" height="1.3" fill="#8890f0" opacity="0.30"/><rect x="1337.1" y="771" width="3" height="1.3" fill="#8890f0" opacity="0.51"/><rect x="1338.1" y="771" width="1.5" height="3" fill="#7c86e8" opacity="0.95"/><rect x="1338.9" y="774" width="1.5" height="3" fill="#7c86e8" opacity="0.92"/><rect x="1334.1" y="777" width="1" height="1.3" fill="#8890f0" opacity="0.67"/><rect x="1343.2" y="780" width="1.5" height="1.3" fill="#8890f0" opacity="0.49"/><rect x="1338.7" y="780" width="1.5" height="3" fill="#7c86e8" opacity="0.58"/><rect x="1330.1" y="783" width="1.5" height="1.3" fill="#8890f0" opacity="0.60"/><rect x="1335.7" y="786" width="3" height="1.3" fill="#8890f0" opacity="0.51"/><rect x="1331.5" y="786" width="2" height="1.3" fill="#8890f0" opacity="0.61"/><rect x="1328.1" y="789" width="1" height="1.3" fill="#8890f0" opacity="0.38"/><rect x="1332.4" y="792" width="3" height="1.3" fill="#8890f0" opacity="0.52"/><rect x="1336.3" y="795" width="1.5" height="1.3" fill="#8890f0" opacity="0.32"/><rect x="1338.8" y="795" width="1.5" height="3" fill="#7c86e8" opacity="0.74"/><rect x="1340.1" y="798" width="2" height="1.3" fill="#8890f0" opacity="0.46"/><rect x="1338.9" y="798" width="1.5" height="3" fill="#7c86e8" opacity="0.56"/><rect x="1333.4" y="801" width="1.5" height="1.3" fill="#8890f0" opacity="0.37"/><rect x="1338.0" y="801" width="1.5" height="3" fill="#7c86e8" opacity="0.84"/><rect x="1343.1" y="804" width="2" height="1.3" fill="#8890f0" opacity="0.63"/><rect x="1339.3" y="804" width="1.5" height="3" fill="#7c86e8" opacity="0.54"/><rect x="1333.7" y="807" width="2" height="1.3" fill="#8890f0" opacity="0.44"/><rect x="1341.4" y="810" width="2" height="1.3" fill="#8890f0" opacity="0.63"/><rect x="1332.8" y="810" width="3" height="1.3" fill="#8890f0" opacity="0.70"/><rect x="1344.2" y="813" width="3" height="1.3" fill="#8890f0" opacity="0.44"/><rect x="1326.7" y="816" width="2" height="1.3" fill="#8890f0" opacity="0.75"/><rect x="1339.3" y="816" width="1.5" height="3" fill="#7c86e8" opacity="0.58"/><rect x="1339.7" y="822" width="1.5" height="3" fill="#7c86e8" opacity="0.90"/><rect x="1328.7" y="825" width="2" height="1.3" fill="#8890f0" opacity="0.45"/><rect x="1338.4" y="825" width="1.5" height="3" fill="#7c86e8" opacity="0.60"/><rect x="1336.9" y="828" width="3" height="1.3" fill="#8890f0" opacity="0.30"/><rect x="1342.5" y="831" width="2" height="1.3" fill="#8890f0" opacity="0.43"/><rect x="1326.4" y="831" width="1.5" height="1.3" fill="#8890f0" opacity="0.65"/><rect x="1339.2" y="831" width="1.5" height="3" fill="#7c86e8" opacity="0.72"/><rect x="1338.5" y="834" width="1.5" height="3" fill="#7c86e8" opacity="0.65"/><rect x="1336.3" y="837" width="1.5" height="1.3" fill="#8890f0" opacity="0.74"/><rect x="1338.4" y="840" width="3" height="1.3" fill="#8890f0" opacity="0.73"/><rect x="1331.1" y="840" width="3" height="1.3" fill="#8890f0" opacity="0.43"/><rect x="1339.4" y="840" width="1.5" height="3" fill="#7c86e8" opacity="0.58"/><rect x="1337.3" y="843" width="1.5" height="1.3" fill="#8890f0" opacity="0.58"/><rect x="1333.5" y="846" width="2" height="1.3" fill="#8890f0" opacity="0.42"/><rect x="1326.3" y="846" width="1.5" height="1.3" fill="#8890f0" opacity="0.43"/><rect x="1329.1" y="849" width="1" height="1.3" fill="#8890f0" opacity="0.74"/><rect x="1333.1" y="849" width="1" height="1.3" fill="#8890f0" opacity="0.50"/><rect x="1578.5" y="719" width="3" height="1.3" fill="#5058b0" opacity="0.70"/><rect x="1579.4" y="763" width="1" height="1.3" fill="#5058b0" opacity="0.58"/><rect x="1585.1" y="779" width="2" height="1.3" fill="#5058b0" opacity="0.58"/><rect x="1583.0" y="783" width="2" height="1.3" fill="#5058b0" opacity="0.46"/><rect x="1579.6" y="787" width="2" height="1.3" fill="#5058b0" opacity="0.58"/><rect x="1578.1" y="791" width="2" height="1.3" fill="#5058b0" opacity="0.64"/><rect x="1580.7" y="795" width="1.5" height="1.3" fill="#5058b0" opacity="0.80"/><rect x="1584.9" y="799" width="3" height="1.3" fill="#5058b0" opacity="0.32"/><rect x="1582.9" y="815" width="2" height="1.3" fill="#5058b0" opacity="0.44"/><rect x="1716.1" y="607" width="1.5" height="1.3" fill="#7078d0" opacity="0.57"/><rect x="1718.2" y="616" width="1" height="1.3" fill="#7078d0" opacity="0.56"/><rect x="1716.8" y="619" width="2" height="1.3" fill="#7078d0" opacity="0.31"/><rect x="1719.8" y="649" width="3" height="1.3" fill="#7078d0" opacity="0.72"/><rect x="1689.7" y="642" width="2" height="1.3" fill="#8088e8" opacity="0.49"/><rect x="1694.7" y="648" width="1.5" height="1.3" fill="#8088e8" opacity="0.41"/><rect x="1708.2" y="648" width="1.5" height="3" fill="#7c86e8" opacity="0.56"/><rect x="1699.1" y="651" width="3" height="1.3" fill="#8088e8" opacity="0.35"/><rect x="1690.5" y="654" width="1" height="1.3" fill="#8088e8" opacity="0.68"/><rect x="1711.7" y="654" width="3" height="1.3" fill="#8088e8" opacity="0.54"/><rect x="1696.1" y="657" width="2" height="1.3" fill="#8088e8" opacity="0.74"/><rect x="1705.0" y="657" width="3" height="1.3" fill="#8088e8" opacity="0.76"/><rect x="1709.2" y="657" width="1.5" height="3" fill="#7c86e8" opacity="0.66"/><rect x="1709.5" y="660" width="1.5" height="3" fill="#7c86e8" opacity="0.83"/><rect x="1708.1" y="663" width="1.5" height="3" fill="#7c86e8" opacity="0.91"/><rect x="1687.4" y="666" width="2" height="1.3" fill="#8088e8" opacity="0.38"/><rect x="1711.7" y="672" width="3" height="1.3" fill="#8088e8" opacity="0.36"/><rect x="1710.0" y="672" width="1.5" height="1.3" fill="#8088e8" opacity="0.71"/><rect x="1709.7" y="672" width="1.5" height="3" fill="#7c86e8" opacity="0.82"/><rect x="1708.6" y="675" width="1.5" height="3" fill="#7c86e8" opacity="0.79"/><rect x="1700.4" y="678" width="3" height="1.3" fill="#8088e8" opacity="0.74"/><rect x="1698.9" y="678" width="1" height="1.3" fill="#8088e8" opacity="0.69"/><rect x="1708.7" y="678" width="1.5" height="3" fill="#7c86e8" opacity="0.55"/><rect x="1695.0" y="681" width="1.5" height="1.3" fill="#8088e8" opacity="0.72"/><rect x="1690.7" y="681" width="3" height="1.3" fill="#8088e8" opacity="0.32"/><rect x="1709.3" y="681" width="1.5" height="3" fill="#7c86e8" opacity="0.74"/><rect x="1709.6" y="684" width="1.5" height="3" fill="#7c86e8" opacity="0.81"/><rect x="1691.4" y="687" width="1.5" height="1.3" fill="#8088e8" opacity="0.39"/><rect x="1708.6" y="687" width="1.5" height="3" fill="#7c86e8" opacity="0.62"/><rect x="1687.8" y="690" width="1.5" height="1.3" fill="#8088e8" opacity="0.67"/><rect x="1708.8" y="690" width="1.5" height="3" fill="#7c86e8" opacity="0.57"/><rect x="1709.9" y="693" width="1.5" height="3" fill="#7c86e8" opacity="0.66"/><rect x="1709.7" y="696" width="1.5" height="3" fill="#7c86e8" opacity="0.80"/><rect x="1717.4" y="674" width="2" height="1.3" fill="#6068c0" opacity="0.59"/><rect x="1718.9" y="690" width="1" height="1.3" fill="#6068c0" opacity="0.51"/><rect x="1721.2" y="694" width="2" height="1.3" fill="#6068c0" opacity="0.49"/><rect x="1709.1" y="720" width="1" height="1.3" fill="#8890f0" opacity="0.57"/><rect x="1709.5" y="720" width="1" height="1.3" fill="#8890f0" opacity="0.70"/><rect x="1688.7" y="720" width="2" height="1.3" fill="#8890f0" opacity="0.79"/><rect x="1689.7" y="723" width="1.5" height="1.3" fill="#8890f0" opacity="0.53"/><rect x="1699.1" y="729" width="3" height="1.3" fill="#8890f0" opacity="0.70"/><rect x="1706.2" y="732" width="1.5" height="3" fill="#7c86e8" opacity="0.86"/><rect x="1711.0" y="735" width="2" height="1.3" fill="#8890f0" opacity="0.63"/><rect x="1706.3" y="735" width="1.5" height="3" fill="#7c86e8" opacity="0.67"/><rect x="1697.9" y="738" width="1" height="1.3" fill="#8890f0" opacity="0.69"/><rect x="1708.0" y="738" width="1.5" height="3" fill="#7c86e8" opacity="0.75"/><rect x="1693.7" y="741" width="1" height="1.3" fill="#8890f0" opacity="0.55"/><rect x="1690.5" y="744" width="1.5" height="1.3" fill="#8890f0" opacity="0.73"/><rect x="1707.7" y="744" width="1.5" height="3" fill="#7c86e8" opacity="0.57"/><rect x="1691.7" y="750" width="1" height="1.3" fill="#8890f0" opacity="0.67"/><rect x="1707.1" y="750" width="1.5" height="3" fill="#7c86e8" opacity="0.51"/><rect x="1695.2" y="753" width="1" height="1.3" fill="#8890f0" opacity="0.49"/><rect x="1700.9" y="753" width="3" height="1.3" fill="#8890f0" opacity="0.46"/><rect x="1706.9" y="759" width="1.5" height="3" fill="#7c86e8" opacity="0.71"/><rect x="1708.1" y="762" width="1" height="1.3" fill="#8890f0" opacity="0.38"/><rect x="1706.6" y="762" width="1.5" height="3" fill="#7c86e8" opacity="0.87"/><rect x="1696.6" y="765" width="1.5" height="1.3" fill="#8890f0" opacity="0.56"/><rect x="1704.5" y="768" width="2" height="1.3" fill="#8890f0" opacity="0.78"/><rect x="1707.0" y="771" width="1.5" height="3" fill="#7c86e8" opacity="0.73"/><rect x="1690.2" y="774" width="2" height="1.3" fill="#8890f0" opacity="0.59"/><rect x="1701.7" y="777" width="1" height="1.3" fill="#8890f0" opacity="0.34"/><rect x="1706.6" y="777" width="1.5" height="3" fill="#7c86e8" opacity="0.87"/><rect x="1706.3" y="780" width="1" height="1.3" fill="#8890f0" opacity="0.50"/><rect x="1691.3" y="780" width="2" height="1.3" fill="#8890f0" opacity="0.62"/><rect x="1707.9" y="780" width="1.5" height="3" fill="#7c86e8" opacity="0.84"/><rect x="1705.7" y="783" width="3" height="1.3" fill="#8890f0" opacity="0.47"/><rect x="1690.0" y="786" width="1.5" height="1.3" fill="#8890f0" opacity="0.49"/><rect x="1695.7" y="786" width="1" height="1.3" fill="#8890f0" opacity="0.72"/><rect x="1707.4" y="789" width="1.5" height="3" fill="#7c86e8" opacity="0.79"/><rect x="1720.4" y="870" width="1" height="1.3" fill="#7880e0" opacity="0.51"/><rect x="1720.5" y="873" width="3" height="1.3" fill="#7880e0" opacity="0.50"/><rect x="1718.4" y="876" width="3" height="1.3" fill="#7880e0" opacity="0.55"/><rect x="1718.9" y="879" width="1.5" height="1.3" fill="#7880e0" opacity="0.69"/><rect x="1719.9" y="882" width="2" height="1.3" fill="#7880e0" opacity="0.49"/><rect x="1718.4" y="888" width="3" height="1.3" fill="#7880e0" opacity="0.46"/><rect x="1719.9" y="894" width="3" height="1.3" fill="#7880e0" opacity="0.42"/><rect x="1720.9" y="897" width="1" height="1.3" fill="#7880e0" opacity="0.58"/><rect x="1713.7" y="903" width="1.5" height="1.3" fill="#7880e0" opacity="0.32"/><rect x="1721.4" y="909" width="2" height="1.3" fill="#7880e0" opacity="0.70"/><rect x="1719.4" y="909" width="1.5" height="1.3" fill="#7880e0" opacity="0.79"/><rect x="1712.3" y="912" width="1.5" height="1.3" fill="#7880e0" opacity="0.75"/><rect x="1716.4" y="924" width="2" height="1.3" fill="#7880e0" opacity="0.63"/><rect x="1710.3" y="927" width="2" height="1.3" fill="#7880e0" opacity="0.77"/><rect x="1714.7" y="930" width="1.5" height="1.3" fill="#7880e0" opacity="0.60"/><rect x="1721.2" y="936" width="2" height="1.3" fill="#7880e0" opacity="0.63"/><rect x="1717.7" y="942" width="2" height="1.3" fill="#7880e0" opacity="0.58"/><rect x="1721.3" y="945" width="1" height="1.3" fill="#7880e0" opacity="0.45"/><rect x="1721.2" y="948" width="1" height="1.3" fill="#7880e0" opacity="0.40"/><rect x="1721.4" y="951" width="1" height="1.3" fill="#7880e0" opacity="0.37"/><rect x="1720.8" y="951" width="1" height="1.3" fill="#7880e0" opacity="0.52"/><rect x="1718.3" y="954" width="3" height="1.3" fill="#7880e0" opacity="0.76"/><rect x="1693.5" y="930" width="1.5" height="1.3" fill="#7880e0" opacity="0.34"/><rect x="1697.5" y="933" width="2" height="1.3" fill="#7880e0" opacity="0.41"/><rect x="1703.5" y="933" width="1.5" height="1.3" fill="#7880e0" opacity="0.73"/><rect x="1702.2" y="933" width="2" height="1.3" fill="#7880e0" opacity="0.77"/><rect x="1703.0" y="936" width="1" height="1.3" fill="#7880e0" opacity="0.35"/><rect x="1694.7" y="939" width="1" height="1.3" fill="#7880e0" opacity="0.30"/><rect x="1709.9" y="939" width="3" height="1.3" fill="#7880e0" opacity="0.72"/><rect x="1709.3" y="942" width="2" height="1.3" fill="#7880e0" opacity="0.32"/><rect x="1695.3" y="945" width="3" height="1.3" fill="#7880e0" opacity="0.54"/><rect x="1695.8" y="951" width="2" height="1.3" fill="#7880e0" opacity="0.55"/><rect x="1690.9" y="951" width="1.5" height="1.3" fill="#7880e0" opacity="0.57"/><rect x="1709.1" y="954" width="1.5" height="1.3" fill="#7880e0" opacity="0.52"/><rect x="1703.9" y="954" width="1.5" height="1.3" fill="#7880e0" opacity="0.49"/><rect x="1813.2" y="845" width="1.5" height="1.3" fill="#6a70c0" opacity="0.47"/><line x1="1104.5" y1="577" x2="1104.5" y2="955" stroke="#0c3a10" stroke-width="3"/><line x1="1104.5" y1="579" x2="1104.5" y2="955" stroke="#98dc98" stroke-width="1" stroke-dasharray="4 3"/><line x1="1147.5" y1="577" x2="1147.5" y2="955" stroke="#0c3a10" stroke-width="3"/><line x1="1147.5" y1="579" x2="1147.5" y2="955" stroke="#98dc98" stroke-width="1" stroke-dasharray="4 3"/><line x1="1110.5" y1="577" x2="1110.5" y2="955" stroke="#1c1a4a" stroke-width="1"/><line x1="1139.5" y1="577" x2="1139.5" y2="955" stroke="#1a1640" stroke-width="1"/></svg>
<div class="abs" style="left:1015px;top:869px;width:176px;height:71px;background:rgba(0,0,6,0.8);border-radius:4px"></div>
<div class="abs mono" style="left:1026px;top:878px;font-size:17px;line-height:29px;color:#f4f4f4;white-space:pre">Freq: 14.32 MHz
Span:   &plusmn;50 kHz</div>
<div class="abs" style="left:336px;top:955px;width:1535px;height:34px;background:#000"></div>
<div class="abs" style="left:337px;top:955px;width:33px;height:34px;background:#f4f4f4"></div>
<div class="abs" style="left:339px;top:957px;width:28px;height:29px;box-sizing:border-box;border:1px solid #d8d8d8;border-radius:3px;background:#fff"></div>
<svg class="abs" style="left:341px;top:961px" width="22" height="22"><circle cx="11" cy="11" r="9" fill="none" stroke="#444" stroke-width="1.8"/><path d="M5.5 11 L10 7.5 V14.5 Z M10 11 L14 7.5 V14.5 Z" fill="#222"/></svg>
<svg class="abs" style="left:370px;top:955px" width="1353" height="34" viewBox="370 955 1353 34"><defs><linearGradient id="bbg" x1="0" y1="0" x2="0" y2="1"><stop offset="0" stop-color="#4a4a4a"/><stop offset="0.45" stop-color="#262626"/><stop offset="0.5" stop-color="#000"/><stop offset="1" stop-color="#000"/></linearGradient><linearGradient id="hlg" x1="0" y1="0" x2="0" y2="1"><stop offset="0" stop-color="#7a7a7a"/><stop offset="0.45" stop-color="#444"/><stop offset="1" stop-color="#2c2c2c"/></linearGradient><radialGradient id="yg" cx="1046" cy="993" r="135" gradientUnits="userSpaceOnUse" gradientTransform="translate(1046 993) scale(1 0.15) translate(-1046 -993)"><stop offset="0" stop-color="#c0b810" stop-opacity="0.95"/><stop offset="0.5" stop-color="#a8a010" stop-opacity="0.6"/><stop offset="1" stop-color="#a8a010" stop-opacity="0"/></radialGradient></defs><rect x="370" y="955" width="1353" height="34" fill="url(#bbg)"/><rect x="910" y="955" width="270" height="34" fill="url(#hlg)"/><rect x="910" y="955" width="270" height="34" fill="url(#yg)"/><line x1="370" y1="955.5" x2="1723" y2="955.5" stroke="#bbb" stroke-width="1"/><line x1="383.0" y1="956" x2="383.0" y2="960" stroke="#ddd" stroke-width="1"/><line x1="396.5" y1="956" x2="396.5" y2="963" stroke="#ddd" stroke-width="1"/><line x1="410.0" y1="956" x2="410.0" y2="960" stroke="#ddd" stroke-width="1"/><line x1="423.5" y1="956" x2="423.5" y2="963" stroke="#ddd" stroke-width="1"/><line x1="437.0" y1="956" x2="437.0" y2="960" stroke="#ddd" stroke-width="1"/><line x1="450.5" y1="956" x2="450.5" y2="963" stroke="#ddd" stroke-width="1"/><line x1="464.0" y1="956" x2="464.0" y2="960" stroke="#ddd" stroke-width="1"/><line x1="477.5" y1="956" x2="477.5" y2="963" stroke="#ddd" stroke-width="1"/><line x1="491.0" y1="956" x2="491.0" y2="960" stroke="#ddd" stroke-width="1"/><line x1="504.5" y1="956" x2="504.5" y2="963" stroke="#ddd" stroke-width="1"/><line x1="518.0" y1="956" x2="518.0" y2="960" stroke="#ddd" stroke-width="1"/><line x1="531.5" y1="956" x2="531.5" y2="963" stroke="#ddd" stroke-width="1"/><line x1="545.0" y1="956" x2="545.0" y2="960" stroke="#ddd" stroke-width="1"/><line x1="558.5" y1="956" x2="558.5" y2="963" stroke="#ddd" stroke-width="1"/><line x1="572.0" y1="956" x2="572.0" y2="960" stroke="#ddd" stroke-width="1"/><line x1="585.5" y1="956" x2="585.5" y2="963" stroke="#ddd" stroke-width="1"/><line x1="599.0" y1="956" x2="599.0" y2="960" stroke="#ddd" stroke-width="1"/><line x1="612.5" y1="956" x2="612.5" y2="963" stroke="#ddd" stroke-width="1"/><line x1="626.0" y1="956" x2="626.0" y2="960" stroke="#ddd" stroke-width="1"/><line x1="639.5" y1="956" x2="639.5" y2="963" stroke="#ddd" stroke-width="1"/><line x1="653.0" y1="956" x2="653.0" y2="960" stroke="#ddd" stroke-width="1"/><line x1="666.5" y1="956" x2="666.5" y2="963" stroke="#ddd" stroke-width="1"/><line x1="680.0" y1="956" x2="680.0" y2="960" stroke="#ddd" stroke-width="1"/><line x1="693.5" y1="956" x2="693.5" y2="963" stroke="#ddd" stroke-width="1"/><line x1="707.0" y1="956" x2="707.0" y2="960" stroke="#ddd" stroke-width="1"/><line x1="720.5" y1="956" x2="720.5" y2="963" stroke="#ddd" stroke-width="1"/><line x1="734.0" y1="956" x2="734.0" y2="960" stroke="#ddd" stroke-width="1"/><line x1="747.5" y1="956" x2="747.5" y2="963" stroke="#ddd" stroke-width="1"/><line x1="761.0" y1="956" x2="761.0" y2="960" stroke="#ddd" stroke-width="1"/><line x1="774.5" y1="956" x2="774.5" y2="963" stroke="#ddd" stroke-width="1"/><line x1="788.0" y1="956" x2="788.0" y2="960" stroke="#ddd" stroke-width="1"/><line x1="801.5" y1="956" x2="801.5" y2="963" stroke="#ddd" stroke-width="1"/><line x1="815.0" y1="956" x2="815.0" y2="960" stroke="#ddd" stroke-width="1"/><line x1="828.5" y1="956" x2="828.5" y2="963" stroke="#ddd" stroke-width="1"/><line x1="842.0" y1="956" x2="842.0" y2="960" stroke="#ddd" stroke-width="1"/><line x1="855.5" y1="956" x2="855.5" y2="963" stroke="#ddd" stroke-width="1"/><line x1="869.0" y1="956" x2="869.0" y2="960" stroke="#ddd" stroke-width="1"/><line x1="882.5" y1="956" x2="882.5" y2="963" stroke="#ddd" stroke-width="1"/><line x1="896.0" y1="956" x2="896.0" y2="960" stroke="#ddd" stroke-width="1"/><line x1="909.5" y1="956" x2="909.5" y2="963" stroke="#ddd" stroke-width="1"/><line x1="923.0" y1="956" x2="923.0" y2="960" stroke="#ddd" stroke-width="1"/><line x1="936.5" y1="956" x2="936.5" y2="963" stroke="#ddd" stroke-width="1"/><line x1="950.0" y1="956" x2="950.0" y2="960" stroke="#ddd" stroke-width="1"/><line x1="963.5" y1="956" x2="963.5" y2="963" stroke="#ddd" stroke-width="1"/><line x1="977.0" y1="956" x2="977.0" y2="960" stroke="#ddd" stroke-width="1"/><line x1="990.5" y1="956" x2="990.5" y2="963" stroke="#ddd" stroke-width="1"/><line x1="1004.0" y1="956" x2="1004.0" y2="960" stroke="#ddd" stroke-width="1"/><line x1="1017.5" y1="956" x2="1017.5" y2="963" stroke="#ddd" stroke-width="1"/><line x1="1031.0" y1="956" x2="1031.0" y2="960" stroke="#ddd" stroke-width="1"/><line x1="1044.5" y1="956" x2="1044.5" y2="963" stroke="#ddd" stroke-width="1"/><line x1="1058.0" y1="956" x2="1058.0" y2="960" stroke="#ddd" stroke-width="1"/><line x1="1071.5" y1="956" x2="1071.5" y2="963" stroke="#ddd" stroke-width="1"/><line x1="1085.0" y1="956" x2="1085.0" y2="960" stroke="#ddd" stroke-width="1"/><line x1="1098.5" y1="956" x2="1098.5" y2="963" stroke="#ddd" stroke-width="1"/><line x1="1112.0" y1="956" x2="1112.0" y2="960" stroke="#ddd" stroke-width="1"/><line x1="1125.5" y1="956" x2="1125.5" y2="963" stroke="#ddd" stroke-width="1"/><line x1="1139.0" y1="956" x2="1139.0" y2="960" stroke="#ddd" stroke-width="1"/><line x1="1152.5" y1="956" x2="1152.5" y2="963" stroke="#ddd" stroke-width="1"/><line x1="1166.0" y1="956" x2="1166.0" y2="960" stroke="#ddd" stroke-width="1"/><line x1="1179.5" y1="956" x2="1179.5" y2="963" stroke="#ddd" stroke-width="1"/><line x1="1193.0" y1="956" x2="1193.0" y2="960" stroke="#ddd" stroke-width="1"/><line x1="1206.5" y1="956" x2="1206.5" y2="963" stroke="#ddd" stroke-width="1"/><line x1="1220.0" y1="956" x2="1220.0" y2="960" stroke="#ddd" stroke-width="1"/><line x1="1233.5" y1="956" x2="1233.5" y2="963" stroke="#ddd" stroke-width="1"/><line x1="1247.0" y1="956" x2="1247.0" y2="960" stroke="#ddd" stroke-width="1"/><line x1="1260.5" y1="956" x2="1260.5" y2="963" stroke="#ddd" stroke-width="1"/><line x1="1274.0" y1="956" x2="1274.0" y2="960" stroke="#ddd" stroke-width="1"/><line x1="1287.5" y1="956" x2="1287.5" y2="963" stroke="#ddd" stroke-width="1"/><line x1="1301.0" y1="956" x2="1301.0" y2="960" stroke="#ddd" stroke-width="1"/><line x1="1314.5" y1="956" x2="1314.5" y2="963" stroke="#ddd" stroke-width="1"/><line x1="1328.0" y1="956" x2="1328.0" y2="960" stroke="#ddd" stroke-width="1"/><line x1="1341.5" y1="956" x2="1341.5" y2="963" stroke="#ddd" stroke-width="1"/><line x1="1355.0" y1="956" x2="1355.0" y2="960" stroke="#ddd" stroke-width="1"/><line x1="1368.5" y1="956" x2="1368.5" y2="963" stroke="#ddd" stroke-width="1"/><line x1="1382.0" y1="956" x2="1382.0" y2="960" stroke="#ddd" stroke-width="1"/><line x1="1395.5" y1="956" x2="1395.5" y2="963" stroke="#ddd" stroke-width="1"/><line x1="1409.0" y1="956" x2="1409.0" y2="960" stroke="#ddd" stroke-width="1"/><line x1="1422.5" y1="956" x2="1422.5" y2="963" stroke="#ddd" stroke-width="1"/><line x1="1436.0" y1="956" x2="1436.0" y2="960" stroke="#ddd" stroke-width="1"/><line x1="1449.5" y1="956" x2="1449.5" y2="963" stroke="#ddd" stroke-width="1"/><line x1="1463.0" y1="956" x2="1463.0" y2="960" stroke="#ddd" stroke-width="1"/><line x1="1476.5" y1="956" x2="1476.5" y2="963" stroke="#ddd" stroke-width="1"/><line x1="1490.0" y1="956" x2="1490.0" y2="960" stroke="#ddd" stroke-width="1"/><line x1="1503.5" y1="956" x2="1503.5" y2="963" stroke="#ddd" stroke-width="1"/><line x1="1517.0" y1="956" x2="1517.0" y2="960" stroke="#ddd" stroke-width="1"/><line x1="1530.5" y1="956" x2="1530.5" y2="963" stroke="#ddd" stroke-width="1"/><line x1="1544.0" y1="956" x2="1544.0" y2="960" stroke="#ddd" stroke-width="1"/><line x1="1557.5" y1="956" x2="1557.5" y2="963" stroke="#ddd" stroke-width="1"/><line x1="1571.0" y1="956" x2="1571.0" y2="960" stroke="#ddd" stroke-width="1"/><line x1="1584.5" y1="956" x2="1584.5" y2="963" stroke="#ddd" stroke-width="1"/><line x1="1598.0" y1="956" x2="1598.0" y2="960" stroke="#ddd" stroke-width="1"/><line x1="1611.5" y1="956" x2="1611.5" y2="963" stroke="#ddd" stroke-width="1"/><line x1="1625.0" y1="956" x2="1625.0" y2="960" stroke="#ddd" stroke-width="1"/><line x1="1638.5" y1="956" x2="1638.5" y2="963" stroke="#ddd" stroke-width="1"/><line x1="1652.0" y1="956" x2="1652.0" y2="960" stroke="#ddd" stroke-width="1"/><line x1="1665.5" y1="956" x2="1665.5" y2="963" stroke="#ddd" stroke-width="1"/><line x1="1679.0" y1="956" x2="1679.0" y2="960" stroke="#ddd" stroke-width="1"/><line x1="1692.5" y1="956" x2="1692.5" y2="963" stroke="#ddd" stroke-width="1"/><line x1="1706.0" y1="956" x2="1706.0" y2="960" stroke="#ddd" stroke-width="1"/><line x1="1719.5" y1="956" x2="1719.5" y2="963" stroke="#ddd" stroke-width="1"/><line x1="910.5" y1="955" x2="910.5" y2="989" stroke="#e8e8e8" stroke-width="1.2"/><line x1="1180.5" y1="955" x2="1180.5" y2="989" stroke="#e8e8e8" stroke-width="1.2"/><line x1="1046" y1="955" x2="1046" y2="989" stroke="#f0f020" stroke-width="1.5"/></svg>
<div class="abs t" style="left:405.5px;top:968px;width:90px;text-align:center;font-size:15.5px;color:#c8c8c8">14.100</div>
<div class="abs t" style="left:540.6px;top:968px;width:90px;text-align:center;font-size:15.5px;color:#c8c8c8">14.150</div>
<div class="abs t" style="left:675.7px;top:968px;width:90px;text-align:center;font-size:15.5px;color:#c8c8c8">14.200</div>
<div class="abs t" style="left:810.8px;top:968px;width:90px;text-align:center;font-size:15.5px;color:#c8c8c8">14.250</div>
<div class="abs t" style="left:945.9px;top:968px;width:90px;text-align:center;font-size:15.5px;color:#c8c8c8">14.300</div>
<div class="abs t" style="left:1081.0px;top:968px;width:90px;text-align:center;font-size:15.5px;color:#c8c8c8">14.350</div>
<div class="abs t" style="left:1216.1px;top:968px;width:90px;text-align:center;font-size:15.5px;color:#c8c8c8">14.400</div>
<div class="abs t" style="left:1351.2px;top:968px;width:90px;text-align:center;font-size:15.5px;color:#c8c8c8">14.450</div>
<div class="abs t" style="left:1486.3px;top:968px;width:90px;text-align:center;font-size:15.5px;color:#c8c8c8">14.500</div>
<div class="abs t" style="left:1621.4px;top:968px;width:90px;text-align:center;font-size:15.5px;color:#c8c8c8">14.550</div>
<div class="abs" style="left:1721px;top:955px;width:150px;height:34px;background:#f2f2f2"></div>
<div class="abs" style="left:1723px;top:958px;width:45px;height:29px;box-sizing:border-box;border:1px solid #d4d4d4;border-bottom-color:#c4c4c4;border-radius:4px;background:#fdfdfd"></div>
<div class="abs" style="left:1772px;top:958px;width:62px;height:29px;box-sizing:border-box;border:1px solid #d4d4d4;border-bottom-color:#c4c4c4;border-radius:4px;background:#fdfdfd"></div>
<div class="abs" style="left:1838px;top:958px;width:30px;height:29px;box-sizing:border-box;border:1px solid #d4d4d4;border-bottom-color:#c4c4c4;border-radius:4px;background:#fdfdfd"></div>
<svg class="abs" style="left:1733px;top:963px" width="24" height="20"><path d="M13 5 Q13 2 16 2 V0" stroke="#333" stroke-width="1.2" fill="none"/><rect x="2" y="7" width="19" height="11" rx="1.5" fill="#e8e8e8" stroke="#222" stroke-width="1.6"/><path d="M4.5 10.5 H18.5 M4.5 13.5 H18.5" stroke="#222" stroke-width="2" stroke-dasharray="1.6 0.7"/></svg>
<div class="abs t" style="left:1785px;top:964px;font-size:14px;color:#222">x5</div>
<svg class="abs" style="left:1819px;top:966px" width="8" height="12"><path d="M1 1 L7 6 L1 11 Z" fill="#111"/></svg>
<svg class="abs" style="left:1842px;top:962px" width="22" height="22"><circle cx="11" cy="11" r="9" fill="none" stroke="#444" stroke-width="1.8"/><path d="M16.5 11 L12 7.5 V14.5 Z M12 11 L8 7.5 V14.5 Z" fill="#222"/></svg>
<div class="abs" style="left:1870px;top:171px;width:1px;height:784px;background:#9a9a9a"></div>
<div class="abs" style="left:1871px;top:171px;width:47px;height:818px;background:#000"></div>
<div class="abs" style="left:1918px;top:169px;width:2px;height:821px;background:#f0f0f0"></div>
<div class="abs" style="left:1872px;top:172px;width:46px;height:35px;box-sizing:border-box;border-bottom:1px solid #777;background:linear-gradient(#3c3c3c,#2c2c2c 50%,#000 52%,#000)"></div>
<div class="abs t" style="left:1872px;top:181px;width:46px;text-align:center;font-size:14px;color:#eee">Auto</div>
<div class="abs" style="left:1873px;top:440px;width:44px;height:293px;background:linear-gradient(#f0f020 0%,#ffffc0 6%,#ffffff 14%,#ffffff 38%,#c8d4fa 50%,#7c9cf4 62%,#4a60b8 74%,#222c6a 88%,#0c0c30 100%)"></div>
<div class="abs" style="left:1873px;top:733px;width:44px;height:2px;background:#f0f0f0"></div>
<div class="abs t" style="left:1872px;top:250.0px;width:46px;text-align:center;font-size:11px;color:#e8e8e8">-10</div>
<div class="abs t" style="left:1872px;top:298.7px;width:46px;text-align:center;font-size:11px;color:#e8e8e8">-20</div>
<div class="abs t" style="left:1872px;top:347.4px;width:46px;text-align:center;font-size:11px;color:#e8e8e8">-30</div>
<div class="abs t" style="left:1872px;top:396.1px;width:46px;text-align:center;font-size:11px;color:#e8e8e8">-40</div>
<div class="abs" style="left:1878px;top:440.8px;width:34px;height:22px;border-radius:5px;background:#807c28"></div>
<div class="abs t" style="left:1872px;top:444.8px;width:46px;text-align:center;font-size:11px;color:#e8e8e8">-50</div>
<div class="abs" style="left:1878px;top:489.5px;width:34px;height:22px;border-radius:5px;background:#6c6c6c"></div>
<div class="abs t" style="left:1872px;top:493.5px;width:46px;text-align:center;font-size:11px;color:#e8e8e8">-60</div>
<div class="abs" style="left:1878px;top:538.2px;width:34px;height:22px;border-radius:5px;background:#6e7280"></div>
<div class="abs t" style="left:1872px;top:542.2px;width:46px;text-align:center;font-size:11px;color:#e8e8e8">-70</div>
<div class="abs" style="left:1878px;top:586.9px;width:34px;height:22px;border-radius:5px;background:#566494"></div>
<div class="abs t" style="left:1872px;top:590.9px;width:46px;text-align:center;font-size:11px;color:#e8e8e8">-80</div>
<div class="abs" style="left:1878px;top:635.6px;width:34px;height:22px;border-radius:5px;background:#34406e"></div>
<div class="abs t" style="left:1872px;top:639.6px;width:46px;text-align:center;font-size:11px;color:#e8e8e8">-90</div>
<div class="abs" style="left:1878px;top:684.3px;width:34px;height:22px;border-radius:5px;background:#1c2244"></div>
<div class="abs t" style="left:1872px;top:688.3px;width:46px;text-align:center;font-size:11px;color:#e8e8e8">-100</div>
<div class="abs t" style="left:1872px;top:737.0px;width:46px;text-align:center;font-size:11px;color:#e8e8e8">-110</div>
<div class="abs t" style="left:1872px;top:785.7px;width:46px;text-align:center;font-size:11px;color:#e8e8e8">-120</div>
<div class="abs t" style="left:1872px;top:834.4px;width:46px;text-align:center;font-size:11px;color:#e8e8e8">-130</div>
<div class="abs t" style="left:1872px;top:883.1px;width:46px;text-align:center;font-size:11px;color:#e8e8e8">-140</div>
<div class="abs t" style="left:1872px;top:931.8px;width:46px;text-align:center;font-size:11px;color:#e8e8e8">-150</div>
<div class="abs" style="left:0;top:989px;width:1920px;height:31px;background:#f0f0f0"></div>
<div class="abs" style="left:0;top:989px;width:1920px;height:1px;background:#e2e2e2"></div>
<div class="abs t" style="left:9px;top:998px;font-size:13.4px;color:#666">RTL-SDR Blog V4, BW = 1.500 MHz</div>
<div class="abs t" style="left:1592px;top:996px;font-size:14px;color:#222">CPU: 2.6%</div>
<div class="abs" style="left:1670px;top:997px;width:69px;height:14px;background:#e6e6e6;border:1px solid #bcbcbc"></div>
<div class="abs t" style="left:1754px;top:996px;font-size:14px;color:#222">Audio: 36ms</div>
<div class="abs" style="left:1845px;top:997px;width:69px;height:14px;background:#e6e6e6;border:1px solid #bcbcbc"></div>
<div class="abs" style="left:1848px;top:1000px;width:11px;height:10px;background:#10b020"></div>
</body></html>
